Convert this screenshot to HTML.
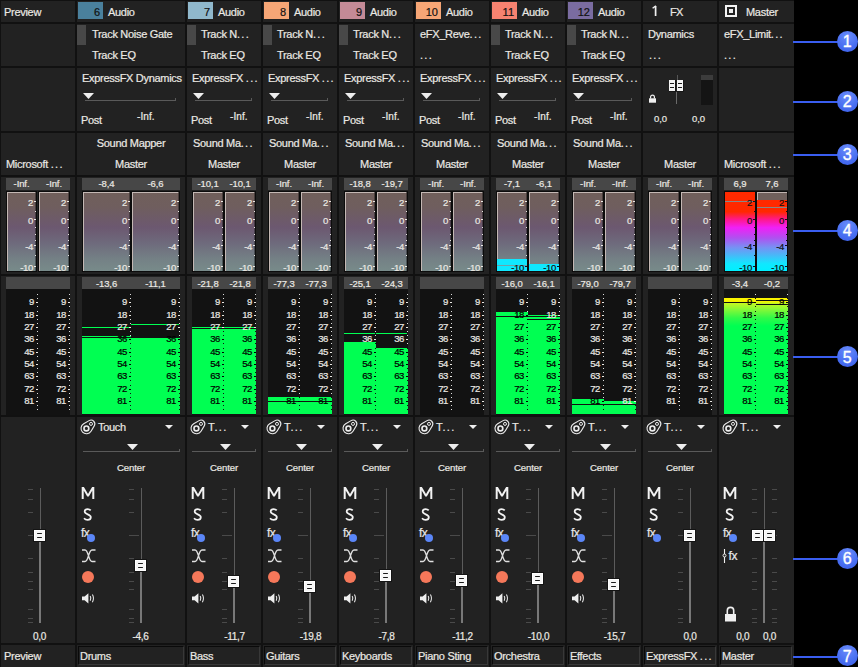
<!DOCTYPE html><html><head><meta charset="utf-8"><style>
html,body{margin:0;padding:0;}
body{width:858px;height:667px;position:relative;overflow:hidden;background:#111;font-family:"Liberation Sans", sans-serif;}
div,span,svg{position:absolute;}
span{white-space:nowrap;-webkit-text-stroke:0.2px currentColor;} b.e{position:static;font-weight:normal;letter-spacing:1.3px;}
</style></head><body>
<div style="left:794px;top:0px;width:64px;height:667px;background:#000;"></div>
<div style="left:1px;top:1px;width:74px;height:21px;background:#222;"></div>
<div style="left:1px;top:24px;width:74px;height:42px;background:#222;"></div>
<div style="left:1px;top:68px;width:74px;height:63px;background:#222;"></div>
<div style="left:1px;top:133px;width:74px;height:42px;background:#222;"></div>
<div style="left:1px;top:177px;width:74px;height:97px;background:#222;"></div>
<div style="left:1px;top:276px;width:74px;height:139px;background:#222;"></div>
<div style="left:1px;top:417px;width:74px;height:226px;background:#222;"></div>
<div style="left:1px;top:645px;width:74px;height:22px;background:#222;"></div>
<div style="left:77px;top:1px;width:108px;height:21px;background:#222;"></div>
<div style="left:77px;top:24px;width:108px;height:42px;background:#222;"></div>
<div style="left:77px;top:68px;width:108px;height:63px;background:#222;"></div>
<div style="left:77px;top:133px;width:108px;height:42px;background:#222;"></div>
<div style="left:77px;top:177px;width:108px;height:97px;background:#222;"></div>
<div style="left:77px;top:276px;width:108px;height:139px;background:#222;"></div>
<div style="left:77px;top:417px;width:108px;height:226px;background:#222;"></div>
<div style="left:77px;top:645px;width:108px;height:22px;background:#222;"></div>
<div style="left:187px;top:1px;width:74px;height:21px;background:#222;"></div>
<div style="left:187px;top:24px;width:74px;height:42px;background:#222;"></div>
<div style="left:187px;top:68px;width:74px;height:63px;background:#222;"></div>
<div style="left:187px;top:133px;width:74px;height:42px;background:#222;"></div>
<div style="left:187px;top:177px;width:74px;height:97px;background:#222;"></div>
<div style="left:187px;top:276px;width:74px;height:139px;background:#222;"></div>
<div style="left:187px;top:417px;width:74px;height:226px;background:#222;"></div>
<div style="left:187px;top:645px;width:74px;height:22px;background:#222;"></div>
<div style="left:263px;top:1px;width:74px;height:21px;background:#222;"></div>
<div style="left:263px;top:24px;width:74px;height:42px;background:#222;"></div>
<div style="left:263px;top:68px;width:74px;height:63px;background:#222;"></div>
<div style="left:263px;top:133px;width:74px;height:42px;background:#222;"></div>
<div style="left:263px;top:177px;width:74px;height:97px;background:#222;"></div>
<div style="left:263px;top:276px;width:74px;height:139px;background:#222;"></div>
<div style="left:263px;top:417px;width:74px;height:226px;background:#222;"></div>
<div style="left:263px;top:645px;width:74px;height:22px;background:#222;"></div>
<div style="left:339px;top:1px;width:74px;height:21px;background:#222;"></div>
<div style="left:339px;top:24px;width:74px;height:42px;background:#222;"></div>
<div style="left:339px;top:68px;width:74px;height:63px;background:#222;"></div>
<div style="left:339px;top:133px;width:74px;height:42px;background:#222;"></div>
<div style="left:339px;top:177px;width:74px;height:97px;background:#222;"></div>
<div style="left:339px;top:276px;width:74px;height:139px;background:#222;"></div>
<div style="left:339px;top:417px;width:74px;height:226px;background:#222;"></div>
<div style="left:339px;top:645px;width:74px;height:22px;background:#222;"></div>
<div style="left:415px;top:1px;width:74px;height:21px;background:#222;"></div>
<div style="left:415px;top:24px;width:74px;height:42px;background:#222;"></div>
<div style="left:415px;top:68px;width:74px;height:63px;background:#222;"></div>
<div style="left:415px;top:133px;width:74px;height:42px;background:#222;"></div>
<div style="left:415px;top:177px;width:74px;height:97px;background:#222;"></div>
<div style="left:415px;top:276px;width:74px;height:139px;background:#222;"></div>
<div style="left:415px;top:417px;width:74px;height:226px;background:#222;"></div>
<div style="left:415px;top:645px;width:74px;height:22px;background:#222;"></div>
<div style="left:491px;top:1px;width:74px;height:21px;background:#222;"></div>
<div style="left:491px;top:24px;width:74px;height:42px;background:#222;"></div>
<div style="left:491px;top:68px;width:74px;height:63px;background:#222;"></div>
<div style="left:491px;top:133px;width:74px;height:42px;background:#222;"></div>
<div style="left:491px;top:177px;width:74px;height:97px;background:#222;"></div>
<div style="left:491px;top:276px;width:74px;height:139px;background:#222;"></div>
<div style="left:491px;top:417px;width:74px;height:226px;background:#222;"></div>
<div style="left:491px;top:645px;width:74px;height:22px;background:#222;"></div>
<div style="left:567px;top:1px;width:74px;height:21px;background:#222;"></div>
<div style="left:567px;top:24px;width:74px;height:42px;background:#222;"></div>
<div style="left:567px;top:68px;width:74px;height:63px;background:#222;"></div>
<div style="left:567px;top:133px;width:74px;height:42px;background:#222;"></div>
<div style="left:567px;top:177px;width:74px;height:97px;background:#222;"></div>
<div style="left:567px;top:276px;width:74px;height:139px;background:#222;"></div>
<div style="left:567px;top:417px;width:74px;height:226px;background:#222;"></div>
<div style="left:567px;top:645px;width:74px;height:22px;background:#222;"></div>
<div style="left:643px;top:1px;width:74px;height:21px;background:#222;"></div>
<div style="left:643px;top:24px;width:74px;height:42px;background:#222;"></div>
<div style="left:643px;top:68px;width:74px;height:63px;background:#222;"></div>
<div style="left:643px;top:133px;width:74px;height:42px;background:#222;"></div>
<div style="left:643px;top:177px;width:74px;height:97px;background:#222;"></div>
<div style="left:643px;top:276px;width:74px;height:139px;background:#222;"></div>
<div style="left:643px;top:417px;width:74px;height:226px;background:#222;"></div>
<div style="left:643px;top:645px;width:74px;height:22px;background:#222;"></div>
<div style="left:719px;top:1px;width:75px;height:21px;background:#222;"></div>
<div style="left:719px;top:24px;width:75px;height:42px;background:#222;"></div>
<div style="left:719px;top:68px;width:75px;height:63px;background:#222;"></div>
<div style="left:719px;top:133px;width:75px;height:42px;background:#222;"></div>
<div style="left:719px;top:177px;width:75px;height:97px;background:#222;"></div>
<div style="left:719px;top:276px;width:75px;height:139px;background:#222;"></div>
<div style="left:719px;top:417px;width:75px;height:226px;background:#222;"></div>
<div style="left:719px;top:645px;width:75px;height:22px;background:#222;"></div>
<span style="left:4px;top:6.69px;font-size:11px;line-height:11px;color:#ebe9e4;letter-spacing:-0.3px;">Preview</span>
<div style="left:78px;top:2px;width:25px;height:17px;background:#4a809c;"></div>
<span style="left:78px;top:6.69px;width:22px;text-align:right;font-size:11px;line-height:11px;color:#111;letter-spacing:0px;">6</span>
<span style="left:108px;top:6.69px;font-size:11px;line-height:11px;color:#ebe9e4;letter-spacing:-0.3px;">Audio</span>
<div style="left:188px;top:2px;width:25px;height:17px;background:#90b8cc;"></div>
<span style="left:188px;top:6.69px;width:22px;text-align:right;font-size:11px;line-height:11px;color:#111;letter-spacing:0px;">7</span>
<span style="left:218px;top:6.69px;font-size:11px;line-height:11px;color:#ebe9e4;letter-spacing:-0.3px;">Audio</span>
<div style="left:264px;top:2px;width:25px;height:17px;background:#f6a676;"></div>
<span style="left:264px;top:6.69px;width:22px;text-align:right;font-size:11px;line-height:11px;color:#111;letter-spacing:0px;">8</span>
<span style="left:294px;top:6.69px;font-size:11px;line-height:11px;color:#ebe9e4;letter-spacing:-0.3px;">Audio</span>
<div style="left:340px;top:2px;width:25px;height:17px;background:#c48a96;"></div>
<span style="left:340px;top:6.69px;width:22px;text-align:right;font-size:11px;line-height:11px;color:#111;letter-spacing:0px;">9</span>
<span style="left:370px;top:6.69px;font-size:11px;line-height:11px;color:#ebe9e4;letter-spacing:-0.3px;">Audio</span>
<div style="left:416px;top:2px;width:25px;height:17px;background:#f6a676;"></div>
<span style="left:416px;top:6.69px;width:22px;text-align:right;font-size:11px;line-height:11px;color:#111;letter-spacing:0px;">10</span>
<span style="left:446px;top:6.69px;font-size:11px;line-height:11px;color:#ebe9e4;letter-spacing:-0.3px;">Audio</span>
<div style="left:492px;top:2px;width:25px;height:17px;background:#f68270;"></div>
<span style="left:492px;top:6.69px;width:22px;text-align:right;font-size:11px;line-height:11px;color:#111;letter-spacing:0px;">11</span>
<span style="left:522px;top:6.69px;font-size:11px;line-height:11px;color:#ebe9e4;letter-spacing:-0.3px;">Audio</span>
<div style="left:568px;top:2px;width:25px;height:17px;background:#7a6ca0;"></div>
<span style="left:568px;top:6.69px;width:22px;text-align:right;font-size:11px;line-height:11px;color:#111;letter-spacing:0px;">12</span>
<span style="left:598px;top:6.69px;font-size:11px;line-height:11px;color:#ebe9e4;letter-spacing:-0.3px;">Audio</span>
<svg style="left:650px;top:4px" width="10" height="14" viewBox="0 0 10 14"><path d="M5.6,2 V12" stroke="#f2f2f2" stroke-width="1.7"/><path d="M5.9,1.9 L2.6,4.3" stroke="#f2f2f2" stroke-width="1.4"/></svg>
<span style="left:670px;top:6.69px;font-size:11px;line-height:11px;color:#ebe9e4;letter-spacing:-0.6px;">FX</span>
<div style="left:725px;top:5px;width:12px;height:12px;background:transparent;border:2px solid #f4f4f4;box-sizing:border-box;"></div>
<div style="left:729px;top:9px;width:4px;height:4px;background:#eeeeee;"></div>
<span style="left:746px;top:6.69px;font-size:11px;line-height:11px;color:#ebe9e4;letter-spacing:-0.3px;">Master</span>
<div style="left:77px;top:25px;width:9px;height:20px;background:#484848;"></div>
<span style="left:92px;top:28.69px;font-size:11px;line-height:11px;color:#ebe9e4;letter-spacing:-0.3px;">Track Noise Gate</span>
<span style="left:92px;top:49.69px;font-size:11px;line-height:11px;color:#ebe9e4;letter-spacing:-0.3px;">Track EQ</span>
<div style="left:187px;top:25px;width:9px;height:20px;background:#484848;"></div>
<span style="left:201px;top:28.69px;font-size:11px;line-height:11px;color:#ebe9e4;letter-spacing:-0.3px;">Track N<b class="e">...</b></span>
<span style="left:201px;top:49.69px;font-size:11px;line-height:11px;color:#ebe9e4;letter-spacing:-0.3px;">Track EQ</span>
<div style="left:263px;top:25px;width:9px;height:20px;background:#484848;"></div>
<span style="left:277px;top:28.69px;font-size:11px;line-height:11px;color:#ebe9e4;letter-spacing:-0.3px;">Track N<b class="e">...</b></span>
<span style="left:277px;top:49.69px;font-size:11px;line-height:11px;color:#ebe9e4;letter-spacing:-0.3px;">Track EQ</span>
<div style="left:339px;top:25px;width:9px;height:20px;background:#484848;"></div>
<span style="left:353px;top:28.69px;font-size:11px;line-height:11px;color:#ebe9e4;letter-spacing:-0.3px;">Track N<b class="e">...</b></span>
<span style="left:353px;top:49.69px;font-size:11px;line-height:11px;color:#ebe9e4;letter-spacing:-0.3px;">Track EQ</span>
<span style="left:420px;top:28.69px;font-size:11px;line-height:11px;color:#ebe9e4;letter-spacing:-0.3px;">eFX_Reve<b class="e">...</b></span>
<span style="left:420px;top:49.69px;font-size:11px;line-height:11px;color:#ebe9e4;letter-spacing:-0.3px;"><b class="e">...</b></span>
<div style="left:491px;top:25px;width:9px;height:20px;background:#484848;"></div>
<span style="left:505px;top:28.69px;font-size:11px;line-height:11px;color:#ebe9e4;letter-spacing:-0.3px;">Track N<b class="e">...</b></span>
<span style="left:505px;top:49.69px;font-size:11px;line-height:11px;color:#ebe9e4;letter-spacing:-0.3px;">Track EQ</span>
<div style="left:567px;top:25px;width:9px;height:20px;background:#484848;"></div>
<span style="left:581px;top:28.69px;font-size:11px;line-height:11px;color:#ebe9e4;letter-spacing:-0.3px;">Track N<b class="e">...</b></span>
<span style="left:581px;top:49.69px;font-size:11px;line-height:11px;color:#ebe9e4;letter-spacing:-0.3px;">Track EQ</span>
<span style="left:648px;top:28.69px;font-size:11px;line-height:11px;color:#ebe9e4;letter-spacing:-0.3px;">Dynamics</span>
<span style="left:649px;top:49.69px;font-size:11px;line-height:11px;color:#ebe9e4;letter-spacing:-0.3px;"><b class="e">...</b></span>
<span style="left:724px;top:28.69px;font-size:11px;line-height:11px;color:#ebe9e4;letter-spacing:-0.3px;">eFX_Limit<b class="e">...</b></span>
<span style="left:724px;top:49.69px;font-size:11px;line-height:11px;color:#ebe9e4;letter-spacing:-0.3px;"><b class="e">...</b></span>
<span style="left:82px;top:72.69px;font-size:11px;line-height:11px;color:#ebe9e4;letter-spacing:-0.3px;">ExpressFX Dynamics</span>
<svg style="left:83px;top:93px" width="11" height="6"><polygon points="0,0 11,0 5.5,6" fill="#eee"/></svg>
<div style="left:85px;top:100px;width:91px;height:1px;background:#5a5a5a;"></div>
<div style="left:175px;top:98px;width:1px;height:2px;background:#5a5a5a;"></div>
<span style="left:81px;top:114.69px;font-size:11px;line-height:11px;color:#ebe9e4;letter-spacing:-0.3px;">Post</span>
<span style="left:137px;top:111.53px;font-size:10px;line-height:10px;color:#ebe9e4;letter-spacing:0.1px;">-Inf.</span>
<span style="left:192px;top:72.69px;font-size:11px;line-height:11px;color:#ebe9e4;letter-spacing:-0.3px;">ExpressFX <b class="e">...</b></span>
<svg style="left:193px;top:93px" width="11" height="6"><polygon points="0,0 11,0 5.5,6" fill="#eee"/></svg>
<div style="left:195px;top:100px;width:57px;height:1px;background:#5a5a5a;"></div>
<div style="left:251px;top:98px;width:1px;height:2px;background:#5a5a5a;"></div>
<span style="left:191px;top:114.69px;font-size:11px;line-height:11px;color:#ebe9e4;letter-spacing:-0.3px;">Post</span>
<span style="left:230px;top:111.53px;font-size:10px;line-height:10px;color:#ebe9e4;letter-spacing:0.1px;">-Inf.</span>
<span style="left:268px;top:72.69px;font-size:11px;line-height:11px;color:#ebe9e4;letter-spacing:-0.3px;">ExpressFX <b class="e">...</b></span>
<svg style="left:269px;top:93px" width="11" height="6"><polygon points="0,0 11,0 5.5,6" fill="#eee"/></svg>
<div style="left:271px;top:100px;width:57px;height:1px;background:#5a5a5a;"></div>
<div style="left:327px;top:98px;width:1px;height:2px;background:#5a5a5a;"></div>
<span style="left:267px;top:114.69px;font-size:11px;line-height:11px;color:#ebe9e4;letter-spacing:-0.3px;">Post</span>
<span style="left:306px;top:111.53px;font-size:10px;line-height:10px;color:#ebe9e4;letter-spacing:0.1px;">-Inf.</span>
<span style="left:344px;top:72.69px;font-size:11px;line-height:11px;color:#ebe9e4;letter-spacing:-0.3px;">ExpressFX <b class="e">...</b></span>
<svg style="left:345px;top:93px" width="11" height="6"><polygon points="0,0 11,0 5.5,6" fill="#eee"/></svg>
<div style="left:347px;top:100px;width:57px;height:1px;background:#5a5a5a;"></div>
<div style="left:403px;top:98px;width:1px;height:2px;background:#5a5a5a;"></div>
<span style="left:343px;top:114.69px;font-size:11px;line-height:11px;color:#ebe9e4;letter-spacing:-0.3px;">Post</span>
<span style="left:382px;top:111.53px;font-size:10px;line-height:10px;color:#ebe9e4;letter-spacing:0.1px;">-Inf.</span>
<span style="left:420px;top:72.69px;font-size:11px;line-height:11px;color:#ebe9e4;letter-spacing:-0.3px;">ExpressFX <b class="e">...</b></span>
<svg style="left:421px;top:93px" width="11" height="6"><polygon points="0,0 11,0 5.5,6" fill="#eee"/></svg>
<div style="left:423px;top:100px;width:57px;height:1px;background:#5a5a5a;"></div>
<div style="left:479px;top:98px;width:1px;height:2px;background:#5a5a5a;"></div>
<span style="left:419px;top:114.69px;font-size:11px;line-height:11px;color:#ebe9e4;letter-spacing:-0.3px;">Post</span>
<span style="left:458px;top:111.53px;font-size:10px;line-height:10px;color:#ebe9e4;letter-spacing:0.1px;">-Inf.</span>
<span style="left:496px;top:72.69px;font-size:11px;line-height:11px;color:#ebe9e4;letter-spacing:-0.3px;">ExpressFX <b class="e">...</b></span>
<svg style="left:497px;top:93px" width="11" height="6"><polygon points="0,0 11,0 5.5,6" fill="#eee"/></svg>
<div style="left:499px;top:100px;width:57px;height:1px;background:#5a5a5a;"></div>
<div style="left:555px;top:98px;width:1px;height:2px;background:#5a5a5a;"></div>
<span style="left:495px;top:114.69px;font-size:11px;line-height:11px;color:#ebe9e4;letter-spacing:-0.3px;">Post</span>
<span style="left:534px;top:111.53px;font-size:10px;line-height:10px;color:#ebe9e4;letter-spacing:0.1px;">-Inf.</span>
<span style="left:572px;top:72.69px;font-size:11px;line-height:11px;color:#ebe9e4;letter-spacing:-0.3px;">ExpressFX <b class="e">...</b></span>
<svg style="left:573px;top:93px" width="11" height="6"><polygon points="0,0 11,0 5.5,6" fill="#eee"/></svg>
<div style="left:575px;top:100px;width:57px;height:1px;background:#5a5a5a;"></div>
<div style="left:631px;top:98px;width:1px;height:2px;background:#5a5a5a;"></div>
<span style="left:571px;top:114.69px;font-size:11px;line-height:11px;color:#ebe9e4;letter-spacing:-0.3px;">Post</span>
<span style="left:610px;top:111.53px;font-size:10px;line-height:10px;color:#ebe9e4;letter-spacing:0.1px;">-Inf.</span>
<div style="left:677px;top:75px;width:1px;height:5px;background:#555;"></div>
<div style="left:676px;top:92px;width:1px;height:12px;background:#6a6a6a;"></div>
<div style="left:668.5px;top:79.5px;width:7px;height:12px;background:#161616;"></div>
<div style="left:669px;top:80px;width:6px;height:11px;background:#f4f4f4;"></div>
<div style="left:670px;top:83px;width:4px;height:1px;background:#1a1a1a;"></div>
<div style="left:670px;top:87px;width:4px;height:1px;background:#1a1a1a;"></div>
<div style="left:676.5px;top:79.5px;width:7px;height:12px;background:#161616;"></div>
<div style="left:677px;top:80px;width:6px;height:11px;background:#f4f4f4;"></div>
<div style="left:678px;top:83px;width:4px;height:1px;background:#1a1a1a;"></div>
<div style="left:678px;top:87px;width:4px;height:1px;background:#1a1a1a;"></div>
<div style="left:701px;top:75px;width:12px;height:30px;background:#141414;"></div>
<div style="left:701px;top:75px;width:12px;height:5px;background:#3c3c3c;"></div>
<svg style="left:649px;top:93.5px" width="7" height="9" viewBox="0 0 7 9"><path d="M1.6,4.5 V3 A1.9,1.9 0 0 1 5.4,3 V4.5" stroke="#f0f0f0" stroke-width="1.2" fill="none"/><rect x="0" y="4.3" width="7" height="4.4" fill="#f0f0f0"/></svg>
<span style="left:654px;top:114.16px;font-size:9.5px;line-height:9.5px;color:#ebe9e4;letter-spacing:-0.1px;">0,0</span>
<span style="left:692px;top:114.16px;font-size:9.5px;line-height:9.5px;color:#ebe9e4;letter-spacing:-0.1px;">0,0</span>
<span style="left:6px;top:158.69px;font-size:11px;line-height:11px;color:#ebe9e4;letter-spacing:-0.3px;">Microsoft <b class="e">...</b></span>
<span style="left:77px;top:137.69px;width:108px;text-align:center;font-size:11px;line-height:11px;color:#ebe9e4;letter-spacing:-0.3px;">Sound Mapper</span>
<span style="left:77px;top:158.69px;width:108px;text-align:center;font-size:11px;line-height:11px;color:#ebe9e4;letter-spacing:-0.3px;">Master</span>
<span style="left:193px;top:137.69px;font-size:11px;line-height:11px;color:#ebe9e4;letter-spacing:-0.3px;">Sound Ma<b class="e">...</b></span>
<span style="left:187px;top:158.69px;width:74px;text-align:center;font-size:11px;line-height:11px;color:#ebe9e4;letter-spacing:-0.3px;">Master</span>
<span style="left:269px;top:137.69px;font-size:11px;line-height:11px;color:#ebe9e4;letter-spacing:-0.3px;">Sound Ma<b class="e">...</b></span>
<span style="left:263px;top:158.69px;width:74px;text-align:center;font-size:11px;line-height:11px;color:#ebe9e4;letter-spacing:-0.3px;">Master</span>
<span style="left:345px;top:137.69px;font-size:11px;line-height:11px;color:#ebe9e4;letter-spacing:-0.3px;">Sound Ma<b class="e">...</b></span>
<span style="left:339px;top:158.69px;width:74px;text-align:center;font-size:11px;line-height:11px;color:#ebe9e4;letter-spacing:-0.3px;">Master</span>
<span style="left:421px;top:137.69px;font-size:11px;line-height:11px;color:#ebe9e4;letter-spacing:-0.3px;">Sound Ma<b class="e">...</b></span>
<span style="left:415px;top:158.69px;width:74px;text-align:center;font-size:11px;line-height:11px;color:#ebe9e4;letter-spacing:-0.3px;">Master</span>
<span style="left:497px;top:137.69px;font-size:11px;line-height:11px;color:#ebe9e4;letter-spacing:-0.3px;">Sound Ma<b class="e">...</b></span>
<span style="left:491px;top:158.69px;width:74px;text-align:center;font-size:11px;line-height:11px;color:#ebe9e4;letter-spacing:-0.3px;">Master</span>
<span style="left:573px;top:137.69px;font-size:11px;line-height:11px;color:#ebe9e4;letter-spacing:-0.3px;">Sound Ma<b class="e">...</b></span>
<span style="left:567px;top:158.69px;width:74px;text-align:center;font-size:11px;line-height:11px;color:#ebe9e4;letter-spacing:-0.3px;">Master</span>
<span style="left:643px;top:158.69px;width:74px;text-align:center;font-size:11px;line-height:11px;color:#ebe9e4;letter-spacing:-0.3px;">Master</span>
<span style="left:724px;top:158.69px;font-size:11px;line-height:11px;color:#ebe9e4;letter-spacing:-0.3px;">Microsoft <b class="e">...</b></span>
<div style="left:6px;top:178px;width:64px;height:12px;background:#474747;"></div>
<span style="left:7px;top:179.16px;width:29px;text-align:center;font-size:9.5px;line-height:9.5px;color:#ebe9e4;letter-spacing:-0.1px;">-Inf.</span>
<div style="left:6px;top:191px;width:31px;height:81px;background:#0c0c0c;"></div>
<div style="left:7px;top:192px;width:29px;height:79px;background:linear-gradient(to bottom,#705f5b 0%,#6f5e5e 18%,#6c5870 44%,#6e6a7c 64%,#748085 84%,#788b8a 100%);border-top:1px solid #c4b8b4;border-left:1px solid #c4b8b4;border-right:1px solid rgba(0,0,0,0.35);box-sizing:border-box;"></div>
<span style="left:7px;top:197.87px;width:26px;text-align:right;font-size:9.6px;line-height:9.6px;color:#ebe9e4;letter-spacing:-0.4px;">2</span>
<div style="left:34px;top:201px;width:2px;height:1px;background:#ebe9e4;"></div>
<span style="left:7px;top:215.87px;width:26px;text-align:right;font-size:9.6px;line-height:9.6px;color:#ebe9e4;letter-spacing:-0.4px;">0</span>
<div style="left:34px;top:219px;width:2px;height:1px;background:#ebe9e4;"></div>
<span style="left:7px;top:241.87px;width:26px;text-align:right;font-size:9.6px;line-height:9.6px;color:#ebe9e4;letter-spacing:-0.4px;">-4</span>
<div style="left:34px;top:245px;width:2px;height:1px;background:#ebe9e4;"></div>
<span style="left:7px;top:262.87px;width:26px;text-align:right;font-size:9.6px;line-height:9.6px;color:#ebe9e4;letter-spacing:-0.4px;">-10</span>
<div style="left:34px;top:266px;width:2px;height:1px;background:#ebe9e4;"></div>
<div style="left:35px;top:211px;width:1px;height:1px;background:#ebe9e4;"></div>
<div style="left:35px;top:227px;width:1px;height:1px;background:#ebe9e4;"></div>
<div style="left:35px;top:234px;width:1px;height:1px;background:#ebe9e4;"></div>
<div style="left:35px;top:240px;width:1px;height:1px;background:#ebe9e4;"></div>
<div style="left:35px;top:255px;width:1px;height:1px;background:#ebe9e4;"></div>
<span style="left:39px;top:179.16px;width:30px;text-align:center;font-size:9.5px;line-height:9.5px;color:#ebe9e4;letter-spacing:-0.1px;">-Inf.</span>
<div style="left:38px;top:191px;width:32px;height:81px;background:#0c0c0c;"></div>
<div style="left:39px;top:192px;width:30px;height:79px;background:linear-gradient(to bottom,#705f5b 0%,#6f5e5e 18%,#6c5870 44%,#6e6a7c 64%,#748085 84%,#788b8a 100%);border-top:1px solid #c4b8b4;border-left:1px solid #c4b8b4;border-right:1px solid rgba(0,0,0,0.35);box-sizing:border-box;"></div>
<span style="left:39px;top:197.87px;width:27px;text-align:right;font-size:9.6px;line-height:9.6px;color:#ebe9e4;letter-spacing:-0.4px;">2</span>
<div style="left:67px;top:201px;width:2px;height:1px;background:#ebe9e4;"></div>
<span style="left:39px;top:215.87px;width:27px;text-align:right;font-size:9.6px;line-height:9.6px;color:#ebe9e4;letter-spacing:-0.4px;">0</span>
<div style="left:67px;top:219px;width:2px;height:1px;background:#ebe9e4;"></div>
<span style="left:39px;top:241.87px;width:27px;text-align:right;font-size:9.6px;line-height:9.6px;color:#ebe9e4;letter-spacing:-0.4px;">-4</span>
<div style="left:67px;top:245px;width:2px;height:1px;background:#ebe9e4;"></div>
<span style="left:39px;top:262.87px;width:27px;text-align:right;font-size:9.6px;line-height:9.6px;color:#ebe9e4;letter-spacing:-0.4px;">-10</span>
<div style="left:67px;top:266px;width:2px;height:1px;background:#ebe9e4;"></div>
<div style="left:68px;top:211px;width:1px;height:1px;background:#ebe9e4;"></div>
<div style="left:68px;top:227px;width:1px;height:1px;background:#ebe9e4;"></div>
<div style="left:68px;top:234px;width:1px;height:1px;background:#ebe9e4;"></div>
<div style="left:68px;top:240px;width:1px;height:1px;background:#ebe9e4;"></div>
<div style="left:68px;top:255px;width:1px;height:1px;background:#ebe9e4;"></div>
<div style="left:82px;top:178px;width:98px;height:12px;background:#474747;"></div>
<span style="left:83px;top:179.16px;width:47px;text-align:center;font-size:9.5px;line-height:9.5px;color:#ebe9e4;letter-spacing:-0.1px;">-8,4</span>
<div style="left:82px;top:191px;width:49px;height:81px;background:#0c0c0c;"></div>
<div style="left:83px;top:192px;width:47px;height:79px;background:linear-gradient(to bottom,#705f5b 0%,#6f5e5e 18%,#6c5870 44%,#6e6a7c 64%,#748085 84%,#788b8a 100%);border-top:1px solid #c4b8b4;border-left:1px solid #c4b8b4;border-right:1px solid rgba(0,0,0,0.35);box-sizing:border-box;"></div>
<span style="left:83px;top:197.87px;width:44px;text-align:right;font-size:9.6px;line-height:9.6px;color:#ebe9e4;letter-spacing:-0.4px;">2</span>
<div style="left:128px;top:201px;width:2px;height:1px;background:#ebe9e4;"></div>
<span style="left:83px;top:215.87px;width:44px;text-align:right;font-size:9.6px;line-height:9.6px;color:#ebe9e4;letter-spacing:-0.4px;">0</span>
<div style="left:128px;top:219px;width:2px;height:1px;background:#ebe9e4;"></div>
<span style="left:83px;top:241.87px;width:44px;text-align:right;font-size:9.6px;line-height:9.6px;color:#ebe9e4;letter-spacing:-0.4px;">-4</span>
<div style="left:128px;top:245px;width:2px;height:1px;background:#ebe9e4;"></div>
<span style="left:83px;top:262.87px;width:44px;text-align:right;font-size:9.6px;line-height:9.6px;color:#ebe9e4;letter-spacing:-0.4px;">-10</span>
<div style="left:128px;top:266px;width:2px;height:1px;background:#ebe9e4;"></div>
<div style="left:129px;top:211px;width:1px;height:1px;background:#ebe9e4;"></div>
<div style="left:129px;top:227px;width:1px;height:1px;background:#ebe9e4;"></div>
<div style="left:129px;top:234px;width:1px;height:1px;background:#ebe9e4;"></div>
<div style="left:129px;top:240px;width:1px;height:1px;background:#ebe9e4;"></div>
<div style="left:129px;top:255px;width:1px;height:1px;background:#ebe9e4;"></div>
<span style="left:132px;top:179.16px;width:47px;text-align:center;font-size:9.5px;line-height:9.5px;color:#ebe9e4;letter-spacing:-0.1px;">-6,6</span>
<div style="left:131px;top:191px;width:49px;height:81px;background:#0c0c0c;"></div>
<div style="left:132px;top:192px;width:47px;height:79px;background:linear-gradient(to bottom,#705f5b 0%,#6f5e5e 18%,#6c5870 44%,#6e6a7c 64%,#748085 84%,#788b8a 100%);border-top:1px solid #c4b8b4;border-left:1px solid #c4b8b4;border-right:1px solid rgba(0,0,0,0.35);box-sizing:border-box;"></div>
<span style="left:132px;top:197.87px;width:44px;text-align:right;font-size:9.6px;line-height:9.6px;color:#ebe9e4;letter-spacing:-0.4px;">2</span>
<div style="left:177px;top:201px;width:2px;height:1px;background:#ebe9e4;"></div>
<span style="left:132px;top:215.87px;width:44px;text-align:right;font-size:9.6px;line-height:9.6px;color:#ebe9e4;letter-spacing:-0.4px;">0</span>
<div style="left:177px;top:219px;width:2px;height:1px;background:#ebe9e4;"></div>
<span style="left:132px;top:241.87px;width:44px;text-align:right;font-size:9.6px;line-height:9.6px;color:#ebe9e4;letter-spacing:-0.4px;">-4</span>
<div style="left:177px;top:245px;width:2px;height:1px;background:#ebe9e4;"></div>
<span style="left:132px;top:262.87px;width:44px;text-align:right;font-size:9.6px;line-height:9.6px;color:#ebe9e4;letter-spacing:-0.4px;">-10</span>
<div style="left:177px;top:266px;width:2px;height:1px;background:#ebe9e4;"></div>
<div style="left:178px;top:211px;width:1px;height:1px;background:#ebe9e4;"></div>
<div style="left:178px;top:227px;width:1px;height:1px;background:#ebe9e4;"></div>
<div style="left:178px;top:234px;width:1px;height:1px;background:#ebe9e4;"></div>
<div style="left:178px;top:240px;width:1px;height:1px;background:#ebe9e4;"></div>
<div style="left:178px;top:255px;width:1px;height:1px;background:#ebe9e4;"></div>
<div style="left:192px;top:178px;width:64px;height:12px;background:#474747;"></div>
<span style="left:193px;top:179.16px;width:30px;text-align:center;font-size:9.5px;line-height:9.5px;color:#ebe9e4;letter-spacing:-0.1px;">-10,1</span>
<div style="left:192px;top:191px;width:32px;height:81px;background:#0c0c0c;"></div>
<div style="left:193px;top:192px;width:30px;height:79px;background:linear-gradient(to bottom,#705f5b 0%,#6f5e5e 18%,#6c5870 44%,#6e6a7c 64%,#748085 84%,#788b8a 100%);border-top:1px solid #c4b8b4;border-left:1px solid #c4b8b4;border-right:1px solid rgba(0,0,0,0.35);box-sizing:border-box;"></div>
<span style="left:193px;top:197.87px;width:27px;text-align:right;font-size:9.6px;line-height:9.6px;color:#ebe9e4;letter-spacing:-0.4px;">2</span>
<div style="left:221px;top:201px;width:2px;height:1px;background:#ebe9e4;"></div>
<span style="left:193px;top:215.87px;width:27px;text-align:right;font-size:9.6px;line-height:9.6px;color:#ebe9e4;letter-spacing:-0.4px;">0</span>
<div style="left:221px;top:219px;width:2px;height:1px;background:#ebe9e4;"></div>
<span style="left:193px;top:241.87px;width:27px;text-align:right;font-size:9.6px;line-height:9.6px;color:#ebe9e4;letter-spacing:-0.4px;">-4</span>
<div style="left:221px;top:245px;width:2px;height:1px;background:#ebe9e4;"></div>
<span style="left:193px;top:262.87px;width:27px;text-align:right;font-size:9.6px;line-height:9.6px;color:#ebe9e4;letter-spacing:-0.4px;">-10</span>
<div style="left:221px;top:266px;width:2px;height:1px;background:#ebe9e4;"></div>
<div style="left:222px;top:211px;width:1px;height:1px;background:#ebe9e4;"></div>
<div style="left:222px;top:227px;width:1px;height:1px;background:#ebe9e4;"></div>
<div style="left:222px;top:234px;width:1px;height:1px;background:#ebe9e4;"></div>
<div style="left:222px;top:240px;width:1px;height:1px;background:#ebe9e4;"></div>
<div style="left:222px;top:255px;width:1px;height:1px;background:#ebe9e4;"></div>
<span style="left:225px;top:179.16px;width:30px;text-align:center;font-size:9.5px;line-height:9.5px;color:#ebe9e4;letter-spacing:-0.1px;">-10,1</span>
<div style="left:224px;top:191px;width:32px;height:81px;background:#0c0c0c;"></div>
<div style="left:225px;top:192px;width:30px;height:79px;background:linear-gradient(to bottom,#705f5b 0%,#6f5e5e 18%,#6c5870 44%,#6e6a7c 64%,#748085 84%,#788b8a 100%);border-top:1px solid #c4b8b4;border-left:1px solid #c4b8b4;border-right:1px solid rgba(0,0,0,0.35);box-sizing:border-box;"></div>
<span style="left:225px;top:197.87px;width:27px;text-align:right;font-size:9.6px;line-height:9.6px;color:#ebe9e4;letter-spacing:-0.4px;">2</span>
<div style="left:253px;top:201px;width:2px;height:1px;background:#ebe9e4;"></div>
<span style="left:225px;top:215.87px;width:27px;text-align:right;font-size:9.6px;line-height:9.6px;color:#ebe9e4;letter-spacing:-0.4px;">0</span>
<div style="left:253px;top:219px;width:2px;height:1px;background:#ebe9e4;"></div>
<span style="left:225px;top:241.87px;width:27px;text-align:right;font-size:9.6px;line-height:9.6px;color:#ebe9e4;letter-spacing:-0.4px;">-4</span>
<div style="left:253px;top:245px;width:2px;height:1px;background:#ebe9e4;"></div>
<span style="left:225px;top:262.87px;width:27px;text-align:right;font-size:9.6px;line-height:9.6px;color:#ebe9e4;letter-spacing:-0.4px;">-10</span>
<div style="left:253px;top:266px;width:2px;height:1px;background:#ebe9e4;"></div>
<div style="left:254px;top:211px;width:1px;height:1px;background:#ebe9e4;"></div>
<div style="left:254px;top:227px;width:1px;height:1px;background:#ebe9e4;"></div>
<div style="left:254px;top:234px;width:1px;height:1px;background:#ebe9e4;"></div>
<div style="left:254px;top:240px;width:1px;height:1px;background:#ebe9e4;"></div>
<div style="left:254px;top:255px;width:1px;height:1px;background:#ebe9e4;"></div>
<div style="left:268px;top:178px;width:64px;height:12px;background:#474747;"></div>
<span style="left:269px;top:179.16px;width:30px;text-align:center;font-size:9.5px;line-height:9.5px;color:#ebe9e4;letter-spacing:-0.1px;">-Inf.</span>
<div style="left:268px;top:191px;width:32px;height:81px;background:#0c0c0c;"></div>
<div style="left:269px;top:192px;width:30px;height:79px;background:linear-gradient(to bottom,#705f5b 0%,#6f5e5e 18%,#6c5870 44%,#6e6a7c 64%,#748085 84%,#788b8a 100%);border-top:1px solid #c4b8b4;border-left:1px solid #c4b8b4;border-right:1px solid rgba(0,0,0,0.35);box-sizing:border-box;"></div>
<span style="left:269px;top:197.87px;width:27px;text-align:right;font-size:9.6px;line-height:9.6px;color:#ebe9e4;letter-spacing:-0.4px;">2</span>
<div style="left:297px;top:201px;width:2px;height:1px;background:#ebe9e4;"></div>
<span style="left:269px;top:215.87px;width:27px;text-align:right;font-size:9.6px;line-height:9.6px;color:#ebe9e4;letter-spacing:-0.4px;">0</span>
<div style="left:297px;top:219px;width:2px;height:1px;background:#ebe9e4;"></div>
<span style="left:269px;top:241.87px;width:27px;text-align:right;font-size:9.6px;line-height:9.6px;color:#ebe9e4;letter-spacing:-0.4px;">-4</span>
<div style="left:297px;top:245px;width:2px;height:1px;background:#ebe9e4;"></div>
<span style="left:269px;top:262.87px;width:27px;text-align:right;font-size:9.6px;line-height:9.6px;color:#ebe9e4;letter-spacing:-0.4px;">-10</span>
<div style="left:297px;top:266px;width:2px;height:1px;background:#ebe9e4;"></div>
<div style="left:298px;top:211px;width:1px;height:1px;background:#ebe9e4;"></div>
<div style="left:298px;top:227px;width:1px;height:1px;background:#ebe9e4;"></div>
<div style="left:298px;top:234px;width:1px;height:1px;background:#ebe9e4;"></div>
<div style="left:298px;top:240px;width:1px;height:1px;background:#ebe9e4;"></div>
<div style="left:298px;top:255px;width:1px;height:1px;background:#ebe9e4;"></div>
<span style="left:301px;top:179.16px;width:30px;text-align:center;font-size:9.5px;line-height:9.5px;color:#ebe9e4;letter-spacing:-0.1px;">-Inf.</span>
<div style="left:300px;top:191px;width:32px;height:81px;background:#0c0c0c;"></div>
<div style="left:301px;top:192px;width:30px;height:79px;background:linear-gradient(to bottom,#705f5b 0%,#6f5e5e 18%,#6c5870 44%,#6e6a7c 64%,#748085 84%,#788b8a 100%);border-top:1px solid #c4b8b4;border-left:1px solid #c4b8b4;border-right:1px solid rgba(0,0,0,0.35);box-sizing:border-box;"></div>
<span style="left:301px;top:197.87px;width:27px;text-align:right;font-size:9.6px;line-height:9.6px;color:#ebe9e4;letter-spacing:-0.4px;">2</span>
<div style="left:329px;top:201px;width:2px;height:1px;background:#ebe9e4;"></div>
<span style="left:301px;top:215.87px;width:27px;text-align:right;font-size:9.6px;line-height:9.6px;color:#ebe9e4;letter-spacing:-0.4px;">0</span>
<div style="left:329px;top:219px;width:2px;height:1px;background:#ebe9e4;"></div>
<span style="left:301px;top:241.87px;width:27px;text-align:right;font-size:9.6px;line-height:9.6px;color:#ebe9e4;letter-spacing:-0.4px;">-4</span>
<div style="left:329px;top:245px;width:2px;height:1px;background:#ebe9e4;"></div>
<span style="left:301px;top:262.87px;width:27px;text-align:right;font-size:9.6px;line-height:9.6px;color:#ebe9e4;letter-spacing:-0.4px;">-10</span>
<div style="left:329px;top:266px;width:2px;height:1px;background:#ebe9e4;"></div>
<div style="left:330px;top:211px;width:1px;height:1px;background:#ebe9e4;"></div>
<div style="left:330px;top:227px;width:1px;height:1px;background:#ebe9e4;"></div>
<div style="left:330px;top:234px;width:1px;height:1px;background:#ebe9e4;"></div>
<div style="left:330px;top:240px;width:1px;height:1px;background:#ebe9e4;"></div>
<div style="left:330px;top:255px;width:1px;height:1px;background:#ebe9e4;"></div>
<div style="left:344px;top:178px;width:64px;height:12px;background:#474747;"></div>
<span style="left:345px;top:179.16px;width:30px;text-align:center;font-size:9.5px;line-height:9.5px;color:#ebe9e4;letter-spacing:-0.1px;">-18,8</span>
<div style="left:344px;top:191px;width:32px;height:81px;background:#0c0c0c;"></div>
<div style="left:345px;top:192px;width:30px;height:79px;background:linear-gradient(to bottom,#705f5b 0%,#6f5e5e 18%,#6c5870 44%,#6e6a7c 64%,#748085 84%,#788b8a 100%);border-top:1px solid #c4b8b4;border-left:1px solid #c4b8b4;border-right:1px solid rgba(0,0,0,0.35);box-sizing:border-box;"></div>
<span style="left:345px;top:197.87px;width:27px;text-align:right;font-size:9.6px;line-height:9.6px;color:#ebe9e4;letter-spacing:-0.4px;">2</span>
<div style="left:373px;top:201px;width:2px;height:1px;background:#ebe9e4;"></div>
<span style="left:345px;top:215.87px;width:27px;text-align:right;font-size:9.6px;line-height:9.6px;color:#ebe9e4;letter-spacing:-0.4px;">0</span>
<div style="left:373px;top:219px;width:2px;height:1px;background:#ebe9e4;"></div>
<span style="left:345px;top:241.87px;width:27px;text-align:right;font-size:9.6px;line-height:9.6px;color:#ebe9e4;letter-spacing:-0.4px;">-4</span>
<div style="left:373px;top:245px;width:2px;height:1px;background:#ebe9e4;"></div>
<span style="left:345px;top:262.87px;width:27px;text-align:right;font-size:9.6px;line-height:9.6px;color:#ebe9e4;letter-spacing:-0.4px;">-10</span>
<div style="left:373px;top:266px;width:2px;height:1px;background:#ebe9e4;"></div>
<div style="left:374px;top:211px;width:1px;height:1px;background:#ebe9e4;"></div>
<div style="left:374px;top:227px;width:1px;height:1px;background:#ebe9e4;"></div>
<div style="left:374px;top:234px;width:1px;height:1px;background:#ebe9e4;"></div>
<div style="left:374px;top:240px;width:1px;height:1px;background:#ebe9e4;"></div>
<div style="left:374px;top:255px;width:1px;height:1px;background:#ebe9e4;"></div>
<span style="left:377px;top:179.16px;width:30px;text-align:center;font-size:9.5px;line-height:9.5px;color:#ebe9e4;letter-spacing:-0.1px;">-19,7</span>
<div style="left:376px;top:191px;width:32px;height:81px;background:#0c0c0c;"></div>
<div style="left:377px;top:192px;width:30px;height:79px;background:linear-gradient(to bottom,#705f5b 0%,#6f5e5e 18%,#6c5870 44%,#6e6a7c 64%,#748085 84%,#788b8a 100%);border-top:1px solid #c4b8b4;border-left:1px solid #c4b8b4;border-right:1px solid rgba(0,0,0,0.35);box-sizing:border-box;"></div>
<span style="left:377px;top:197.87px;width:27px;text-align:right;font-size:9.6px;line-height:9.6px;color:#ebe9e4;letter-spacing:-0.4px;">2</span>
<div style="left:405px;top:201px;width:2px;height:1px;background:#ebe9e4;"></div>
<span style="left:377px;top:215.87px;width:27px;text-align:right;font-size:9.6px;line-height:9.6px;color:#ebe9e4;letter-spacing:-0.4px;">0</span>
<div style="left:405px;top:219px;width:2px;height:1px;background:#ebe9e4;"></div>
<span style="left:377px;top:241.87px;width:27px;text-align:right;font-size:9.6px;line-height:9.6px;color:#ebe9e4;letter-spacing:-0.4px;">-4</span>
<div style="left:405px;top:245px;width:2px;height:1px;background:#ebe9e4;"></div>
<span style="left:377px;top:262.87px;width:27px;text-align:right;font-size:9.6px;line-height:9.6px;color:#ebe9e4;letter-spacing:-0.4px;">-10</span>
<div style="left:405px;top:266px;width:2px;height:1px;background:#ebe9e4;"></div>
<div style="left:406px;top:211px;width:1px;height:1px;background:#ebe9e4;"></div>
<div style="left:406px;top:227px;width:1px;height:1px;background:#ebe9e4;"></div>
<div style="left:406px;top:234px;width:1px;height:1px;background:#ebe9e4;"></div>
<div style="left:406px;top:240px;width:1px;height:1px;background:#ebe9e4;"></div>
<div style="left:406px;top:255px;width:1px;height:1px;background:#ebe9e4;"></div>
<div style="left:420px;top:178px;width:64px;height:12px;background:#474747;"></div>
<span style="left:421px;top:179.16px;width:30px;text-align:center;font-size:9.5px;line-height:9.5px;color:#ebe9e4;letter-spacing:-0.1px;">-Inf.</span>
<div style="left:420px;top:191px;width:32px;height:81px;background:#0c0c0c;"></div>
<div style="left:421px;top:192px;width:30px;height:79px;background:linear-gradient(to bottom,#705f5b 0%,#6f5e5e 18%,#6c5870 44%,#6e6a7c 64%,#748085 84%,#788b8a 100%);border-top:1px solid #c4b8b4;border-left:1px solid #c4b8b4;border-right:1px solid rgba(0,0,0,0.35);box-sizing:border-box;"></div>
<span style="left:421px;top:197.87px;width:27px;text-align:right;font-size:9.6px;line-height:9.6px;color:#ebe9e4;letter-spacing:-0.4px;">2</span>
<div style="left:449px;top:201px;width:2px;height:1px;background:#ebe9e4;"></div>
<span style="left:421px;top:215.87px;width:27px;text-align:right;font-size:9.6px;line-height:9.6px;color:#ebe9e4;letter-spacing:-0.4px;">0</span>
<div style="left:449px;top:219px;width:2px;height:1px;background:#ebe9e4;"></div>
<span style="left:421px;top:241.87px;width:27px;text-align:right;font-size:9.6px;line-height:9.6px;color:#ebe9e4;letter-spacing:-0.4px;">-4</span>
<div style="left:449px;top:245px;width:2px;height:1px;background:#ebe9e4;"></div>
<span style="left:421px;top:262.87px;width:27px;text-align:right;font-size:9.6px;line-height:9.6px;color:#ebe9e4;letter-spacing:-0.4px;">-10</span>
<div style="left:449px;top:266px;width:2px;height:1px;background:#ebe9e4;"></div>
<div style="left:450px;top:211px;width:1px;height:1px;background:#ebe9e4;"></div>
<div style="left:450px;top:227px;width:1px;height:1px;background:#ebe9e4;"></div>
<div style="left:450px;top:234px;width:1px;height:1px;background:#ebe9e4;"></div>
<div style="left:450px;top:240px;width:1px;height:1px;background:#ebe9e4;"></div>
<div style="left:450px;top:255px;width:1px;height:1px;background:#ebe9e4;"></div>
<span style="left:453px;top:179.16px;width:30px;text-align:center;font-size:9.5px;line-height:9.5px;color:#ebe9e4;letter-spacing:-0.1px;">-Inf.</span>
<div style="left:452px;top:191px;width:32px;height:81px;background:#0c0c0c;"></div>
<div style="left:453px;top:192px;width:30px;height:79px;background:linear-gradient(to bottom,#705f5b 0%,#6f5e5e 18%,#6c5870 44%,#6e6a7c 64%,#748085 84%,#788b8a 100%);border-top:1px solid #c4b8b4;border-left:1px solid #c4b8b4;border-right:1px solid rgba(0,0,0,0.35);box-sizing:border-box;"></div>
<span style="left:453px;top:197.87px;width:27px;text-align:right;font-size:9.6px;line-height:9.6px;color:#ebe9e4;letter-spacing:-0.4px;">2</span>
<div style="left:481px;top:201px;width:2px;height:1px;background:#ebe9e4;"></div>
<span style="left:453px;top:215.87px;width:27px;text-align:right;font-size:9.6px;line-height:9.6px;color:#ebe9e4;letter-spacing:-0.4px;">0</span>
<div style="left:481px;top:219px;width:2px;height:1px;background:#ebe9e4;"></div>
<span style="left:453px;top:241.87px;width:27px;text-align:right;font-size:9.6px;line-height:9.6px;color:#ebe9e4;letter-spacing:-0.4px;">-4</span>
<div style="left:481px;top:245px;width:2px;height:1px;background:#ebe9e4;"></div>
<span style="left:453px;top:262.87px;width:27px;text-align:right;font-size:9.6px;line-height:9.6px;color:#ebe9e4;letter-spacing:-0.4px;">-10</span>
<div style="left:481px;top:266px;width:2px;height:1px;background:#ebe9e4;"></div>
<div style="left:482px;top:211px;width:1px;height:1px;background:#ebe9e4;"></div>
<div style="left:482px;top:227px;width:1px;height:1px;background:#ebe9e4;"></div>
<div style="left:482px;top:234px;width:1px;height:1px;background:#ebe9e4;"></div>
<div style="left:482px;top:240px;width:1px;height:1px;background:#ebe9e4;"></div>
<div style="left:482px;top:255px;width:1px;height:1px;background:#ebe9e4;"></div>
<div style="left:496px;top:178px;width:64px;height:12px;background:#474747;"></div>
<span style="left:497px;top:179.16px;width:30px;text-align:center;font-size:9.5px;line-height:9.5px;color:#ebe9e4;letter-spacing:-0.1px;">-7,1</span>
<div style="left:496px;top:191px;width:32px;height:81px;background:#0c0c0c;"></div>
<div style="left:497px;top:192px;width:30px;height:79px;background:linear-gradient(to bottom,#705f5b 0%,#6f5e5e 18%,#6c5870 44%,#6e6a7c 64%,#748085 84%,#788b8a 100%);border-top:1px solid #c4b8b4;border-left:1px solid #c4b8b4;border-right:1px solid rgba(0,0,0,0.35);box-sizing:border-box;"></div>
<div style="left:497px;top:259px;width:30px;height:12px;background:#10e8ff;"></div>
<div style="left:497px;top:265px;width:30px;height:1px;background:#70a0a8;"></div>
<span style="left:497px;top:197.87px;width:27px;text-align:right;font-size:9.6px;line-height:9.6px;color:#ebe9e4;letter-spacing:-0.4px;">2</span>
<div style="left:525px;top:201px;width:2px;height:1px;background:#ebe9e4;"></div>
<span style="left:497px;top:215.87px;width:27px;text-align:right;font-size:9.6px;line-height:9.6px;color:#ebe9e4;letter-spacing:-0.4px;">0</span>
<div style="left:525px;top:219px;width:2px;height:1px;background:#ebe9e4;"></div>
<span style="left:497px;top:241.87px;width:27px;text-align:right;font-size:9.6px;line-height:9.6px;color:#ebe9e4;letter-spacing:-0.4px;">-4</span>
<div style="left:525px;top:245px;width:2px;height:1px;background:#ebe9e4;"></div>
<span style="left:497px;top:262.87px;width:27px;text-align:right;font-size:9.6px;line-height:9.6px;color:#111;letter-spacing:-0.4px;">-10</span>
<div style="left:525px;top:266px;width:2px;height:1px;background:#111;"></div>
<div style="left:526px;top:211px;width:1px;height:1px;background:#ebe9e4;"></div>
<div style="left:526px;top:227px;width:1px;height:1px;background:#ebe9e4;"></div>
<div style="left:526px;top:234px;width:1px;height:1px;background:#ebe9e4;"></div>
<div style="left:526px;top:240px;width:1px;height:1px;background:#ebe9e4;"></div>
<div style="left:526px;top:255px;width:1px;height:1px;background:#ebe9e4;"></div>
<span style="left:529px;top:179.16px;width:30px;text-align:center;font-size:9.5px;line-height:9.5px;color:#ebe9e4;letter-spacing:-0.1px;">-6,1</span>
<div style="left:528px;top:191px;width:32px;height:81px;background:#0c0c0c;"></div>
<div style="left:529px;top:192px;width:30px;height:79px;background:linear-gradient(to bottom,#705f5b 0%,#6f5e5e 18%,#6c5870 44%,#6e6a7c 64%,#748085 84%,#788b8a 100%);border-top:1px solid #c4b8b4;border-left:1px solid #c4b8b4;border-right:1px solid rgba(0,0,0,0.35);box-sizing:border-box;"></div>
<div style="left:529px;top:264px;width:30px;height:7px;background:#10e8ff;"></div>
<span style="left:529px;top:197.87px;width:27px;text-align:right;font-size:9.6px;line-height:9.6px;color:#ebe9e4;letter-spacing:-0.4px;">2</span>
<div style="left:557px;top:201px;width:2px;height:1px;background:#ebe9e4;"></div>
<span style="left:529px;top:215.87px;width:27px;text-align:right;font-size:9.6px;line-height:9.6px;color:#ebe9e4;letter-spacing:-0.4px;">0</span>
<div style="left:557px;top:219px;width:2px;height:1px;background:#ebe9e4;"></div>
<span style="left:529px;top:241.87px;width:27px;text-align:right;font-size:9.6px;line-height:9.6px;color:#ebe9e4;letter-spacing:-0.4px;">-4</span>
<div style="left:557px;top:245px;width:2px;height:1px;background:#ebe9e4;"></div>
<span style="left:529px;top:262.87px;width:27px;text-align:right;font-size:9.6px;line-height:9.6px;color:#111;letter-spacing:-0.4px;">-10</span>
<div style="left:557px;top:266px;width:2px;height:1px;background:#111;"></div>
<div style="left:558px;top:211px;width:1px;height:1px;background:#ebe9e4;"></div>
<div style="left:558px;top:227px;width:1px;height:1px;background:#ebe9e4;"></div>
<div style="left:558px;top:234px;width:1px;height:1px;background:#ebe9e4;"></div>
<div style="left:558px;top:240px;width:1px;height:1px;background:#ebe9e4;"></div>
<div style="left:558px;top:255px;width:1px;height:1px;background:#ebe9e4;"></div>
<div style="left:572px;top:178px;width:64px;height:12px;background:#474747;"></div>
<span style="left:573px;top:179.16px;width:30px;text-align:center;font-size:9.5px;line-height:9.5px;color:#ebe9e4;letter-spacing:-0.1px;">-Inf.</span>
<div style="left:572px;top:191px;width:32px;height:81px;background:#0c0c0c;"></div>
<div style="left:573px;top:192px;width:30px;height:79px;background:linear-gradient(to bottom,#705f5b 0%,#6f5e5e 18%,#6c5870 44%,#6e6a7c 64%,#748085 84%,#788b8a 100%);border-top:1px solid #c4b8b4;border-left:1px solid #c4b8b4;border-right:1px solid rgba(0,0,0,0.35);box-sizing:border-box;"></div>
<span style="left:573px;top:197.87px;width:27px;text-align:right;font-size:9.6px;line-height:9.6px;color:#ebe9e4;letter-spacing:-0.4px;">2</span>
<div style="left:601px;top:201px;width:2px;height:1px;background:#ebe9e4;"></div>
<span style="left:573px;top:215.87px;width:27px;text-align:right;font-size:9.6px;line-height:9.6px;color:#ebe9e4;letter-spacing:-0.4px;">0</span>
<div style="left:601px;top:219px;width:2px;height:1px;background:#ebe9e4;"></div>
<span style="left:573px;top:241.87px;width:27px;text-align:right;font-size:9.6px;line-height:9.6px;color:#ebe9e4;letter-spacing:-0.4px;">-4</span>
<div style="left:601px;top:245px;width:2px;height:1px;background:#ebe9e4;"></div>
<span style="left:573px;top:262.87px;width:27px;text-align:right;font-size:9.6px;line-height:9.6px;color:#ebe9e4;letter-spacing:-0.4px;">-10</span>
<div style="left:601px;top:266px;width:2px;height:1px;background:#ebe9e4;"></div>
<div style="left:602px;top:211px;width:1px;height:1px;background:#ebe9e4;"></div>
<div style="left:602px;top:227px;width:1px;height:1px;background:#ebe9e4;"></div>
<div style="left:602px;top:234px;width:1px;height:1px;background:#ebe9e4;"></div>
<div style="left:602px;top:240px;width:1px;height:1px;background:#ebe9e4;"></div>
<div style="left:602px;top:255px;width:1px;height:1px;background:#ebe9e4;"></div>
<span style="left:605px;top:179.16px;width:30px;text-align:center;font-size:9.5px;line-height:9.5px;color:#ebe9e4;letter-spacing:-0.1px;">-Inf.</span>
<div style="left:604px;top:191px;width:32px;height:81px;background:#0c0c0c;"></div>
<div style="left:605px;top:192px;width:30px;height:79px;background:linear-gradient(to bottom,#705f5b 0%,#6f5e5e 18%,#6c5870 44%,#6e6a7c 64%,#748085 84%,#788b8a 100%);border-top:1px solid #c4b8b4;border-left:1px solid #c4b8b4;border-right:1px solid rgba(0,0,0,0.35);box-sizing:border-box;"></div>
<span style="left:605px;top:197.87px;width:27px;text-align:right;font-size:9.6px;line-height:9.6px;color:#ebe9e4;letter-spacing:-0.4px;">2</span>
<div style="left:633px;top:201px;width:2px;height:1px;background:#ebe9e4;"></div>
<span style="left:605px;top:215.87px;width:27px;text-align:right;font-size:9.6px;line-height:9.6px;color:#ebe9e4;letter-spacing:-0.4px;">0</span>
<div style="left:633px;top:219px;width:2px;height:1px;background:#ebe9e4;"></div>
<span style="left:605px;top:241.87px;width:27px;text-align:right;font-size:9.6px;line-height:9.6px;color:#ebe9e4;letter-spacing:-0.4px;">-4</span>
<div style="left:633px;top:245px;width:2px;height:1px;background:#ebe9e4;"></div>
<span style="left:605px;top:262.87px;width:27px;text-align:right;font-size:9.6px;line-height:9.6px;color:#ebe9e4;letter-spacing:-0.4px;">-10</span>
<div style="left:633px;top:266px;width:2px;height:1px;background:#ebe9e4;"></div>
<div style="left:634px;top:211px;width:1px;height:1px;background:#ebe9e4;"></div>
<div style="left:634px;top:227px;width:1px;height:1px;background:#ebe9e4;"></div>
<div style="left:634px;top:234px;width:1px;height:1px;background:#ebe9e4;"></div>
<div style="left:634px;top:240px;width:1px;height:1px;background:#ebe9e4;"></div>
<div style="left:634px;top:255px;width:1px;height:1px;background:#ebe9e4;"></div>
<div style="left:648px;top:178px;width:64px;height:12px;background:#474747;"></div>
<span style="left:649px;top:179.16px;width:30px;text-align:center;font-size:9.5px;line-height:9.5px;color:#ebe9e4;letter-spacing:-0.1px;">-Inf.</span>
<div style="left:648px;top:191px;width:32px;height:81px;background:#0c0c0c;"></div>
<div style="left:649px;top:192px;width:30px;height:79px;background:linear-gradient(to bottom,#705f5b 0%,#6f5e5e 18%,#6c5870 44%,#6e6a7c 64%,#748085 84%,#788b8a 100%);border-top:1px solid #c4b8b4;border-left:1px solid #c4b8b4;border-right:1px solid rgba(0,0,0,0.35);box-sizing:border-box;"></div>
<span style="left:649px;top:197.87px;width:27px;text-align:right;font-size:9.6px;line-height:9.6px;color:#ebe9e4;letter-spacing:-0.4px;">2</span>
<div style="left:677px;top:201px;width:2px;height:1px;background:#ebe9e4;"></div>
<span style="left:649px;top:215.87px;width:27px;text-align:right;font-size:9.6px;line-height:9.6px;color:#ebe9e4;letter-spacing:-0.4px;">0</span>
<div style="left:677px;top:219px;width:2px;height:1px;background:#ebe9e4;"></div>
<span style="left:649px;top:241.87px;width:27px;text-align:right;font-size:9.6px;line-height:9.6px;color:#ebe9e4;letter-spacing:-0.4px;">-4</span>
<div style="left:677px;top:245px;width:2px;height:1px;background:#ebe9e4;"></div>
<span style="left:649px;top:262.87px;width:27px;text-align:right;font-size:9.6px;line-height:9.6px;color:#ebe9e4;letter-spacing:-0.4px;">-10</span>
<div style="left:677px;top:266px;width:2px;height:1px;background:#ebe9e4;"></div>
<div style="left:678px;top:211px;width:1px;height:1px;background:#ebe9e4;"></div>
<div style="left:678px;top:227px;width:1px;height:1px;background:#ebe9e4;"></div>
<div style="left:678px;top:234px;width:1px;height:1px;background:#ebe9e4;"></div>
<div style="left:678px;top:240px;width:1px;height:1px;background:#ebe9e4;"></div>
<div style="left:678px;top:255px;width:1px;height:1px;background:#ebe9e4;"></div>
<span style="left:681px;top:179.16px;width:30px;text-align:center;font-size:9.5px;line-height:9.5px;color:#ebe9e4;letter-spacing:-0.1px;">-Inf.</span>
<div style="left:680px;top:191px;width:32px;height:81px;background:#0c0c0c;"></div>
<div style="left:681px;top:192px;width:30px;height:79px;background:linear-gradient(to bottom,#705f5b 0%,#6f5e5e 18%,#6c5870 44%,#6e6a7c 64%,#748085 84%,#788b8a 100%);border-top:1px solid #c4b8b4;border-left:1px solid #c4b8b4;border-right:1px solid rgba(0,0,0,0.35);box-sizing:border-box;"></div>
<span style="left:681px;top:197.87px;width:27px;text-align:right;font-size:9.6px;line-height:9.6px;color:#ebe9e4;letter-spacing:-0.4px;">2</span>
<div style="left:709px;top:201px;width:2px;height:1px;background:#ebe9e4;"></div>
<span style="left:681px;top:215.87px;width:27px;text-align:right;font-size:9.6px;line-height:9.6px;color:#ebe9e4;letter-spacing:-0.4px;">0</span>
<div style="left:709px;top:219px;width:2px;height:1px;background:#ebe9e4;"></div>
<span style="left:681px;top:241.87px;width:27px;text-align:right;font-size:9.6px;line-height:9.6px;color:#ebe9e4;letter-spacing:-0.4px;">-4</span>
<div style="left:709px;top:245px;width:2px;height:1px;background:#ebe9e4;"></div>
<span style="left:681px;top:262.87px;width:27px;text-align:right;font-size:9.6px;line-height:9.6px;color:#ebe9e4;letter-spacing:-0.4px;">-10</span>
<div style="left:709px;top:266px;width:2px;height:1px;background:#ebe9e4;"></div>
<div style="left:710px;top:211px;width:1px;height:1px;background:#ebe9e4;"></div>
<div style="left:710px;top:227px;width:1px;height:1px;background:#ebe9e4;"></div>
<div style="left:710px;top:234px;width:1px;height:1px;background:#ebe9e4;"></div>
<div style="left:710px;top:240px;width:1px;height:1px;background:#ebe9e4;"></div>
<div style="left:710px;top:255px;width:1px;height:1px;background:#ebe9e4;"></div>
<div style="left:724px;top:178px;width:64px;height:12px;background:#474747;"></div>
<span style="left:725px;top:179.16px;width:30px;text-align:center;font-size:9.5px;line-height:9.5px;color:#ebe9e4;letter-spacing:-0.1px;">6,9</span>
<div style="left:724px;top:191px;width:32px;height:81px;background:#0c0c0c;"></div>
<div style="left:725px;top:192px;width:30px;height:79px;background:linear-gradient(to bottom,#ff2a00 0%,#ff2800 25%,#ff1890 35%,#f020f6 45%,#b050f0 58%,#7890f4 70%,#48b8f8 80%,#10e8ff 91%,#00f0ff 100%);"></div>
<div style="left:725px;top:201px;width:30px;height:1px;background:#888;"></div>
<span style="left:725px;top:197.87px;width:27px;text-align:right;font-size:9.6px;line-height:9.6px;color:#111;letter-spacing:-0.4px;">2</span>
<div style="left:753px;top:201px;width:2px;height:1px;background:#111;"></div>
<span style="left:725px;top:215.87px;width:27px;text-align:right;font-size:9.6px;line-height:9.6px;color:#111;letter-spacing:-0.4px;">0</span>
<div style="left:753px;top:219px;width:2px;height:1px;background:#111;"></div>
<span style="left:725px;top:241.87px;width:27px;text-align:right;font-size:9.6px;line-height:9.6px;color:#111;letter-spacing:-0.4px;">-4</span>
<div style="left:753px;top:245px;width:2px;height:1px;background:#111;"></div>
<span style="left:725px;top:262.87px;width:27px;text-align:right;font-size:9.6px;line-height:9.6px;color:#111;letter-spacing:-0.4px;">-10</span>
<div style="left:753px;top:266px;width:2px;height:1px;background:#111;"></div>
<div style="left:754px;top:211px;width:1px;height:1px;background:#111;"></div>
<div style="left:754px;top:227px;width:1px;height:1px;background:#111;"></div>
<div style="left:754px;top:234px;width:1px;height:1px;background:#111;"></div>
<div style="left:754px;top:240px;width:1px;height:1px;background:#111;"></div>
<div style="left:754px;top:255px;width:1px;height:1px;background:#111;"></div>
<span style="left:757px;top:179.16px;width:30px;text-align:center;font-size:9.5px;line-height:9.5px;color:#ebe9e4;letter-spacing:-0.1px;">7,6</span>
<div style="left:756px;top:191px;width:32px;height:81px;background:#0c0c0c;"></div>
<div style="left:757px;top:192px;width:30px;height:79px;background:linear-gradient(to bottom,#ff2a00 0%,#ff2800 25%,#ff1890 35%,#f020f6 45%,#b050f0 58%,#7890f4 70%,#48b8f8 80%,#10e8ff 91%,#00f0ff 100%);"></div>
<div style="left:757px;top:192px;width:30px;height:8px;background:#6f605c;border-top:1px solid #c0b4b0;border-left:1px solid #c0b4b0;box-sizing:border-box;"></div>
<div style="left:757px;top:207px;width:30px;height:1px;background:#888;"></div>
<span style="left:757px;top:197.87px;width:27px;text-align:right;font-size:9.6px;line-height:9.6px;color:#111;letter-spacing:-0.4px;">2</span>
<div style="left:785px;top:201px;width:2px;height:1px;background:#111;"></div>
<span style="left:757px;top:215.87px;width:27px;text-align:right;font-size:9.6px;line-height:9.6px;color:#111;letter-spacing:-0.4px;">0</span>
<div style="left:785px;top:219px;width:2px;height:1px;background:#111;"></div>
<span style="left:757px;top:241.87px;width:27px;text-align:right;font-size:9.6px;line-height:9.6px;color:#111;letter-spacing:-0.4px;">-4</span>
<div style="left:785px;top:245px;width:2px;height:1px;background:#111;"></div>
<span style="left:757px;top:262.87px;width:27px;text-align:right;font-size:9.6px;line-height:9.6px;color:#111;letter-spacing:-0.4px;">-10</span>
<div style="left:785px;top:266px;width:2px;height:1px;background:#111;"></div>
<div style="left:786px;top:211px;width:1px;height:1px;background:#111;"></div>
<div style="left:786px;top:227px;width:1px;height:1px;background:#111;"></div>
<div style="left:786px;top:234px;width:1px;height:1px;background:#111;"></div>
<div style="left:786px;top:240px;width:1px;height:1px;background:#111;"></div>
<div style="left:786px;top:255px;width:1px;height:1px;background:#111;"></div>
<div style="left:6px;top:277px;width:64px;height:12px;background:#474747;"></div>
<div style="left:6px;top:289px;width:64px;height:126px;background:#121212;"></div>
<span style="left:6px;top:279.16px;width:32px;text-align:center;font-size:9.5px;line-height:9.5px;color:#ebe9e4;letter-spacing:-0.1px;"></span>
<span style="left:6px;top:296.87px;width:28px;text-align:right;font-size:9.6px;line-height:9.6px;color:#ebe9e4;letter-spacing:-0.4px;">9</span>
<div style="left:36px;top:302px;width:2px;height:1px;background:#ebe9e4;"></div>
<span style="left:6px;top:309.87px;width:28px;text-align:right;font-size:9.6px;line-height:9.6px;color:#ebe9e4;letter-spacing:-0.4px;">18</span>
<div style="left:36px;top:315px;width:2px;height:1px;background:#ebe9e4;"></div>
<span style="left:6px;top:321.87px;width:28px;text-align:right;font-size:9.6px;line-height:9.6px;color:#ebe9e4;letter-spacing:-0.4px;">27</span>
<div style="left:36px;top:327px;width:2px;height:1px;background:#ebe9e4;"></div>
<span style="left:6px;top:333.87px;width:28px;text-align:right;font-size:9.6px;line-height:9.6px;color:#ebe9e4;letter-spacing:-0.4px;">36</span>
<div style="left:36px;top:339px;width:2px;height:1px;background:#ebe9e4;"></div>
<span style="left:6px;top:346.87px;width:28px;text-align:right;font-size:9.6px;line-height:9.6px;color:#ebe9e4;letter-spacing:-0.4px;">45</span>
<div style="left:36px;top:352px;width:2px;height:1px;background:#ebe9e4;"></div>
<span style="left:6px;top:358.87px;width:28px;text-align:right;font-size:9.6px;line-height:9.6px;color:#ebe9e4;letter-spacing:-0.4px;">54</span>
<div style="left:36px;top:364px;width:2px;height:1px;background:#ebe9e4;"></div>
<span style="left:6px;top:370.87px;width:28px;text-align:right;font-size:9.6px;line-height:9.6px;color:#ebe9e4;letter-spacing:-0.4px;">63</span>
<div style="left:36px;top:376px;width:2px;height:1px;background:#ebe9e4;"></div>
<span style="left:6px;top:383.87px;width:28px;text-align:right;font-size:9.6px;line-height:9.6px;color:#ebe9e4;letter-spacing:-0.4px;">72</span>
<div style="left:36px;top:389px;width:2px;height:1px;background:#ebe9e4;"></div>
<span style="left:6px;top:395.87px;width:28px;text-align:right;font-size:9.6px;line-height:9.6px;color:#ebe9e4;letter-spacing:-0.4px;">81</span>
<div style="left:36px;top:401px;width:2px;height:1px;background:#ebe9e4;"></div>
<div style="left:37px;top:294px;width:1px;height:1px;background:#ddd;"></div>
<div style="left:37px;top:298px;width:1px;height:1px;background:#ddd;"></div>
<div style="left:37px;top:306px;width:1px;height:1px;background:#ddd;"></div>
<div style="left:37px;top:311px;width:1px;height:1px;background:#ddd;"></div>
<div style="left:37px;top:319px;width:1px;height:1px;background:#ddd;"></div>
<div style="left:37px;top:323px;width:1px;height:1px;background:#ddd;"></div>
<div style="left:37px;top:331px;width:1px;height:1px;background:#ddd;"></div>
<div style="left:37px;top:335px;width:1px;height:1px;background:#ddd;"></div>
<div style="left:37px;top:343px;width:1px;height:1px;background:#ddd;"></div>
<div style="left:37px;top:348px;width:1px;height:1px;background:#ddd;"></div>
<div style="left:37px;top:356px;width:1px;height:1px;background:#ddd;"></div>
<div style="left:37px;top:360px;width:1px;height:1px;background:#ddd;"></div>
<div style="left:37px;top:368px;width:1px;height:1px;background:#ddd;"></div>
<div style="left:37px;top:372px;width:1px;height:1px;background:#ddd;"></div>
<div style="left:37px;top:380px;width:1px;height:1px;background:#ddd;"></div>
<div style="left:37px;top:385px;width:1px;height:1px;background:#ddd;"></div>
<div style="left:37px;top:393px;width:1px;height:1px;background:#ddd;"></div>
<div style="left:37px;top:397px;width:1px;height:1px;background:#ddd;"></div>
<div style="left:37px;top:405px;width:1px;height:1px;background:#ddd;"></div>
<div style="left:37px;top:409px;width:1px;height:1px;background:#ddd;"></div>
<span style="left:38px;top:279.16px;width:32px;text-align:center;font-size:9.5px;line-height:9.5px;color:#ebe9e4;letter-spacing:-0.1px;"></span>
<span style="left:38px;top:296.87px;width:28px;text-align:right;font-size:9.6px;line-height:9.6px;color:#ebe9e4;letter-spacing:-0.4px;">9</span>
<div style="left:68px;top:302px;width:2px;height:1px;background:#ebe9e4;"></div>
<span style="left:38px;top:309.87px;width:28px;text-align:right;font-size:9.6px;line-height:9.6px;color:#ebe9e4;letter-spacing:-0.4px;">18</span>
<div style="left:68px;top:315px;width:2px;height:1px;background:#ebe9e4;"></div>
<span style="left:38px;top:321.87px;width:28px;text-align:right;font-size:9.6px;line-height:9.6px;color:#ebe9e4;letter-spacing:-0.4px;">27</span>
<div style="left:68px;top:327px;width:2px;height:1px;background:#ebe9e4;"></div>
<span style="left:38px;top:333.87px;width:28px;text-align:right;font-size:9.6px;line-height:9.6px;color:#ebe9e4;letter-spacing:-0.4px;">36</span>
<div style="left:68px;top:339px;width:2px;height:1px;background:#ebe9e4;"></div>
<span style="left:38px;top:346.87px;width:28px;text-align:right;font-size:9.6px;line-height:9.6px;color:#ebe9e4;letter-spacing:-0.4px;">45</span>
<div style="left:68px;top:352px;width:2px;height:1px;background:#ebe9e4;"></div>
<span style="left:38px;top:358.87px;width:28px;text-align:right;font-size:9.6px;line-height:9.6px;color:#ebe9e4;letter-spacing:-0.4px;">54</span>
<div style="left:68px;top:364px;width:2px;height:1px;background:#ebe9e4;"></div>
<span style="left:38px;top:370.87px;width:28px;text-align:right;font-size:9.6px;line-height:9.6px;color:#ebe9e4;letter-spacing:-0.4px;">63</span>
<div style="left:68px;top:376px;width:2px;height:1px;background:#ebe9e4;"></div>
<span style="left:38px;top:383.87px;width:28px;text-align:right;font-size:9.6px;line-height:9.6px;color:#ebe9e4;letter-spacing:-0.4px;">72</span>
<div style="left:68px;top:389px;width:2px;height:1px;background:#ebe9e4;"></div>
<span style="left:38px;top:395.87px;width:28px;text-align:right;font-size:9.6px;line-height:9.6px;color:#ebe9e4;letter-spacing:-0.4px;">81</span>
<div style="left:68px;top:401px;width:2px;height:1px;background:#ebe9e4;"></div>
<div style="left:69px;top:294px;width:1px;height:1px;background:#ddd;"></div>
<div style="left:69px;top:298px;width:1px;height:1px;background:#ddd;"></div>
<div style="left:69px;top:306px;width:1px;height:1px;background:#ddd;"></div>
<div style="left:69px;top:311px;width:1px;height:1px;background:#ddd;"></div>
<div style="left:69px;top:319px;width:1px;height:1px;background:#ddd;"></div>
<div style="left:69px;top:323px;width:1px;height:1px;background:#ddd;"></div>
<div style="left:69px;top:331px;width:1px;height:1px;background:#ddd;"></div>
<div style="left:69px;top:335px;width:1px;height:1px;background:#ddd;"></div>
<div style="left:69px;top:343px;width:1px;height:1px;background:#ddd;"></div>
<div style="left:69px;top:348px;width:1px;height:1px;background:#ddd;"></div>
<div style="left:69px;top:356px;width:1px;height:1px;background:#ddd;"></div>
<div style="left:69px;top:360px;width:1px;height:1px;background:#ddd;"></div>
<div style="left:69px;top:368px;width:1px;height:1px;background:#ddd;"></div>
<div style="left:69px;top:372px;width:1px;height:1px;background:#ddd;"></div>
<div style="left:69px;top:380px;width:1px;height:1px;background:#ddd;"></div>
<div style="left:69px;top:385px;width:1px;height:1px;background:#ddd;"></div>
<div style="left:69px;top:393px;width:1px;height:1px;background:#ddd;"></div>
<div style="left:69px;top:397px;width:1px;height:1px;background:#ddd;"></div>
<div style="left:69px;top:405px;width:1px;height:1px;background:#ddd;"></div>
<div style="left:69px;top:409px;width:1px;height:1px;background:#ddd;"></div>
<div style="left:82px;top:277px;width:98px;height:12px;background:#474747;"></div>
<div style="left:82px;top:289px;width:98px;height:126px;background:#121212;"></div>
<span style="left:82px;top:279.16px;width:49px;text-align:center;font-size:9.5px;line-height:9.5px;color:#ebe9e4;letter-spacing:-0.1px;">-13,6</span>
<div style="left:82px;top:336px;width:49px;height:78px;background:#00ff52;"></div>
<div style="left:82px;top:337px;width:49px;height:1px;background:#111;"></div>
<div style="left:82px;top:327px;width:48px;height:1px;background:#00ff52;"></div>
<span style="left:82px;top:296.87px;width:45px;text-align:right;font-size:9.6px;line-height:9.6px;color:#ebe9e4;letter-spacing:-0.4px;">9</span>
<div style="left:129px;top:302px;width:2px;height:1px;background:#ebe9e4;"></div>
<span style="left:82px;top:309.87px;width:45px;text-align:right;font-size:9.6px;line-height:9.6px;color:#ebe9e4;letter-spacing:-0.4px;">18</span>
<div style="left:129px;top:315px;width:2px;height:1px;background:#ebe9e4;"></div>
<span style="left:82px;top:321.87px;width:45px;text-align:right;font-size:9.6px;line-height:9.6px;color:#ebe9e4;letter-spacing:-0.4px;">27</span>
<div style="left:129px;top:327px;width:2px;height:1px;background:#ebe9e4;"></div>
<span style="left:82px;top:333.87px;width:45px;text-align:right;font-size:9.6px;line-height:9.6px;color:#000;letter-spacing:-0.4px;">36</span>
<div style="left:129px;top:339px;width:2px;height:1px;background:#000;"></div>
<span style="left:82px;top:346.87px;width:45px;text-align:right;font-size:9.6px;line-height:9.6px;color:#000;letter-spacing:-0.4px;">45</span>
<div style="left:129px;top:352px;width:2px;height:1px;background:#000;"></div>
<span style="left:82px;top:358.87px;width:45px;text-align:right;font-size:9.6px;line-height:9.6px;color:#000;letter-spacing:-0.4px;">54</span>
<div style="left:129px;top:364px;width:2px;height:1px;background:#000;"></div>
<span style="left:82px;top:370.87px;width:45px;text-align:right;font-size:9.6px;line-height:9.6px;color:#000;letter-spacing:-0.4px;">63</span>
<div style="left:129px;top:376px;width:2px;height:1px;background:#000;"></div>
<span style="left:82px;top:383.87px;width:45px;text-align:right;font-size:9.6px;line-height:9.6px;color:#000;letter-spacing:-0.4px;">72</span>
<div style="left:129px;top:389px;width:2px;height:1px;background:#000;"></div>
<span style="left:82px;top:395.87px;width:45px;text-align:right;font-size:9.6px;line-height:9.6px;color:#000;letter-spacing:-0.4px;">81</span>
<div style="left:129px;top:401px;width:2px;height:1px;background:#000;"></div>
<div style="left:130px;top:294px;width:1px;height:1px;background:#ddd;"></div>
<div style="left:130px;top:298px;width:1px;height:1px;background:#ddd;"></div>
<div style="left:130px;top:306px;width:1px;height:1px;background:#ddd;"></div>
<div style="left:130px;top:311px;width:1px;height:1px;background:#ddd;"></div>
<div style="left:130px;top:319px;width:1px;height:1px;background:#ddd;"></div>
<div style="left:130px;top:323px;width:1px;height:1px;background:#ddd;"></div>
<div style="left:130px;top:331px;width:1px;height:1px;background:#ddd;"></div>
<div style="left:130px;top:335px;width:1px;height:1px;background:#ddd;"></div>
<div style="left:130px;top:343px;width:1px;height:1px;background:#111;"></div>
<div style="left:130px;top:348px;width:1px;height:1px;background:#111;"></div>
<div style="left:130px;top:356px;width:1px;height:1px;background:#111;"></div>
<div style="left:130px;top:360px;width:1px;height:1px;background:#111;"></div>
<div style="left:130px;top:368px;width:1px;height:1px;background:#111;"></div>
<div style="left:130px;top:372px;width:1px;height:1px;background:#111;"></div>
<div style="left:130px;top:380px;width:1px;height:1px;background:#111;"></div>
<div style="left:130px;top:385px;width:1px;height:1px;background:#111;"></div>
<div style="left:130px;top:393px;width:1px;height:1px;background:#111;"></div>
<div style="left:130px;top:397px;width:1px;height:1px;background:#111;"></div>
<div style="left:130px;top:405px;width:1px;height:1px;background:#111;"></div>
<div style="left:130px;top:409px;width:1px;height:1px;background:#111;"></div>
<span style="left:131px;top:279.16px;width:49px;text-align:center;font-size:9.5px;line-height:9.5px;color:#ebe9e4;letter-spacing:-0.1px;">-11,1</span>
<div style="left:131px;top:338px;width:49px;height:76px;background:#00ff52;"></div>
<div style="left:131px;top:324px;width:48px;height:1px;background:#00ff52;"></div>
<span style="left:131px;top:296.87px;width:45px;text-align:right;font-size:9.6px;line-height:9.6px;color:#ebe9e4;letter-spacing:-0.4px;">9</span>
<div style="left:178px;top:302px;width:2px;height:1px;background:#ebe9e4;"></div>
<span style="left:131px;top:309.87px;width:45px;text-align:right;font-size:9.6px;line-height:9.6px;color:#ebe9e4;letter-spacing:-0.4px;">18</span>
<div style="left:178px;top:315px;width:2px;height:1px;background:#ebe9e4;"></div>
<span style="left:131px;top:321.87px;width:45px;text-align:right;font-size:9.6px;line-height:9.6px;color:#ebe9e4;letter-spacing:-0.4px;">27</span>
<div style="left:178px;top:327px;width:2px;height:1px;background:#ebe9e4;"></div>
<span style="left:131px;top:333.87px;width:45px;text-align:right;font-size:9.6px;line-height:9.6px;color:#000;letter-spacing:-0.4px;">36</span>
<div style="left:178px;top:339px;width:2px;height:1px;background:#000;"></div>
<span style="left:131px;top:346.87px;width:45px;text-align:right;font-size:9.6px;line-height:9.6px;color:#000;letter-spacing:-0.4px;">45</span>
<div style="left:178px;top:352px;width:2px;height:1px;background:#000;"></div>
<span style="left:131px;top:358.87px;width:45px;text-align:right;font-size:9.6px;line-height:9.6px;color:#000;letter-spacing:-0.4px;">54</span>
<div style="left:178px;top:364px;width:2px;height:1px;background:#000;"></div>
<span style="left:131px;top:370.87px;width:45px;text-align:right;font-size:9.6px;line-height:9.6px;color:#000;letter-spacing:-0.4px;">63</span>
<div style="left:178px;top:376px;width:2px;height:1px;background:#000;"></div>
<span style="left:131px;top:383.87px;width:45px;text-align:right;font-size:9.6px;line-height:9.6px;color:#000;letter-spacing:-0.4px;">72</span>
<div style="left:178px;top:389px;width:2px;height:1px;background:#000;"></div>
<span style="left:131px;top:395.87px;width:45px;text-align:right;font-size:9.6px;line-height:9.6px;color:#000;letter-spacing:-0.4px;">81</span>
<div style="left:178px;top:401px;width:2px;height:1px;background:#000;"></div>
<div style="left:179px;top:294px;width:1px;height:1px;background:#ddd;"></div>
<div style="left:179px;top:298px;width:1px;height:1px;background:#ddd;"></div>
<div style="left:179px;top:306px;width:1px;height:1px;background:#ddd;"></div>
<div style="left:179px;top:311px;width:1px;height:1px;background:#ddd;"></div>
<div style="left:179px;top:319px;width:1px;height:1px;background:#ddd;"></div>
<div style="left:179px;top:323px;width:1px;height:1px;background:#ddd;"></div>
<div style="left:179px;top:331px;width:1px;height:1px;background:#ddd;"></div>
<div style="left:179px;top:335px;width:1px;height:1px;background:#ddd;"></div>
<div style="left:179px;top:343px;width:1px;height:1px;background:#111;"></div>
<div style="left:179px;top:348px;width:1px;height:1px;background:#111;"></div>
<div style="left:179px;top:356px;width:1px;height:1px;background:#111;"></div>
<div style="left:179px;top:360px;width:1px;height:1px;background:#111;"></div>
<div style="left:179px;top:368px;width:1px;height:1px;background:#111;"></div>
<div style="left:179px;top:372px;width:1px;height:1px;background:#111;"></div>
<div style="left:179px;top:380px;width:1px;height:1px;background:#111;"></div>
<div style="left:179px;top:385px;width:1px;height:1px;background:#111;"></div>
<div style="left:179px;top:393px;width:1px;height:1px;background:#111;"></div>
<div style="left:179px;top:397px;width:1px;height:1px;background:#111;"></div>
<div style="left:179px;top:405px;width:1px;height:1px;background:#111;"></div>
<div style="left:179px;top:409px;width:1px;height:1px;background:#111;"></div>
<div style="left:192px;top:277px;width:64px;height:12px;background:#474747;"></div>
<div style="left:192px;top:289px;width:64px;height:126px;background:#121212;"></div>
<span style="left:192px;top:279.16px;width:32px;text-align:center;font-size:9.5px;line-height:9.5px;color:#ebe9e4;letter-spacing:-0.1px;">-21,8</span>
<div style="left:192px;top:327px;width:32px;height:87px;background:#00ff52;"></div>
<div style="left:192px;top:328px;width:32px;height:1px;background:#111;"></div>
<span style="left:192px;top:296.87px;width:28px;text-align:right;font-size:9.6px;line-height:9.6px;color:#ebe9e4;letter-spacing:-0.4px;">9</span>
<div style="left:222px;top:302px;width:2px;height:1px;background:#ebe9e4;"></div>
<span style="left:192px;top:309.87px;width:28px;text-align:right;font-size:9.6px;line-height:9.6px;color:#ebe9e4;letter-spacing:-0.4px;">18</span>
<div style="left:222px;top:315px;width:2px;height:1px;background:#ebe9e4;"></div>
<span style="left:192px;top:321.87px;width:28px;text-align:right;font-size:9.6px;line-height:9.6px;color:#ebe9e4;letter-spacing:-0.4px;">27</span>
<div style="left:222px;top:327px;width:2px;height:1px;background:#ebe9e4;"></div>
<span style="left:192px;top:333.87px;width:28px;text-align:right;font-size:9.6px;line-height:9.6px;color:#000;letter-spacing:-0.4px;">36</span>
<div style="left:222px;top:339px;width:2px;height:1px;background:#000;"></div>
<span style="left:192px;top:346.87px;width:28px;text-align:right;font-size:9.6px;line-height:9.6px;color:#000;letter-spacing:-0.4px;">45</span>
<div style="left:222px;top:352px;width:2px;height:1px;background:#000;"></div>
<span style="left:192px;top:358.87px;width:28px;text-align:right;font-size:9.6px;line-height:9.6px;color:#000;letter-spacing:-0.4px;">54</span>
<div style="left:222px;top:364px;width:2px;height:1px;background:#000;"></div>
<span style="left:192px;top:370.87px;width:28px;text-align:right;font-size:9.6px;line-height:9.6px;color:#000;letter-spacing:-0.4px;">63</span>
<div style="left:222px;top:376px;width:2px;height:1px;background:#000;"></div>
<span style="left:192px;top:383.87px;width:28px;text-align:right;font-size:9.6px;line-height:9.6px;color:#000;letter-spacing:-0.4px;">72</span>
<div style="left:222px;top:389px;width:2px;height:1px;background:#000;"></div>
<span style="left:192px;top:395.87px;width:28px;text-align:right;font-size:9.6px;line-height:9.6px;color:#000;letter-spacing:-0.4px;">81</span>
<div style="left:222px;top:401px;width:2px;height:1px;background:#000;"></div>
<div style="left:223px;top:294px;width:1px;height:1px;background:#ddd;"></div>
<div style="left:223px;top:298px;width:1px;height:1px;background:#ddd;"></div>
<div style="left:223px;top:306px;width:1px;height:1px;background:#ddd;"></div>
<div style="left:223px;top:311px;width:1px;height:1px;background:#ddd;"></div>
<div style="left:223px;top:319px;width:1px;height:1px;background:#ddd;"></div>
<div style="left:223px;top:323px;width:1px;height:1px;background:#ddd;"></div>
<div style="left:223px;top:331px;width:1px;height:1px;background:#111;"></div>
<div style="left:223px;top:335px;width:1px;height:1px;background:#111;"></div>
<div style="left:223px;top:343px;width:1px;height:1px;background:#111;"></div>
<div style="left:223px;top:348px;width:1px;height:1px;background:#111;"></div>
<div style="left:223px;top:356px;width:1px;height:1px;background:#111;"></div>
<div style="left:223px;top:360px;width:1px;height:1px;background:#111;"></div>
<div style="left:223px;top:368px;width:1px;height:1px;background:#111;"></div>
<div style="left:223px;top:372px;width:1px;height:1px;background:#111;"></div>
<div style="left:223px;top:380px;width:1px;height:1px;background:#111;"></div>
<div style="left:223px;top:385px;width:1px;height:1px;background:#111;"></div>
<div style="left:223px;top:393px;width:1px;height:1px;background:#111;"></div>
<div style="left:223px;top:397px;width:1px;height:1px;background:#111;"></div>
<div style="left:223px;top:405px;width:1px;height:1px;background:#111;"></div>
<div style="left:223px;top:409px;width:1px;height:1px;background:#111;"></div>
<span style="left:224px;top:279.16px;width:32px;text-align:center;font-size:9.5px;line-height:9.5px;color:#ebe9e4;letter-spacing:-0.1px;">-21,8</span>
<div style="left:224px;top:327px;width:32px;height:87px;background:#00ff52;"></div>
<div style="left:224px;top:328px;width:32px;height:1px;background:#111;"></div>
<span style="left:224px;top:296.87px;width:28px;text-align:right;font-size:9.6px;line-height:9.6px;color:#ebe9e4;letter-spacing:-0.4px;">9</span>
<div style="left:254px;top:302px;width:2px;height:1px;background:#ebe9e4;"></div>
<span style="left:224px;top:309.87px;width:28px;text-align:right;font-size:9.6px;line-height:9.6px;color:#ebe9e4;letter-spacing:-0.4px;">18</span>
<div style="left:254px;top:315px;width:2px;height:1px;background:#ebe9e4;"></div>
<span style="left:224px;top:321.87px;width:28px;text-align:right;font-size:9.6px;line-height:9.6px;color:#ebe9e4;letter-spacing:-0.4px;">27</span>
<div style="left:254px;top:327px;width:2px;height:1px;background:#ebe9e4;"></div>
<span style="left:224px;top:333.87px;width:28px;text-align:right;font-size:9.6px;line-height:9.6px;color:#000;letter-spacing:-0.4px;">36</span>
<div style="left:254px;top:339px;width:2px;height:1px;background:#000;"></div>
<span style="left:224px;top:346.87px;width:28px;text-align:right;font-size:9.6px;line-height:9.6px;color:#000;letter-spacing:-0.4px;">45</span>
<div style="left:254px;top:352px;width:2px;height:1px;background:#000;"></div>
<span style="left:224px;top:358.87px;width:28px;text-align:right;font-size:9.6px;line-height:9.6px;color:#000;letter-spacing:-0.4px;">54</span>
<div style="left:254px;top:364px;width:2px;height:1px;background:#000;"></div>
<span style="left:224px;top:370.87px;width:28px;text-align:right;font-size:9.6px;line-height:9.6px;color:#000;letter-spacing:-0.4px;">63</span>
<div style="left:254px;top:376px;width:2px;height:1px;background:#000;"></div>
<span style="left:224px;top:383.87px;width:28px;text-align:right;font-size:9.6px;line-height:9.6px;color:#000;letter-spacing:-0.4px;">72</span>
<div style="left:254px;top:389px;width:2px;height:1px;background:#000;"></div>
<span style="left:224px;top:395.87px;width:28px;text-align:right;font-size:9.6px;line-height:9.6px;color:#000;letter-spacing:-0.4px;">81</span>
<div style="left:254px;top:401px;width:2px;height:1px;background:#000;"></div>
<div style="left:255px;top:294px;width:1px;height:1px;background:#ddd;"></div>
<div style="left:255px;top:298px;width:1px;height:1px;background:#ddd;"></div>
<div style="left:255px;top:306px;width:1px;height:1px;background:#ddd;"></div>
<div style="left:255px;top:311px;width:1px;height:1px;background:#ddd;"></div>
<div style="left:255px;top:319px;width:1px;height:1px;background:#ddd;"></div>
<div style="left:255px;top:323px;width:1px;height:1px;background:#ddd;"></div>
<div style="left:255px;top:331px;width:1px;height:1px;background:#111;"></div>
<div style="left:255px;top:335px;width:1px;height:1px;background:#111;"></div>
<div style="left:255px;top:343px;width:1px;height:1px;background:#111;"></div>
<div style="left:255px;top:348px;width:1px;height:1px;background:#111;"></div>
<div style="left:255px;top:356px;width:1px;height:1px;background:#111;"></div>
<div style="left:255px;top:360px;width:1px;height:1px;background:#111;"></div>
<div style="left:255px;top:368px;width:1px;height:1px;background:#111;"></div>
<div style="left:255px;top:372px;width:1px;height:1px;background:#111;"></div>
<div style="left:255px;top:380px;width:1px;height:1px;background:#111;"></div>
<div style="left:255px;top:385px;width:1px;height:1px;background:#111;"></div>
<div style="left:255px;top:393px;width:1px;height:1px;background:#111;"></div>
<div style="left:255px;top:397px;width:1px;height:1px;background:#111;"></div>
<div style="left:255px;top:405px;width:1px;height:1px;background:#111;"></div>
<div style="left:255px;top:409px;width:1px;height:1px;background:#111;"></div>
<div style="left:268px;top:277px;width:64px;height:12px;background:#474747;"></div>
<div style="left:268px;top:289px;width:64px;height:126px;background:#121212;"></div>
<span style="left:268px;top:279.16px;width:32px;text-align:center;font-size:9.5px;line-height:9.5px;color:#ebe9e4;letter-spacing:-0.1px;">-77,3</span>
<div style="left:268px;top:397px;width:32px;height:17px;background:#00ff52;"></div>
<div style="left:268px;top:401px;width:32px;height:1px;background:#111;"></div>
<span style="left:268px;top:296.87px;width:28px;text-align:right;font-size:9.6px;line-height:9.6px;color:#ebe9e4;letter-spacing:-0.4px;">9</span>
<div style="left:298px;top:302px;width:2px;height:1px;background:#ebe9e4;"></div>
<span style="left:268px;top:309.87px;width:28px;text-align:right;font-size:9.6px;line-height:9.6px;color:#ebe9e4;letter-spacing:-0.4px;">18</span>
<div style="left:298px;top:315px;width:2px;height:1px;background:#ebe9e4;"></div>
<span style="left:268px;top:321.87px;width:28px;text-align:right;font-size:9.6px;line-height:9.6px;color:#ebe9e4;letter-spacing:-0.4px;">27</span>
<div style="left:298px;top:327px;width:2px;height:1px;background:#ebe9e4;"></div>
<span style="left:268px;top:333.87px;width:28px;text-align:right;font-size:9.6px;line-height:9.6px;color:#ebe9e4;letter-spacing:-0.4px;">36</span>
<div style="left:298px;top:339px;width:2px;height:1px;background:#ebe9e4;"></div>
<span style="left:268px;top:346.87px;width:28px;text-align:right;font-size:9.6px;line-height:9.6px;color:#ebe9e4;letter-spacing:-0.4px;">45</span>
<div style="left:298px;top:352px;width:2px;height:1px;background:#ebe9e4;"></div>
<span style="left:268px;top:358.87px;width:28px;text-align:right;font-size:9.6px;line-height:9.6px;color:#ebe9e4;letter-spacing:-0.4px;">54</span>
<div style="left:298px;top:364px;width:2px;height:1px;background:#ebe9e4;"></div>
<span style="left:268px;top:370.87px;width:28px;text-align:right;font-size:9.6px;line-height:9.6px;color:#ebe9e4;letter-spacing:-0.4px;">63</span>
<div style="left:298px;top:376px;width:2px;height:1px;background:#ebe9e4;"></div>
<span style="left:268px;top:383.87px;width:28px;text-align:right;font-size:9.6px;line-height:9.6px;color:#ebe9e4;letter-spacing:-0.4px;">72</span>
<div style="left:298px;top:389px;width:2px;height:1px;background:#ebe9e4;"></div>
<span style="left:268px;top:395.87px;width:28px;text-align:right;font-size:9.6px;line-height:9.6px;color:#000;letter-spacing:-0.4px;">81</span>
<div style="left:298px;top:401px;width:2px;height:1px;background:#000;"></div>
<div style="left:299px;top:294px;width:1px;height:1px;background:#ddd;"></div>
<div style="left:299px;top:298px;width:1px;height:1px;background:#ddd;"></div>
<div style="left:299px;top:306px;width:1px;height:1px;background:#ddd;"></div>
<div style="left:299px;top:311px;width:1px;height:1px;background:#ddd;"></div>
<div style="left:299px;top:319px;width:1px;height:1px;background:#ddd;"></div>
<div style="left:299px;top:323px;width:1px;height:1px;background:#ddd;"></div>
<div style="left:299px;top:331px;width:1px;height:1px;background:#ddd;"></div>
<div style="left:299px;top:335px;width:1px;height:1px;background:#ddd;"></div>
<div style="left:299px;top:343px;width:1px;height:1px;background:#ddd;"></div>
<div style="left:299px;top:348px;width:1px;height:1px;background:#ddd;"></div>
<div style="left:299px;top:356px;width:1px;height:1px;background:#ddd;"></div>
<div style="left:299px;top:360px;width:1px;height:1px;background:#ddd;"></div>
<div style="left:299px;top:368px;width:1px;height:1px;background:#ddd;"></div>
<div style="left:299px;top:372px;width:1px;height:1px;background:#ddd;"></div>
<div style="left:299px;top:380px;width:1px;height:1px;background:#ddd;"></div>
<div style="left:299px;top:385px;width:1px;height:1px;background:#ddd;"></div>
<div style="left:299px;top:393px;width:1px;height:1px;background:#ddd;"></div>
<div style="left:299px;top:397px;width:1px;height:1px;background:#111;"></div>
<div style="left:299px;top:405px;width:1px;height:1px;background:#111;"></div>
<div style="left:299px;top:409px;width:1px;height:1px;background:#111;"></div>
<span style="left:300px;top:279.16px;width:32px;text-align:center;font-size:9.5px;line-height:9.5px;color:#ebe9e4;letter-spacing:-0.1px;">-77,3</span>
<div style="left:300px;top:397px;width:32px;height:17px;background:#00ff52;"></div>
<div style="left:300px;top:401px;width:32px;height:1px;background:#111;"></div>
<span style="left:300px;top:296.87px;width:28px;text-align:right;font-size:9.6px;line-height:9.6px;color:#ebe9e4;letter-spacing:-0.4px;">9</span>
<div style="left:330px;top:302px;width:2px;height:1px;background:#ebe9e4;"></div>
<span style="left:300px;top:309.87px;width:28px;text-align:right;font-size:9.6px;line-height:9.6px;color:#ebe9e4;letter-spacing:-0.4px;">18</span>
<div style="left:330px;top:315px;width:2px;height:1px;background:#ebe9e4;"></div>
<span style="left:300px;top:321.87px;width:28px;text-align:right;font-size:9.6px;line-height:9.6px;color:#ebe9e4;letter-spacing:-0.4px;">27</span>
<div style="left:330px;top:327px;width:2px;height:1px;background:#ebe9e4;"></div>
<span style="left:300px;top:333.87px;width:28px;text-align:right;font-size:9.6px;line-height:9.6px;color:#ebe9e4;letter-spacing:-0.4px;">36</span>
<div style="left:330px;top:339px;width:2px;height:1px;background:#ebe9e4;"></div>
<span style="left:300px;top:346.87px;width:28px;text-align:right;font-size:9.6px;line-height:9.6px;color:#ebe9e4;letter-spacing:-0.4px;">45</span>
<div style="left:330px;top:352px;width:2px;height:1px;background:#ebe9e4;"></div>
<span style="left:300px;top:358.87px;width:28px;text-align:right;font-size:9.6px;line-height:9.6px;color:#ebe9e4;letter-spacing:-0.4px;">54</span>
<div style="left:330px;top:364px;width:2px;height:1px;background:#ebe9e4;"></div>
<span style="left:300px;top:370.87px;width:28px;text-align:right;font-size:9.6px;line-height:9.6px;color:#ebe9e4;letter-spacing:-0.4px;">63</span>
<div style="left:330px;top:376px;width:2px;height:1px;background:#ebe9e4;"></div>
<span style="left:300px;top:383.87px;width:28px;text-align:right;font-size:9.6px;line-height:9.6px;color:#ebe9e4;letter-spacing:-0.4px;">72</span>
<div style="left:330px;top:389px;width:2px;height:1px;background:#ebe9e4;"></div>
<span style="left:300px;top:395.87px;width:28px;text-align:right;font-size:9.6px;line-height:9.6px;color:#000;letter-spacing:-0.4px;">81</span>
<div style="left:330px;top:401px;width:2px;height:1px;background:#000;"></div>
<div style="left:331px;top:294px;width:1px;height:1px;background:#ddd;"></div>
<div style="left:331px;top:298px;width:1px;height:1px;background:#ddd;"></div>
<div style="left:331px;top:306px;width:1px;height:1px;background:#ddd;"></div>
<div style="left:331px;top:311px;width:1px;height:1px;background:#ddd;"></div>
<div style="left:331px;top:319px;width:1px;height:1px;background:#ddd;"></div>
<div style="left:331px;top:323px;width:1px;height:1px;background:#ddd;"></div>
<div style="left:331px;top:331px;width:1px;height:1px;background:#ddd;"></div>
<div style="left:331px;top:335px;width:1px;height:1px;background:#ddd;"></div>
<div style="left:331px;top:343px;width:1px;height:1px;background:#ddd;"></div>
<div style="left:331px;top:348px;width:1px;height:1px;background:#ddd;"></div>
<div style="left:331px;top:356px;width:1px;height:1px;background:#ddd;"></div>
<div style="left:331px;top:360px;width:1px;height:1px;background:#ddd;"></div>
<div style="left:331px;top:368px;width:1px;height:1px;background:#ddd;"></div>
<div style="left:331px;top:372px;width:1px;height:1px;background:#ddd;"></div>
<div style="left:331px;top:380px;width:1px;height:1px;background:#ddd;"></div>
<div style="left:331px;top:385px;width:1px;height:1px;background:#ddd;"></div>
<div style="left:331px;top:393px;width:1px;height:1px;background:#ddd;"></div>
<div style="left:331px;top:397px;width:1px;height:1px;background:#111;"></div>
<div style="left:331px;top:405px;width:1px;height:1px;background:#111;"></div>
<div style="left:331px;top:409px;width:1px;height:1px;background:#111;"></div>
<div style="left:344px;top:277px;width:64px;height:12px;background:#474747;"></div>
<div style="left:344px;top:289px;width:64px;height:126px;background:#121212;"></div>
<span style="left:344px;top:279.16px;width:32px;text-align:center;font-size:9.5px;line-height:9.5px;color:#ebe9e4;letter-spacing:-0.1px;">-25,1</span>
<div style="left:344px;top:342px;width:32px;height:72px;background:#00ff52;"></div>
<div style="left:344px;top:333px;width:31px;height:1px;background:#00ff52;"></div>
<span style="left:344px;top:296.87px;width:28px;text-align:right;font-size:9.6px;line-height:9.6px;color:#ebe9e4;letter-spacing:-0.4px;">9</span>
<div style="left:374px;top:302px;width:2px;height:1px;background:#ebe9e4;"></div>
<span style="left:344px;top:309.87px;width:28px;text-align:right;font-size:9.6px;line-height:9.6px;color:#ebe9e4;letter-spacing:-0.4px;">18</span>
<div style="left:374px;top:315px;width:2px;height:1px;background:#ebe9e4;"></div>
<span style="left:344px;top:321.87px;width:28px;text-align:right;font-size:9.6px;line-height:9.6px;color:#ebe9e4;letter-spacing:-0.4px;">27</span>
<div style="left:374px;top:327px;width:2px;height:1px;background:#ebe9e4;"></div>
<span style="left:344px;top:333.87px;width:28px;text-align:right;font-size:9.6px;line-height:9.6px;color:#ebe9e4;letter-spacing:-0.4px;">36</span>
<div style="left:374px;top:339px;width:2px;height:1px;background:#ebe9e4;"></div>
<span style="left:344px;top:346.87px;width:28px;text-align:right;font-size:9.6px;line-height:9.6px;color:#000;letter-spacing:-0.4px;">45</span>
<div style="left:374px;top:352px;width:2px;height:1px;background:#000;"></div>
<span style="left:344px;top:358.87px;width:28px;text-align:right;font-size:9.6px;line-height:9.6px;color:#000;letter-spacing:-0.4px;">54</span>
<div style="left:374px;top:364px;width:2px;height:1px;background:#000;"></div>
<span style="left:344px;top:370.87px;width:28px;text-align:right;font-size:9.6px;line-height:9.6px;color:#000;letter-spacing:-0.4px;">63</span>
<div style="left:374px;top:376px;width:2px;height:1px;background:#000;"></div>
<span style="left:344px;top:383.87px;width:28px;text-align:right;font-size:9.6px;line-height:9.6px;color:#000;letter-spacing:-0.4px;">72</span>
<div style="left:374px;top:389px;width:2px;height:1px;background:#000;"></div>
<span style="left:344px;top:395.87px;width:28px;text-align:right;font-size:9.6px;line-height:9.6px;color:#000;letter-spacing:-0.4px;">81</span>
<div style="left:374px;top:401px;width:2px;height:1px;background:#000;"></div>
<div style="left:375px;top:294px;width:1px;height:1px;background:#ddd;"></div>
<div style="left:375px;top:298px;width:1px;height:1px;background:#ddd;"></div>
<div style="left:375px;top:306px;width:1px;height:1px;background:#ddd;"></div>
<div style="left:375px;top:311px;width:1px;height:1px;background:#ddd;"></div>
<div style="left:375px;top:319px;width:1px;height:1px;background:#ddd;"></div>
<div style="left:375px;top:323px;width:1px;height:1px;background:#ddd;"></div>
<div style="left:375px;top:331px;width:1px;height:1px;background:#ddd;"></div>
<div style="left:375px;top:335px;width:1px;height:1px;background:#ddd;"></div>
<div style="left:375px;top:343px;width:1px;height:1px;background:#111;"></div>
<div style="left:375px;top:348px;width:1px;height:1px;background:#111;"></div>
<div style="left:375px;top:356px;width:1px;height:1px;background:#111;"></div>
<div style="left:375px;top:360px;width:1px;height:1px;background:#111;"></div>
<div style="left:375px;top:368px;width:1px;height:1px;background:#111;"></div>
<div style="left:375px;top:372px;width:1px;height:1px;background:#111;"></div>
<div style="left:375px;top:380px;width:1px;height:1px;background:#111;"></div>
<div style="left:375px;top:385px;width:1px;height:1px;background:#111;"></div>
<div style="left:375px;top:393px;width:1px;height:1px;background:#111;"></div>
<div style="left:375px;top:397px;width:1px;height:1px;background:#111;"></div>
<div style="left:375px;top:405px;width:1px;height:1px;background:#111;"></div>
<div style="left:375px;top:409px;width:1px;height:1px;background:#111;"></div>
<span style="left:376px;top:279.16px;width:32px;text-align:center;font-size:9.5px;line-height:9.5px;color:#ebe9e4;letter-spacing:-0.1px;">-24,3</span>
<div style="left:376px;top:348px;width:32px;height:66px;background:#00ff52;"></div>
<div style="left:376px;top:333px;width:31px;height:1px;background:#00ff52;"></div>
<span style="left:376px;top:296.87px;width:28px;text-align:right;font-size:9.6px;line-height:9.6px;color:#ebe9e4;letter-spacing:-0.4px;">9</span>
<div style="left:406px;top:302px;width:2px;height:1px;background:#ebe9e4;"></div>
<span style="left:376px;top:309.87px;width:28px;text-align:right;font-size:9.6px;line-height:9.6px;color:#ebe9e4;letter-spacing:-0.4px;">18</span>
<div style="left:406px;top:315px;width:2px;height:1px;background:#ebe9e4;"></div>
<span style="left:376px;top:321.87px;width:28px;text-align:right;font-size:9.6px;line-height:9.6px;color:#ebe9e4;letter-spacing:-0.4px;">27</span>
<div style="left:406px;top:327px;width:2px;height:1px;background:#ebe9e4;"></div>
<span style="left:376px;top:333.87px;width:28px;text-align:right;font-size:9.6px;line-height:9.6px;color:#ebe9e4;letter-spacing:-0.4px;">36</span>
<div style="left:406px;top:339px;width:2px;height:1px;background:#ebe9e4;"></div>
<span style="left:376px;top:346.87px;width:28px;text-align:right;font-size:9.6px;line-height:9.6px;color:#000;letter-spacing:-0.4px;">45</span>
<div style="left:406px;top:352px;width:2px;height:1px;background:#000;"></div>
<span style="left:376px;top:358.87px;width:28px;text-align:right;font-size:9.6px;line-height:9.6px;color:#000;letter-spacing:-0.4px;">54</span>
<div style="left:406px;top:364px;width:2px;height:1px;background:#000;"></div>
<span style="left:376px;top:370.87px;width:28px;text-align:right;font-size:9.6px;line-height:9.6px;color:#000;letter-spacing:-0.4px;">63</span>
<div style="left:406px;top:376px;width:2px;height:1px;background:#000;"></div>
<span style="left:376px;top:383.87px;width:28px;text-align:right;font-size:9.6px;line-height:9.6px;color:#000;letter-spacing:-0.4px;">72</span>
<div style="left:406px;top:389px;width:2px;height:1px;background:#000;"></div>
<span style="left:376px;top:395.87px;width:28px;text-align:right;font-size:9.6px;line-height:9.6px;color:#000;letter-spacing:-0.4px;">81</span>
<div style="left:406px;top:401px;width:2px;height:1px;background:#000;"></div>
<div style="left:407px;top:294px;width:1px;height:1px;background:#ddd;"></div>
<div style="left:407px;top:298px;width:1px;height:1px;background:#ddd;"></div>
<div style="left:407px;top:306px;width:1px;height:1px;background:#ddd;"></div>
<div style="left:407px;top:311px;width:1px;height:1px;background:#ddd;"></div>
<div style="left:407px;top:319px;width:1px;height:1px;background:#ddd;"></div>
<div style="left:407px;top:323px;width:1px;height:1px;background:#ddd;"></div>
<div style="left:407px;top:331px;width:1px;height:1px;background:#ddd;"></div>
<div style="left:407px;top:335px;width:1px;height:1px;background:#ddd;"></div>
<div style="left:407px;top:343px;width:1px;height:1px;background:#ddd;"></div>
<div style="left:407px;top:348px;width:1px;height:1px;background:#111;"></div>
<div style="left:407px;top:356px;width:1px;height:1px;background:#111;"></div>
<div style="left:407px;top:360px;width:1px;height:1px;background:#111;"></div>
<div style="left:407px;top:368px;width:1px;height:1px;background:#111;"></div>
<div style="left:407px;top:372px;width:1px;height:1px;background:#111;"></div>
<div style="left:407px;top:380px;width:1px;height:1px;background:#111;"></div>
<div style="left:407px;top:385px;width:1px;height:1px;background:#111;"></div>
<div style="left:407px;top:393px;width:1px;height:1px;background:#111;"></div>
<div style="left:407px;top:397px;width:1px;height:1px;background:#111;"></div>
<div style="left:407px;top:405px;width:1px;height:1px;background:#111;"></div>
<div style="left:407px;top:409px;width:1px;height:1px;background:#111;"></div>
<div style="left:420px;top:277px;width:64px;height:12px;background:#474747;"></div>
<div style="left:420px;top:289px;width:64px;height:126px;background:#121212;"></div>
<span style="left:420px;top:279.16px;width:32px;text-align:center;font-size:9.5px;line-height:9.5px;color:#ebe9e4;letter-spacing:-0.1px;"></span>
<span style="left:420px;top:296.87px;width:28px;text-align:right;font-size:9.6px;line-height:9.6px;color:#ebe9e4;letter-spacing:-0.4px;">9</span>
<div style="left:450px;top:302px;width:2px;height:1px;background:#ebe9e4;"></div>
<span style="left:420px;top:309.87px;width:28px;text-align:right;font-size:9.6px;line-height:9.6px;color:#ebe9e4;letter-spacing:-0.4px;">18</span>
<div style="left:450px;top:315px;width:2px;height:1px;background:#ebe9e4;"></div>
<span style="left:420px;top:321.87px;width:28px;text-align:right;font-size:9.6px;line-height:9.6px;color:#ebe9e4;letter-spacing:-0.4px;">27</span>
<div style="left:450px;top:327px;width:2px;height:1px;background:#ebe9e4;"></div>
<span style="left:420px;top:333.87px;width:28px;text-align:right;font-size:9.6px;line-height:9.6px;color:#ebe9e4;letter-spacing:-0.4px;">36</span>
<div style="left:450px;top:339px;width:2px;height:1px;background:#ebe9e4;"></div>
<span style="left:420px;top:346.87px;width:28px;text-align:right;font-size:9.6px;line-height:9.6px;color:#ebe9e4;letter-spacing:-0.4px;">45</span>
<div style="left:450px;top:352px;width:2px;height:1px;background:#ebe9e4;"></div>
<span style="left:420px;top:358.87px;width:28px;text-align:right;font-size:9.6px;line-height:9.6px;color:#ebe9e4;letter-spacing:-0.4px;">54</span>
<div style="left:450px;top:364px;width:2px;height:1px;background:#ebe9e4;"></div>
<span style="left:420px;top:370.87px;width:28px;text-align:right;font-size:9.6px;line-height:9.6px;color:#ebe9e4;letter-spacing:-0.4px;">63</span>
<div style="left:450px;top:376px;width:2px;height:1px;background:#ebe9e4;"></div>
<span style="left:420px;top:383.87px;width:28px;text-align:right;font-size:9.6px;line-height:9.6px;color:#ebe9e4;letter-spacing:-0.4px;">72</span>
<div style="left:450px;top:389px;width:2px;height:1px;background:#ebe9e4;"></div>
<span style="left:420px;top:395.87px;width:28px;text-align:right;font-size:9.6px;line-height:9.6px;color:#ebe9e4;letter-spacing:-0.4px;">81</span>
<div style="left:450px;top:401px;width:2px;height:1px;background:#ebe9e4;"></div>
<div style="left:451px;top:294px;width:1px;height:1px;background:#ddd;"></div>
<div style="left:451px;top:298px;width:1px;height:1px;background:#ddd;"></div>
<div style="left:451px;top:306px;width:1px;height:1px;background:#ddd;"></div>
<div style="left:451px;top:311px;width:1px;height:1px;background:#ddd;"></div>
<div style="left:451px;top:319px;width:1px;height:1px;background:#ddd;"></div>
<div style="left:451px;top:323px;width:1px;height:1px;background:#ddd;"></div>
<div style="left:451px;top:331px;width:1px;height:1px;background:#ddd;"></div>
<div style="left:451px;top:335px;width:1px;height:1px;background:#ddd;"></div>
<div style="left:451px;top:343px;width:1px;height:1px;background:#ddd;"></div>
<div style="left:451px;top:348px;width:1px;height:1px;background:#ddd;"></div>
<div style="left:451px;top:356px;width:1px;height:1px;background:#ddd;"></div>
<div style="left:451px;top:360px;width:1px;height:1px;background:#ddd;"></div>
<div style="left:451px;top:368px;width:1px;height:1px;background:#ddd;"></div>
<div style="left:451px;top:372px;width:1px;height:1px;background:#ddd;"></div>
<div style="left:451px;top:380px;width:1px;height:1px;background:#ddd;"></div>
<div style="left:451px;top:385px;width:1px;height:1px;background:#ddd;"></div>
<div style="left:451px;top:393px;width:1px;height:1px;background:#ddd;"></div>
<div style="left:451px;top:397px;width:1px;height:1px;background:#ddd;"></div>
<div style="left:451px;top:405px;width:1px;height:1px;background:#ddd;"></div>
<div style="left:451px;top:409px;width:1px;height:1px;background:#ddd;"></div>
<span style="left:452px;top:279.16px;width:32px;text-align:center;font-size:9.5px;line-height:9.5px;color:#ebe9e4;letter-spacing:-0.1px;"></span>
<span style="left:452px;top:296.87px;width:28px;text-align:right;font-size:9.6px;line-height:9.6px;color:#ebe9e4;letter-spacing:-0.4px;">9</span>
<div style="left:482px;top:302px;width:2px;height:1px;background:#ebe9e4;"></div>
<span style="left:452px;top:309.87px;width:28px;text-align:right;font-size:9.6px;line-height:9.6px;color:#ebe9e4;letter-spacing:-0.4px;">18</span>
<div style="left:482px;top:315px;width:2px;height:1px;background:#ebe9e4;"></div>
<span style="left:452px;top:321.87px;width:28px;text-align:right;font-size:9.6px;line-height:9.6px;color:#ebe9e4;letter-spacing:-0.4px;">27</span>
<div style="left:482px;top:327px;width:2px;height:1px;background:#ebe9e4;"></div>
<span style="left:452px;top:333.87px;width:28px;text-align:right;font-size:9.6px;line-height:9.6px;color:#ebe9e4;letter-spacing:-0.4px;">36</span>
<div style="left:482px;top:339px;width:2px;height:1px;background:#ebe9e4;"></div>
<span style="left:452px;top:346.87px;width:28px;text-align:right;font-size:9.6px;line-height:9.6px;color:#ebe9e4;letter-spacing:-0.4px;">45</span>
<div style="left:482px;top:352px;width:2px;height:1px;background:#ebe9e4;"></div>
<span style="left:452px;top:358.87px;width:28px;text-align:right;font-size:9.6px;line-height:9.6px;color:#ebe9e4;letter-spacing:-0.4px;">54</span>
<div style="left:482px;top:364px;width:2px;height:1px;background:#ebe9e4;"></div>
<span style="left:452px;top:370.87px;width:28px;text-align:right;font-size:9.6px;line-height:9.6px;color:#ebe9e4;letter-spacing:-0.4px;">63</span>
<div style="left:482px;top:376px;width:2px;height:1px;background:#ebe9e4;"></div>
<span style="left:452px;top:383.87px;width:28px;text-align:right;font-size:9.6px;line-height:9.6px;color:#ebe9e4;letter-spacing:-0.4px;">72</span>
<div style="left:482px;top:389px;width:2px;height:1px;background:#ebe9e4;"></div>
<span style="left:452px;top:395.87px;width:28px;text-align:right;font-size:9.6px;line-height:9.6px;color:#ebe9e4;letter-spacing:-0.4px;">81</span>
<div style="left:482px;top:401px;width:2px;height:1px;background:#ebe9e4;"></div>
<div style="left:483px;top:294px;width:1px;height:1px;background:#ddd;"></div>
<div style="left:483px;top:298px;width:1px;height:1px;background:#ddd;"></div>
<div style="left:483px;top:306px;width:1px;height:1px;background:#ddd;"></div>
<div style="left:483px;top:311px;width:1px;height:1px;background:#ddd;"></div>
<div style="left:483px;top:319px;width:1px;height:1px;background:#ddd;"></div>
<div style="left:483px;top:323px;width:1px;height:1px;background:#ddd;"></div>
<div style="left:483px;top:331px;width:1px;height:1px;background:#ddd;"></div>
<div style="left:483px;top:335px;width:1px;height:1px;background:#ddd;"></div>
<div style="left:483px;top:343px;width:1px;height:1px;background:#ddd;"></div>
<div style="left:483px;top:348px;width:1px;height:1px;background:#ddd;"></div>
<div style="left:483px;top:356px;width:1px;height:1px;background:#ddd;"></div>
<div style="left:483px;top:360px;width:1px;height:1px;background:#ddd;"></div>
<div style="left:483px;top:368px;width:1px;height:1px;background:#ddd;"></div>
<div style="left:483px;top:372px;width:1px;height:1px;background:#ddd;"></div>
<div style="left:483px;top:380px;width:1px;height:1px;background:#ddd;"></div>
<div style="left:483px;top:385px;width:1px;height:1px;background:#ddd;"></div>
<div style="left:483px;top:393px;width:1px;height:1px;background:#ddd;"></div>
<div style="left:483px;top:397px;width:1px;height:1px;background:#ddd;"></div>
<div style="left:483px;top:405px;width:1px;height:1px;background:#ddd;"></div>
<div style="left:483px;top:409px;width:1px;height:1px;background:#ddd;"></div>
<div style="left:496px;top:277px;width:64px;height:12px;background:#474747;"></div>
<div style="left:496px;top:289px;width:64px;height:126px;background:#121212;"></div>
<span style="left:496px;top:279.16px;width:32px;text-align:center;font-size:9.5px;line-height:9.5px;color:#ebe9e4;letter-spacing:-0.1px;">-16,0</span>
<div style="left:496px;top:312px;width:32px;height:102px;background:#00ff52;"></div>
<div style="left:496px;top:316px;width:32px;height:1px;background:#111;"></div>
<span style="left:496px;top:296.87px;width:28px;text-align:right;font-size:9.6px;line-height:9.6px;color:#ebe9e4;letter-spacing:-0.4px;">9</span>
<div style="left:526px;top:302px;width:2px;height:1px;background:#ebe9e4;"></div>
<span style="left:496px;top:309.87px;width:28px;text-align:right;font-size:9.6px;line-height:9.6px;color:#000;letter-spacing:-0.4px;">18</span>
<div style="left:526px;top:315px;width:2px;height:1px;background:#000;"></div>
<span style="left:496px;top:321.87px;width:28px;text-align:right;font-size:9.6px;line-height:9.6px;color:#000;letter-spacing:-0.4px;">27</span>
<div style="left:526px;top:327px;width:2px;height:1px;background:#000;"></div>
<span style="left:496px;top:333.87px;width:28px;text-align:right;font-size:9.6px;line-height:9.6px;color:#000;letter-spacing:-0.4px;">36</span>
<div style="left:526px;top:339px;width:2px;height:1px;background:#000;"></div>
<span style="left:496px;top:346.87px;width:28px;text-align:right;font-size:9.6px;line-height:9.6px;color:#000;letter-spacing:-0.4px;">45</span>
<div style="left:526px;top:352px;width:2px;height:1px;background:#000;"></div>
<span style="left:496px;top:358.87px;width:28px;text-align:right;font-size:9.6px;line-height:9.6px;color:#000;letter-spacing:-0.4px;">54</span>
<div style="left:526px;top:364px;width:2px;height:1px;background:#000;"></div>
<span style="left:496px;top:370.87px;width:28px;text-align:right;font-size:9.6px;line-height:9.6px;color:#000;letter-spacing:-0.4px;">63</span>
<div style="left:526px;top:376px;width:2px;height:1px;background:#000;"></div>
<span style="left:496px;top:383.87px;width:28px;text-align:right;font-size:9.6px;line-height:9.6px;color:#000;letter-spacing:-0.4px;">72</span>
<div style="left:526px;top:389px;width:2px;height:1px;background:#000;"></div>
<span style="left:496px;top:395.87px;width:28px;text-align:right;font-size:9.6px;line-height:9.6px;color:#000;letter-spacing:-0.4px;">81</span>
<div style="left:526px;top:401px;width:2px;height:1px;background:#000;"></div>
<div style="left:527px;top:294px;width:1px;height:1px;background:#ddd;"></div>
<div style="left:527px;top:298px;width:1px;height:1px;background:#ddd;"></div>
<div style="left:527px;top:306px;width:1px;height:1px;background:#ddd;"></div>
<div style="left:527px;top:311px;width:1px;height:1px;background:#ddd;"></div>
<div style="left:527px;top:319px;width:1px;height:1px;background:#111;"></div>
<div style="left:527px;top:323px;width:1px;height:1px;background:#111;"></div>
<div style="left:527px;top:331px;width:1px;height:1px;background:#111;"></div>
<div style="left:527px;top:335px;width:1px;height:1px;background:#111;"></div>
<div style="left:527px;top:343px;width:1px;height:1px;background:#111;"></div>
<div style="left:527px;top:348px;width:1px;height:1px;background:#111;"></div>
<div style="left:527px;top:356px;width:1px;height:1px;background:#111;"></div>
<div style="left:527px;top:360px;width:1px;height:1px;background:#111;"></div>
<div style="left:527px;top:368px;width:1px;height:1px;background:#111;"></div>
<div style="left:527px;top:372px;width:1px;height:1px;background:#111;"></div>
<div style="left:527px;top:380px;width:1px;height:1px;background:#111;"></div>
<div style="left:527px;top:385px;width:1px;height:1px;background:#111;"></div>
<div style="left:527px;top:393px;width:1px;height:1px;background:#111;"></div>
<div style="left:527px;top:397px;width:1px;height:1px;background:#111;"></div>
<div style="left:527px;top:405px;width:1px;height:1px;background:#111;"></div>
<div style="left:527px;top:409px;width:1px;height:1px;background:#111;"></div>
<span style="left:528px;top:279.16px;width:32px;text-align:center;font-size:9.5px;line-height:9.5px;color:#ebe9e4;letter-spacing:-0.1px;">-16,1</span>
<div style="left:528px;top:317px;width:32px;height:97px;background:#00ff52;"></div>
<div style="left:528px;top:315px;width:31px;height:1px;background:#00ff52;"></div>
<div style="left:528px;top:319px;width:32px;height:1px;background:#111;"></div>
<span style="left:528px;top:296.87px;width:28px;text-align:right;font-size:9.6px;line-height:9.6px;color:#ebe9e4;letter-spacing:-0.4px;">9</span>
<div style="left:558px;top:302px;width:2px;height:1px;background:#ebe9e4;"></div>
<span style="left:528px;top:309.87px;width:28px;text-align:right;font-size:9.6px;line-height:9.6px;color:#ebe9e4;letter-spacing:-0.4px;">18</span>
<div style="left:558px;top:315px;width:2px;height:1px;background:#ebe9e4;"></div>
<span style="left:528px;top:321.87px;width:28px;text-align:right;font-size:9.6px;line-height:9.6px;color:#000;letter-spacing:-0.4px;">27</span>
<div style="left:558px;top:327px;width:2px;height:1px;background:#000;"></div>
<span style="left:528px;top:333.87px;width:28px;text-align:right;font-size:9.6px;line-height:9.6px;color:#000;letter-spacing:-0.4px;">36</span>
<div style="left:558px;top:339px;width:2px;height:1px;background:#000;"></div>
<span style="left:528px;top:346.87px;width:28px;text-align:right;font-size:9.6px;line-height:9.6px;color:#000;letter-spacing:-0.4px;">45</span>
<div style="left:558px;top:352px;width:2px;height:1px;background:#000;"></div>
<span style="left:528px;top:358.87px;width:28px;text-align:right;font-size:9.6px;line-height:9.6px;color:#000;letter-spacing:-0.4px;">54</span>
<div style="left:558px;top:364px;width:2px;height:1px;background:#000;"></div>
<span style="left:528px;top:370.87px;width:28px;text-align:right;font-size:9.6px;line-height:9.6px;color:#000;letter-spacing:-0.4px;">63</span>
<div style="left:558px;top:376px;width:2px;height:1px;background:#000;"></div>
<span style="left:528px;top:383.87px;width:28px;text-align:right;font-size:9.6px;line-height:9.6px;color:#000;letter-spacing:-0.4px;">72</span>
<div style="left:558px;top:389px;width:2px;height:1px;background:#000;"></div>
<span style="left:528px;top:395.87px;width:28px;text-align:right;font-size:9.6px;line-height:9.6px;color:#000;letter-spacing:-0.4px;">81</span>
<div style="left:558px;top:401px;width:2px;height:1px;background:#000;"></div>
<div style="left:559px;top:294px;width:1px;height:1px;background:#ddd;"></div>
<div style="left:559px;top:298px;width:1px;height:1px;background:#ddd;"></div>
<div style="left:559px;top:306px;width:1px;height:1px;background:#ddd;"></div>
<div style="left:559px;top:311px;width:1px;height:1px;background:#ddd;"></div>
<div style="left:559px;top:319px;width:1px;height:1px;background:#111;"></div>
<div style="left:559px;top:323px;width:1px;height:1px;background:#111;"></div>
<div style="left:559px;top:331px;width:1px;height:1px;background:#111;"></div>
<div style="left:559px;top:335px;width:1px;height:1px;background:#111;"></div>
<div style="left:559px;top:343px;width:1px;height:1px;background:#111;"></div>
<div style="left:559px;top:348px;width:1px;height:1px;background:#111;"></div>
<div style="left:559px;top:356px;width:1px;height:1px;background:#111;"></div>
<div style="left:559px;top:360px;width:1px;height:1px;background:#111;"></div>
<div style="left:559px;top:368px;width:1px;height:1px;background:#111;"></div>
<div style="left:559px;top:372px;width:1px;height:1px;background:#111;"></div>
<div style="left:559px;top:380px;width:1px;height:1px;background:#111;"></div>
<div style="left:559px;top:385px;width:1px;height:1px;background:#111;"></div>
<div style="left:559px;top:393px;width:1px;height:1px;background:#111;"></div>
<div style="left:559px;top:397px;width:1px;height:1px;background:#111;"></div>
<div style="left:559px;top:405px;width:1px;height:1px;background:#111;"></div>
<div style="left:559px;top:409px;width:1px;height:1px;background:#111;"></div>
<div style="left:572px;top:277px;width:64px;height:12px;background:#474747;"></div>
<div style="left:572px;top:289px;width:64px;height:126px;background:#121212;"></div>
<span style="left:572px;top:279.16px;width:32px;text-align:center;font-size:9.5px;line-height:9.5px;color:#ebe9e4;letter-spacing:-0.1px;">-79,0</span>
<div style="left:572px;top:399px;width:32px;height:15px;background:#00ff52;"></div>
<div style="left:572px;top:404px;width:32px;height:1px;background:#111;"></div>
<span style="left:572px;top:296.87px;width:28px;text-align:right;font-size:9.6px;line-height:9.6px;color:#ebe9e4;letter-spacing:-0.4px;">9</span>
<div style="left:602px;top:302px;width:2px;height:1px;background:#ebe9e4;"></div>
<span style="left:572px;top:309.87px;width:28px;text-align:right;font-size:9.6px;line-height:9.6px;color:#ebe9e4;letter-spacing:-0.4px;">18</span>
<div style="left:602px;top:315px;width:2px;height:1px;background:#ebe9e4;"></div>
<span style="left:572px;top:321.87px;width:28px;text-align:right;font-size:9.6px;line-height:9.6px;color:#ebe9e4;letter-spacing:-0.4px;">27</span>
<div style="left:602px;top:327px;width:2px;height:1px;background:#ebe9e4;"></div>
<span style="left:572px;top:333.87px;width:28px;text-align:right;font-size:9.6px;line-height:9.6px;color:#ebe9e4;letter-spacing:-0.4px;">36</span>
<div style="left:602px;top:339px;width:2px;height:1px;background:#ebe9e4;"></div>
<span style="left:572px;top:346.87px;width:28px;text-align:right;font-size:9.6px;line-height:9.6px;color:#ebe9e4;letter-spacing:-0.4px;">45</span>
<div style="left:602px;top:352px;width:2px;height:1px;background:#ebe9e4;"></div>
<span style="left:572px;top:358.87px;width:28px;text-align:right;font-size:9.6px;line-height:9.6px;color:#ebe9e4;letter-spacing:-0.4px;">54</span>
<div style="left:602px;top:364px;width:2px;height:1px;background:#ebe9e4;"></div>
<span style="left:572px;top:370.87px;width:28px;text-align:right;font-size:9.6px;line-height:9.6px;color:#ebe9e4;letter-spacing:-0.4px;">63</span>
<div style="left:602px;top:376px;width:2px;height:1px;background:#ebe9e4;"></div>
<span style="left:572px;top:383.87px;width:28px;text-align:right;font-size:9.6px;line-height:9.6px;color:#ebe9e4;letter-spacing:-0.4px;">72</span>
<div style="left:602px;top:389px;width:2px;height:1px;background:#ebe9e4;"></div>
<span style="left:572px;top:395.87px;width:28px;text-align:right;font-size:9.6px;line-height:9.6px;color:#000;letter-spacing:-0.4px;">81</span>
<div style="left:602px;top:401px;width:2px;height:1px;background:#000;"></div>
<div style="left:603px;top:294px;width:1px;height:1px;background:#ddd;"></div>
<div style="left:603px;top:298px;width:1px;height:1px;background:#ddd;"></div>
<div style="left:603px;top:306px;width:1px;height:1px;background:#ddd;"></div>
<div style="left:603px;top:311px;width:1px;height:1px;background:#ddd;"></div>
<div style="left:603px;top:319px;width:1px;height:1px;background:#ddd;"></div>
<div style="left:603px;top:323px;width:1px;height:1px;background:#ddd;"></div>
<div style="left:603px;top:331px;width:1px;height:1px;background:#ddd;"></div>
<div style="left:603px;top:335px;width:1px;height:1px;background:#ddd;"></div>
<div style="left:603px;top:343px;width:1px;height:1px;background:#ddd;"></div>
<div style="left:603px;top:348px;width:1px;height:1px;background:#ddd;"></div>
<div style="left:603px;top:356px;width:1px;height:1px;background:#ddd;"></div>
<div style="left:603px;top:360px;width:1px;height:1px;background:#ddd;"></div>
<div style="left:603px;top:368px;width:1px;height:1px;background:#ddd;"></div>
<div style="left:603px;top:372px;width:1px;height:1px;background:#ddd;"></div>
<div style="left:603px;top:380px;width:1px;height:1px;background:#ddd;"></div>
<div style="left:603px;top:385px;width:1px;height:1px;background:#ddd;"></div>
<div style="left:603px;top:393px;width:1px;height:1px;background:#ddd;"></div>
<div style="left:603px;top:397px;width:1px;height:1px;background:#ddd;"></div>
<div style="left:603px;top:405px;width:1px;height:1px;background:#111;"></div>
<div style="left:603px;top:409px;width:1px;height:1px;background:#111;"></div>
<span style="left:604px;top:279.16px;width:32px;text-align:center;font-size:9.5px;line-height:9.5px;color:#ebe9e4;letter-spacing:-0.1px;">-79,7</span>
<div style="left:604px;top:401px;width:32px;height:13px;background:#00ff52;"></div>
<div style="left:604px;top:404px;width:32px;height:1px;background:#111;"></div>
<span style="left:604px;top:296.87px;width:28px;text-align:right;font-size:9.6px;line-height:9.6px;color:#ebe9e4;letter-spacing:-0.4px;">9</span>
<div style="left:634px;top:302px;width:2px;height:1px;background:#ebe9e4;"></div>
<span style="left:604px;top:309.87px;width:28px;text-align:right;font-size:9.6px;line-height:9.6px;color:#ebe9e4;letter-spacing:-0.4px;">18</span>
<div style="left:634px;top:315px;width:2px;height:1px;background:#ebe9e4;"></div>
<span style="left:604px;top:321.87px;width:28px;text-align:right;font-size:9.6px;line-height:9.6px;color:#ebe9e4;letter-spacing:-0.4px;">27</span>
<div style="left:634px;top:327px;width:2px;height:1px;background:#ebe9e4;"></div>
<span style="left:604px;top:333.87px;width:28px;text-align:right;font-size:9.6px;line-height:9.6px;color:#ebe9e4;letter-spacing:-0.4px;">36</span>
<div style="left:634px;top:339px;width:2px;height:1px;background:#ebe9e4;"></div>
<span style="left:604px;top:346.87px;width:28px;text-align:right;font-size:9.6px;line-height:9.6px;color:#ebe9e4;letter-spacing:-0.4px;">45</span>
<div style="left:634px;top:352px;width:2px;height:1px;background:#ebe9e4;"></div>
<span style="left:604px;top:358.87px;width:28px;text-align:right;font-size:9.6px;line-height:9.6px;color:#ebe9e4;letter-spacing:-0.4px;">54</span>
<div style="left:634px;top:364px;width:2px;height:1px;background:#ebe9e4;"></div>
<span style="left:604px;top:370.87px;width:28px;text-align:right;font-size:9.6px;line-height:9.6px;color:#ebe9e4;letter-spacing:-0.4px;">63</span>
<div style="left:634px;top:376px;width:2px;height:1px;background:#ebe9e4;"></div>
<span style="left:604px;top:383.87px;width:28px;text-align:right;font-size:9.6px;line-height:9.6px;color:#ebe9e4;letter-spacing:-0.4px;">72</span>
<div style="left:634px;top:389px;width:2px;height:1px;background:#ebe9e4;"></div>
<span style="left:604px;top:395.87px;width:28px;text-align:right;font-size:9.6px;line-height:9.6px;color:#ebe9e4;letter-spacing:-0.4px;">81</span>
<div style="left:634px;top:401px;width:2px;height:1px;background:#ebe9e4;"></div>
<div style="left:635px;top:294px;width:1px;height:1px;background:#ddd;"></div>
<div style="left:635px;top:298px;width:1px;height:1px;background:#ddd;"></div>
<div style="left:635px;top:306px;width:1px;height:1px;background:#ddd;"></div>
<div style="left:635px;top:311px;width:1px;height:1px;background:#ddd;"></div>
<div style="left:635px;top:319px;width:1px;height:1px;background:#ddd;"></div>
<div style="left:635px;top:323px;width:1px;height:1px;background:#ddd;"></div>
<div style="left:635px;top:331px;width:1px;height:1px;background:#ddd;"></div>
<div style="left:635px;top:335px;width:1px;height:1px;background:#ddd;"></div>
<div style="left:635px;top:343px;width:1px;height:1px;background:#ddd;"></div>
<div style="left:635px;top:348px;width:1px;height:1px;background:#ddd;"></div>
<div style="left:635px;top:356px;width:1px;height:1px;background:#ddd;"></div>
<div style="left:635px;top:360px;width:1px;height:1px;background:#ddd;"></div>
<div style="left:635px;top:368px;width:1px;height:1px;background:#ddd;"></div>
<div style="left:635px;top:372px;width:1px;height:1px;background:#ddd;"></div>
<div style="left:635px;top:380px;width:1px;height:1px;background:#ddd;"></div>
<div style="left:635px;top:385px;width:1px;height:1px;background:#ddd;"></div>
<div style="left:635px;top:393px;width:1px;height:1px;background:#ddd;"></div>
<div style="left:635px;top:397px;width:1px;height:1px;background:#ddd;"></div>
<div style="left:635px;top:405px;width:1px;height:1px;background:#111;"></div>
<div style="left:635px;top:409px;width:1px;height:1px;background:#111;"></div>
<div style="left:648px;top:277px;width:64px;height:12px;background:#474747;"></div>
<div style="left:648px;top:289px;width:64px;height:126px;background:#121212;"></div>
<span style="left:648px;top:279.16px;width:32px;text-align:center;font-size:9.5px;line-height:9.5px;color:#ebe9e4;letter-spacing:-0.1px;"></span>
<span style="left:648px;top:296.87px;width:28px;text-align:right;font-size:9.6px;line-height:9.6px;color:#ebe9e4;letter-spacing:-0.4px;">9</span>
<div style="left:678px;top:302px;width:2px;height:1px;background:#ebe9e4;"></div>
<span style="left:648px;top:309.87px;width:28px;text-align:right;font-size:9.6px;line-height:9.6px;color:#ebe9e4;letter-spacing:-0.4px;">18</span>
<div style="left:678px;top:315px;width:2px;height:1px;background:#ebe9e4;"></div>
<span style="left:648px;top:321.87px;width:28px;text-align:right;font-size:9.6px;line-height:9.6px;color:#ebe9e4;letter-spacing:-0.4px;">27</span>
<div style="left:678px;top:327px;width:2px;height:1px;background:#ebe9e4;"></div>
<span style="left:648px;top:333.87px;width:28px;text-align:right;font-size:9.6px;line-height:9.6px;color:#ebe9e4;letter-spacing:-0.4px;">36</span>
<div style="left:678px;top:339px;width:2px;height:1px;background:#ebe9e4;"></div>
<span style="left:648px;top:346.87px;width:28px;text-align:right;font-size:9.6px;line-height:9.6px;color:#ebe9e4;letter-spacing:-0.4px;">45</span>
<div style="left:678px;top:352px;width:2px;height:1px;background:#ebe9e4;"></div>
<span style="left:648px;top:358.87px;width:28px;text-align:right;font-size:9.6px;line-height:9.6px;color:#ebe9e4;letter-spacing:-0.4px;">54</span>
<div style="left:678px;top:364px;width:2px;height:1px;background:#ebe9e4;"></div>
<span style="left:648px;top:370.87px;width:28px;text-align:right;font-size:9.6px;line-height:9.6px;color:#ebe9e4;letter-spacing:-0.4px;">63</span>
<div style="left:678px;top:376px;width:2px;height:1px;background:#ebe9e4;"></div>
<span style="left:648px;top:383.87px;width:28px;text-align:right;font-size:9.6px;line-height:9.6px;color:#ebe9e4;letter-spacing:-0.4px;">72</span>
<div style="left:678px;top:389px;width:2px;height:1px;background:#ebe9e4;"></div>
<span style="left:648px;top:395.87px;width:28px;text-align:right;font-size:9.6px;line-height:9.6px;color:#ebe9e4;letter-spacing:-0.4px;">81</span>
<div style="left:678px;top:401px;width:2px;height:1px;background:#ebe9e4;"></div>
<div style="left:679px;top:294px;width:1px;height:1px;background:#ddd;"></div>
<div style="left:679px;top:298px;width:1px;height:1px;background:#ddd;"></div>
<div style="left:679px;top:306px;width:1px;height:1px;background:#ddd;"></div>
<div style="left:679px;top:311px;width:1px;height:1px;background:#ddd;"></div>
<div style="left:679px;top:319px;width:1px;height:1px;background:#ddd;"></div>
<div style="left:679px;top:323px;width:1px;height:1px;background:#ddd;"></div>
<div style="left:679px;top:331px;width:1px;height:1px;background:#ddd;"></div>
<div style="left:679px;top:335px;width:1px;height:1px;background:#ddd;"></div>
<div style="left:679px;top:343px;width:1px;height:1px;background:#ddd;"></div>
<div style="left:679px;top:348px;width:1px;height:1px;background:#ddd;"></div>
<div style="left:679px;top:356px;width:1px;height:1px;background:#ddd;"></div>
<div style="left:679px;top:360px;width:1px;height:1px;background:#ddd;"></div>
<div style="left:679px;top:368px;width:1px;height:1px;background:#ddd;"></div>
<div style="left:679px;top:372px;width:1px;height:1px;background:#ddd;"></div>
<div style="left:679px;top:380px;width:1px;height:1px;background:#ddd;"></div>
<div style="left:679px;top:385px;width:1px;height:1px;background:#ddd;"></div>
<div style="left:679px;top:393px;width:1px;height:1px;background:#ddd;"></div>
<div style="left:679px;top:397px;width:1px;height:1px;background:#ddd;"></div>
<div style="left:679px;top:405px;width:1px;height:1px;background:#ddd;"></div>
<div style="left:679px;top:409px;width:1px;height:1px;background:#ddd;"></div>
<span style="left:680px;top:279.16px;width:32px;text-align:center;font-size:9.5px;line-height:9.5px;color:#ebe9e4;letter-spacing:-0.1px;"></span>
<span style="left:680px;top:296.87px;width:28px;text-align:right;font-size:9.6px;line-height:9.6px;color:#ebe9e4;letter-spacing:-0.4px;">9</span>
<div style="left:710px;top:302px;width:2px;height:1px;background:#ebe9e4;"></div>
<span style="left:680px;top:309.87px;width:28px;text-align:right;font-size:9.6px;line-height:9.6px;color:#ebe9e4;letter-spacing:-0.4px;">18</span>
<div style="left:710px;top:315px;width:2px;height:1px;background:#ebe9e4;"></div>
<span style="left:680px;top:321.87px;width:28px;text-align:right;font-size:9.6px;line-height:9.6px;color:#ebe9e4;letter-spacing:-0.4px;">27</span>
<div style="left:710px;top:327px;width:2px;height:1px;background:#ebe9e4;"></div>
<span style="left:680px;top:333.87px;width:28px;text-align:right;font-size:9.6px;line-height:9.6px;color:#ebe9e4;letter-spacing:-0.4px;">36</span>
<div style="left:710px;top:339px;width:2px;height:1px;background:#ebe9e4;"></div>
<span style="left:680px;top:346.87px;width:28px;text-align:right;font-size:9.6px;line-height:9.6px;color:#ebe9e4;letter-spacing:-0.4px;">45</span>
<div style="left:710px;top:352px;width:2px;height:1px;background:#ebe9e4;"></div>
<span style="left:680px;top:358.87px;width:28px;text-align:right;font-size:9.6px;line-height:9.6px;color:#ebe9e4;letter-spacing:-0.4px;">54</span>
<div style="left:710px;top:364px;width:2px;height:1px;background:#ebe9e4;"></div>
<span style="left:680px;top:370.87px;width:28px;text-align:right;font-size:9.6px;line-height:9.6px;color:#ebe9e4;letter-spacing:-0.4px;">63</span>
<div style="left:710px;top:376px;width:2px;height:1px;background:#ebe9e4;"></div>
<span style="left:680px;top:383.87px;width:28px;text-align:right;font-size:9.6px;line-height:9.6px;color:#ebe9e4;letter-spacing:-0.4px;">72</span>
<div style="left:710px;top:389px;width:2px;height:1px;background:#ebe9e4;"></div>
<span style="left:680px;top:395.87px;width:28px;text-align:right;font-size:9.6px;line-height:9.6px;color:#ebe9e4;letter-spacing:-0.4px;">81</span>
<div style="left:710px;top:401px;width:2px;height:1px;background:#ebe9e4;"></div>
<div style="left:711px;top:294px;width:1px;height:1px;background:#ddd;"></div>
<div style="left:711px;top:298px;width:1px;height:1px;background:#ddd;"></div>
<div style="left:711px;top:306px;width:1px;height:1px;background:#ddd;"></div>
<div style="left:711px;top:311px;width:1px;height:1px;background:#ddd;"></div>
<div style="left:711px;top:319px;width:1px;height:1px;background:#ddd;"></div>
<div style="left:711px;top:323px;width:1px;height:1px;background:#ddd;"></div>
<div style="left:711px;top:331px;width:1px;height:1px;background:#ddd;"></div>
<div style="left:711px;top:335px;width:1px;height:1px;background:#ddd;"></div>
<div style="left:711px;top:343px;width:1px;height:1px;background:#ddd;"></div>
<div style="left:711px;top:348px;width:1px;height:1px;background:#ddd;"></div>
<div style="left:711px;top:356px;width:1px;height:1px;background:#ddd;"></div>
<div style="left:711px;top:360px;width:1px;height:1px;background:#ddd;"></div>
<div style="left:711px;top:368px;width:1px;height:1px;background:#ddd;"></div>
<div style="left:711px;top:372px;width:1px;height:1px;background:#ddd;"></div>
<div style="left:711px;top:380px;width:1px;height:1px;background:#ddd;"></div>
<div style="left:711px;top:385px;width:1px;height:1px;background:#ddd;"></div>
<div style="left:711px;top:393px;width:1px;height:1px;background:#ddd;"></div>
<div style="left:711px;top:397px;width:1px;height:1px;background:#ddd;"></div>
<div style="left:711px;top:405px;width:1px;height:1px;background:#ddd;"></div>
<div style="left:711px;top:409px;width:1px;height:1px;background:#ddd;"></div>
<div style="left:724px;top:277px;width:64px;height:12px;background:#474747;"></div>
<div style="left:724px;top:289px;width:64px;height:126px;background:#121212;"></div>
<span style="left:724px;top:279.16px;width:32px;text-align:center;font-size:9.5px;line-height:9.5px;color:#ebe9e4;letter-spacing:-0.1px;">-3,4</span>
<div style="left:724px;top:298px;width:32px;height:116px;background:linear-gradient(to bottom,#fcf400 0px,#f4f400 4px,#c8f820 5px,#80f838 12px,#30fa48 20px,#00ff52 28px,#00ff52 100%);"></div>
<div style="left:724px;top:302px;width:32px;height:1px;background:#111;"></div>
<span style="left:724px;top:296.87px;width:28px;text-align:right;font-size:9.6px;line-height:9.6px;color:#000;letter-spacing:-0.4px;">9</span>
<div style="left:754px;top:302px;width:2px;height:1px;background:#000;"></div>
<span style="left:724px;top:309.87px;width:28px;text-align:right;font-size:9.6px;line-height:9.6px;color:#000;letter-spacing:-0.4px;">18</span>
<div style="left:754px;top:315px;width:2px;height:1px;background:#000;"></div>
<span style="left:724px;top:321.87px;width:28px;text-align:right;font-size:9.6px;line-height:9.6px;color:#000;letter-spacing:-0.4px;">27</span>
<div style="left:754px;top:327px;width:2px;height:1px;background:#000;"></div>
<span style="left:724px;top:333.87px;width:28px;text-align:right;font-size:9.6px;line-height:9.6px;color:#000;letter-spacing:-0.4px;">36</span>
<div style="left:754px;top:339px;width:2px;height:1px;background:#000;"></div>
<span style="left:724px;top:346.87px;width:28px;text-align:right;font-size:9.6px;line-height:9.6px;color:#000;letter-spacing:-0.4px;">45</span>
<div style="left:754px;top:352px;width:2px;height:1px;background:#000;"></div>
<span style="left:724px;top:358.87px;width:28px;text-align:right;font-size:9.6px;line-height:9.6px;color:#000;letter-spacing:-0.4px;">54</span>
<div style="left:754px;top:364px;width:2px;height:1px;background:#000;"></div>
<span style="left:724px;top:370.87px;width:28px;text-align:right;font-size:9.6px;line-height:9.6px;color:#000;letter-spacing:-0.4px;">63</span>
<div style="left:754px;top:376px;width:2px;height:1px;background:#000;"></div>
<span style="left:724px;top:383.87px;width:28px;text-align:right;font-size:9.6px;line-height:9.6px;color:#000;letter-spacing:-0.4px;">72</span>
<div style="left:754px;top:389px;width:2px;height:1px;background:#000;"></div>
<span style="left:724px;top:395.87px;width:28px;text-align:right;font-size:9.6px;line-height:9.6px;color:#000;letter-spacing:-0.4px;">81</span>
<div style="left:754px;top:401px;width:2px;height:1px;background:#000;"></div>
<div style="left:755px;top:294px;width:1px;height:1px;background:#ddd;"></div>
<div style="left:755px;top:298px;width:1px;height:1px;background:#111;"></div>
<div style="left:755px;top:306px;width:1px;height:1px;background:#111;"></div>
<div style="left:755px;top:311px;width:1px;height:1px;background:#111;"></div>
<div style="left:755px;top:319px;width:1px;height:1px;background:#111;"></div>
<div style="left:755px;top:323px;width:1px;height:1px;background:#111;"></div>
<div style="left:755px;top:331px;width:1px;height:1px;background:#111;"></div>
<div style="left:755px;top:335px;width:1px;height:1px;background:#111;"></div>
<div style="left:755px;top:343px;width:1px;height:1px;background:#111;"></div>
<div style="left:755px;top:348px;width:1px;height:1px;background:#111;"></div>
<div style="left:755px;top:356px;width:1px;height:1px;background:#111;"></div>
<div style="left:755px;top:360px;width:1px;height:1px;background:#111;"></div>
<div style="left:755px;top:368px;width:1px;height:1px;background:#111;"></div>
<div style="left:755px;top:372px;width:1px;height:1px;background:#111;"></div>
<div style="left:755px;top:380px;width:1px;height:1px;background:#111;"></div>
<div style="left:755px;top:385px;width:1px;height:1px;background:#111;"></div>
<div style="left:755px;top:393px;width:1px;height:1px;background:#111;"></div>
<div style="left:755px;top:397px;width:1px;height:1px;background:#111;"></div>
<div style="left:755px;top:405px;width:1px;height:1px;background:#111;"></div>
<div style="left:755px;top:409px;width:1px;height:1px;background:#111;"></div>
<span style="left:756px;top:279.16px;width:32px;text-align:center;font-size:9.5px;line-height:9.5px;color:#ebe9e4;letter-spacing:-0.1px;">-0,2</span>
<div style="left:756px;top:298px;width:32px;height:116px;background:linear-gradient(to bottom,#fcf400 0px,#f4f400 4px,#c8f820 5px,#80f838 12px,#30fa48 20px,#00ff52 28px,#00ff52 100%);"></div>
<div style="left:756px;top:300px;width:32px;height:1px;background:#111;"></div>
<div style="left:756px;top:304px;width:32px;height:1px;background:#111;"></div>
<span style="left:756px;top:296.87px;width:28px;text-align:right;font-size:9.6px;line-height:9.6px;color:#000;letter-spacing:-0.4px;">9</span>
<div style="left:786px;top:302px;width:2px;height:1px;background:#000;"></div>
<span style="left:756px;top:309.87px;width:28px;text-align:right;font-size:9.6px;line-height:9.6px;color:#000;letter-spacing:-0.4px;">18</span>
<div style="left:786px;top:315px;width:2px;height:1px;background:#000;"></div>
<span style="left:756px;top:321.87px;width:28px;text-align:right;font-size:9.6px;line-height:9.6px;color:#000;letter-spacing:-0.4px;">27</span>
<div style="left:786px;top:327px;width:2px;height:1px;background:#000;"></div>
<span style="left:756px;top:333.87px;width:28px;text-align:right;font-size:9.6px;line-height:9.6px;color:#000;letter-spacing:-0.4px;">36</span>
<div style="left:786px;top:339px;width:2px;height:1px;background:#000;"></div>
<span style="left:756px;top:346.87px;width:28px;text-align:right;font-size:9.6px;line-height:9.6px;color:#000;letter-spacing:-0.4px;">45</span>
<div style="left:786px;top:352px;width:2px;height:1px;background:#000;"></div>
<span style="left:756px;top:358.87px;width:28px;text-align:right;font-size:9.6px;line-height:9.6px;color:#000;letter-spacing:-0.4px;">54</span>
<div style="left:786px;top:364px;width:2px;height:1px;background:#000;"></div>
<span style="left:756px;top:370.87px;width:28px;text-align:right;font-size:9.6px;line-height:9.6px;color:#000;letter-spacing:-0.4px;">63</span>
<div style="left:786px;top:376px;width:2px;height:1px;background:#000;"></div>
<span style="left:756px;top:383.87px;width:28px;text-align:right;font-size:9.6px;line-height:9.6px;color:#000;letter-spacing:-0.4px;">72</span>
<div style="left:786px;top:389px;width:2px;height:1px;background:#000;"></div>
<span style="left:756px;top:395.87px;width:28px;text-align:right;font-size:9.6px;line-height:9.6px;color:#000;letter-spacing:-0.4px;">81</span>
<div style="left:786px;top:401px;width:2px;height:1px;background:#000;"></div>
<div style="left:787px;top:294px;width:1px;height:1px;background:#ddd;"></div>
<div style="left:787px;top:298px;width:1px;height:1px;background:#111;"></div>
<div style="left:787px;top:306px;width:1px;height:1px;background:#111;"></div>
<div style="left:787px;top:311px;width:1px;height:1px;background:#111;"></div>
<div style="left:787px;top:319px;width:1px;height:1px;background:#111;"></div>
<div style="left:787px;top:323px;width:1px;height:1px;background:#111;"></div>
<div style="left:787px;top:331px;width:1px;height:1px;background:#111;"></div>
<div style="left:787px;top:335px;width:1px;height:1px;background:#111;"></div>
<div style="left:787px;top:343px;width:1px;height:1px;background:#111;"></div>
<div style="left:787px;top:348px;width:1px;height:1px;background:#111;"></div>
<div style="left:787px;top:356px;width:1px;height:1px;background:#111;"></div>
<div style="left:787px;top:360px;width:1px;height:1px;background:#111;"></div>
<div style="left:787px;top:368px;width:1px;height:1px;background:#111;"></div>
<div style="left:787px;top:372px;width:1px;height:1px;background:#111;"></div>
<div style="left:787px;top:380px;width:1px;height:1px;background:#111;"></div>
<div style="left:787px;top:385px;width:1px;height:1px;background:#111;"></div>
<div style="left:787px;top:393px;width:1px;height:1px;background:#111;"></div>
<div style="left:787px;top:397px;width:1px;height:1px;background:#111;"></div>
<div style="left:787px;top:405px;width:1px;height:1px;background:#111;"></div>
<div style="left:787px;top:409px;width:1px;height:1px;background:#111;"></div>
<div style="left:40px;top:488px;width:1px;height:42px;background:#5c5c5c;"></div>
<div style="left:39px;top:541px;width:2px;height:82px;background:#787878;"></div>
<div style="left:28px;top:489px;width:5px;height:1px;background:#4a4a4a;"></div>
<div style="left:28px;top:499px;width:5px;height:1px;background:#4a4a4a;"></div>
<div style="left:28px;top:512px;width:5px;height:1px;background:#4a4a4a;"></div>
<div style="left:28px;top:535px;width:10px;height:1px;background:#4a4a4a;"></div>
<div style="left:28px;top:558px;width:5px;height:1px;background:#4a4a4a;"></div>
<div style="left:28px;top:572px;width:5px;height:1px;background:#4a4a4a;"></div>
<div style="left:28px;top:581px;width:5px;height:1px;background:#4a4a4a;"></div>
<div style="left:28px;top:589px;width:5px;height:1px;background:#4a4a4a;"></div>
<div style="left:28px;top:609px;width:5px;height:1px;background:#4a4a4a;"></div>
<div style="left:28px;top:618px;width:5px;height:1px;background:#4a4a4a;"></div>
<div style="left:28px;top:622px;width:5px;height:1px;background:#4a4a4a;"></div>
<div style="left:33px;top:529px;width:13px;height:13px;background:#141414;"></div>
<div style="left:34px;top:530px;width:11px;height:11px;background:#f6f6f6;border:1px solid #ffffff;box-sizing:border-box;"></div>
<div style="left:37px;top:533px;width:5px;height:1px;background:#1a1a1a;border-radius:1px;"></div>
<div style="left:37px;top:537px;width:5px;height:1px;background:#1a1a1a;border-radius:1px;"></div>
<span style="left:19.5px;top:631.53px;width:40px;text-align:center;font-size:10px;line-height:10px;color:#ebe9e4;letter-spacing:-0.3px;">0,0</span>
<svg style="left:78px;top:416px" width="20" height="20" viewBox="0 0 20 20"><path d="M13.02,15.20 L16.25,9.87 A3.8,3.8 0 0 0 11.10,4.61 L5.70,7.72 A5.4,5.4 0 1 0 13.02,15.20 Z" fill="none" stroke="#ececec" stroke-width="1.1"/><circle cx="8.4" cy="12.4" r="2.4" fill="none" stroke="#ececec" stroke-width="1.7"/><circle cx="13" cy="7.9" r="1.5" fill="none" stroke="#ececec" stroke-width="1"/></svg>
<span style="left:98px;top:421.69px;font-size:11px;line-height:11px;color:#ebe9e4;letter-spacing:-0.3px;">Touch</span>
<svg style="left:165px;top:425px" width="8" height="4"><polygon points="0,0 8,0 4.0,4" fill="#eee"/></svg>
<svg style="left:127px;top:444px" width="11" height="6"><polygon points="0,0 11,0 5.5,6" fill="#eee"/></svg>
<div style="left:83px;top:451px;width:97px;height:1px;background:#5a5a5a;"></div>
<div style="left:179px;top:449px;width:1px;height:2px;background:#5a5a5a;"></div>
<span style="left:77px;top:463.17px;width:108px;text-align:center;font-size:9.6px;line-height:9.6px;color:#ebe9e4;letter-spacing:-0.15px;">Center</span>
<svg style="left:81px;top:486px" width="14" height="14" viewBox="0 0 14 14"><path d="M0.7,13 L0.7,1 L2.9,1 L7,7.9 L11.1,1 L13.3,1 L13.3,13 L11.3,13 L11.3,4.4 L7.8,10.4 L6.2,10.4 L2.7,4.4 L2.7,13 Z" fill="#f2f2f2"/></svg>
<svg style="left:83.3px;top:507.6px" width="9.3" height="13" viewBox="0 0 10 14"><path d="M8.3,2.6 C7.4,1.6 6.3,1.1 5,1.1 C3,1.1 1.8,2.2 1.8,3.8 C1.8,7.3 8.4,6.3 8.4,9.9 C8.4,11.7 7,12.8 4.9,12.8 C3.4,12.8 2,12.2 1.1,11.1" fill="none" stroke="#f2f2f2" stroke-width="1.9"/></svg>
<span style="left:81px;top:527.14px;font-size:12px;line-height:12px;color:#e8e8e8;letter-spacing:-0.6px;">fx</span>
<div style="left:87px;top:534px;width:8.2px;height:8.2px;border-radius:50%;background:#5b86f7;"></div>
<svg style="left:80.5px;top:549.2px" width="16" height="14" viewBox="0 0 16 14"><path d="M1,1 H4 C7.5,1 7.5,12.5 11,12.5 H14.5 M1,12.5 H4 C7.5,12.5 7.5,1 11,1 H14.5" fill="none" stroke="#e0e0e0" stroke-width="1.3"/></svg>
<div style="left:82px;top:571px;width:12.2px;height:12.2px;border-radius:50%;background:#f5785a;"></div>
<svg style="left:82px;top:592.5px" width="14" height="11" viewBox="0 0 14 11"><path d="M0,3.6 H2.6 L6.4,0.3 V10.4 L2.6,7.2 H0 Z" fill="#eeeeee"/><path d="M8.2,3 Q9.6,5.35 8.2,7.7 M10.4,1.5 Q12.6,5.35 10.4,9.2" fill="none" stroke="#e6e6e6" stroke-width="1.1"/></svg>
<div style="left:141px;top:488px;width:1px;height:72px;background:#5c5c5c;"></div>
<div style="left:140px;top:571px;width:2px;height:52px;background:#787878;"></div>
<div style="left:129px;top:489px;width:5px;height:1px;background:#4a4a4a;"></div>
<div style="left:129px;top:499px;width:5px;height:1px;background:#4a4a4a;"></div>
<div style="left:129px;top:512px;width:5px;height:1px;background:#4a4a4a;"></div>
<div style="left:129px;top:535px;width:10px;height:1px;background:#4a4a4a;"></div>
<div style="left:129px;top:558px;width:5px;height:1px;background:#4a4a4a;"></div>
<div style="left:129px;top:572px;width:5px;height:1px;background:#4a4a4a;"></div>
<div style="left:129px;top:581px;width:5px;height:1px;background:#4a4a4a;"></div>
<div style="left:129px;top:589px;width:5px;height:1px;background:#4a4a4a;"></div>
<div style="left:129px;top:609px;width:5px;height:1px;background:#4a4a4a;"></div>
<div style="left:129px;top:618px;width:5px;height:1px;background:#4a4a4a;"></div>
<div style="left:129px;top:622px;width:5px;height:1px;background:#4a4a4a;"></div>
<div style="left:134px;top:559px;width:13px;height:13px;background:#141414;"></div>
<div style="left:135px;top:560px;width:11px;height:11px;background:#f6f6f6;border:1px solid #ffffff;box-sizing:border-box;"></div>
<div style="left:138px;top:563px;width:5px;height:1px;background:#1a1a1a;border-radius:1px;"></div>
<div style="left:138px;top:567px;width:5px;height:1px;background:#1a1a1a;border-radius:1px;"></div>
<span style="left:110.5px;top:631.53px;width:60px;text-align:center;font-size:10px;line-height:10px;color:#ebe9e4;letter-spacing:-0.3px;">-4,6</span>
<svg style="left:188px;top:416px" width="20" height="20" viewBox="0 0 20 20"><path d="M13.02,15.20 L16.25,9.87 A3.8,3.8 0 0 0 11.10,4.61 L5.70,7.72 A5.4,5.4 0 1 0 13.02,15.20 Z" fill="none" stroke="#ececec" stroke-width="1.1"/><circle cx="8.4" cy="12.4" r="2.4" fill="none" stroke="#ececec" stroke-width="1.7"/><circle cx="13" cy="7.9" r="1.5" fill="none" stroke="#ececec" stroke-width="1"/></svg>
<span style="left:208px;top:421.69px;font-size:11px;line-height:11px;color:#ebe9e4;letter-spacing:-0.3px;">T<b class="e">...</b></span>
<svg style="left:241px;top:425px" width="8" height="4"><polygon points="0,0 8,0 4.0,4" fill="#eee"/></svg>
<svg style="left:220px;top:444px" width="11" height="6"><polygon points="0,0 11,0 5.5,6" fill="#eee"/></svg>
<div style="left:192px;top:451px;width:64px;height:1px;background:#5a5a5a;"></div>
<div style="left:255px;top:449px;width:1px;height:2px;background:#5a5a5a;"></div>
<span style="left:187px;top:463.17px;width:74px;text-align:center;font-size:9.6px;line-height:9.6px;color:#ebe9e4;letter-spacing:-0.15px;">Center</span>
<svg style="left:191px;top:486px" width="14" height="14" viewBox="0 0 14 14"><path d="M0.7,13 L0.7,1 L2.9,1 L7,7.9 L11.1,1 L13.3,1 L13.3,13 L11.3,13 L11.3,4.4 L7.8,10.4 L6.2,10.4 L2.7,4.4 L2.7,13 Z" fill="#f2f2f2"/></svg>
<svg style="left:193.3px;top:507.6px" width="9.3" height="13" viewBox="0 0 10 14"><path d="M8.3,2.6 C7.4,1.6 6.3,1.1 5,1.1 C3,1.1 1.8,2.2 1.8,3.8 C1.8,7.3 8.4,6.3 8.4,9.9 C8.4,11.7 7,12.8 4.9,12.8 C3.4,12.8 2,12.2 1.1,11.1" fill="none" stroke="#f2f2f2" stroke-width="1.9"/></svg>
<span style="left:191px;top:527.14px;font-size:12px;line-height:12px;color:#e8e8e8;letter-spacing:-0.6px;">fx</span>
<div style="left:197px;top:534px;width:8.2px;height:8.2px;border-radius:50%;background:#5b86f7;"></div>
<svg style="left:190.5px;top:549.2px" width="16" height="14" viewBox="0 0 16 14"><path d="M1,1 H4 C7.5,1 7.5,12.5 11,12.5 H14.5 M1,12.5 H4 C7.5,12.5 7.5,1 11,1 H14.5" fill="none" stroke="#e0e0e0" stroke-width="1.3"/></svg>
<div style="left:192px;top:571px;width:12.2px;height:12.2px;border-radius:50%;background:#f5785a;"></div>
<svg style="left:192px;top:592.5px" width="14" height="11" viewBox="0 0 14 11"><path d="M0,3.6 H2.6 L6.4,0.3 V10.4 L2.6,7.2 H0 Z" fill="#eeeeee"/><path d="M8.2,3 Q9.6,5.35 8.2,7.7 M10.4,1.5 Q12.6,5.35 10.4,9.2" fill="none" stroke="#e6e6e6" stroke-width="1.1"/></svg>
<div style="left:234px;top:488px;width:1px;height:88px;background:#5c5c5c;"></div>
<div style="left:233px;top:587px;width:2px;height:36px;background:#787878;"></div>
<div style="left:222px;top:489px;width:5px;height:1px;background:#4a4a4a;"></div>
<div style="left:222px;top:499px;width:5px;height:1px;background:#4a4a4a;"></div>
<div style="left:222px;top:512px;width:5px;height:1px;background:#4a4a4a;"></div>
<div style="left:222px;top:535px;width:10px;height:1px;background:#4a4a4a;"></div>
<div style="left:222px;top:558px;width:5px;height:1px;background:#4a4a4a;"></div>
<div style="left:222px;top:572px;width:5px;height:1px;background:#4a4a4a;"></div>
<div style="left:222px;top:581px;width:5px;height:1px;background:#4a4a4a;"></div>
<div style="left:222px;top:589px;width:5px;height:1px;background:#4a4a4a;"></div>
<div style="left:222px;top:609px;width:5px;height:1px;background:#4a4a4a;"></div>
<div style="left:222px;top:618px;width:5px;height:1px;background:#4a4a4a;"></div>
<div style="left:222px;top:622px;width:5px;height:1px;background:#4a4a4a;"></div>
<div style="left:227px;top:575px;width:13px;height:13px;background:#141414;"></div>
<div style="left:228px;top:576px;width:11px;height:11px;background:#f6f6f6;border:1px solid #ffffff;box-sizing:border-box;"></div>
<div style="left:231px;top:579px;width:5px;height:1px;background:#1a1a1a;border-radius:1px;"></div>
<div style="left:231px;top:583px;width:5px;height:1px;background:#1a1a1a;border-radius:1px;"></div>
<span style="left:209.5px;top:631.53px;width:50px;text-align:center;font-size:10px;line-height:10px;color:#ebe9e4;letter-spacing:-0.3px;">-11,7</span>
<svg style="left:264px;top:416px" width="20" height="20" viewBox="0 0 20 20"><path d="M13.02,15.20 L16.25,9.87 A3.8,3.8 0 0 0 11.10,4.61 L5.70,7.72 A5.4,5.4 0 1 0 13.02,15.20 Z" fill="none" stroke="#ececec" stroke-width="1.1"/><circle cx="8.4" cy="12.4" r="2.4" fill="none" stroke="#ececec" stroke-width="1.7"/><circle cx="13" cy="7.9" r="1.5" fill="none" stroke="#ececec" stroke-width="1"/></svg>
<span style="left:284px;top:421.69px;font-size:11px;line-height:11px;color:#ebe9e4;letter-spacing:-0.3px;">T<b class="e">...</b></span>
<svg style="left:317px;top:425px" width="8" height="4"><polygon points="0,0 8,0 4.0,4" fill="#eee"/></svg>
<svg style="left:296px;top:444px" width="11" height="6"><polygon points="0,0 11,0 5.5,6" fill="#eee"/></svg>
<div style="left:268px;top:451px;width:64px;height:1px;background:#5a5a5a;"></div>
<div style="left:331px;top:449px;width:1px;height:2px;background:#5a5a5a;"></div>
<span style="left:263px;top:463.17px;width:74px;text-align:center;font-size:9.6px;line-height:9.6px;color:#ebe9e4;letter-spacing:-0.15px;">Center</span>
<svg style="left:267px;top:486px" width="14" height="14" viewBox="0 0 14 14"><path d="M0.7,13 L0.7,1 L2.9,1 L7,7.9 L11.1,1 L13.3,1 L13.3,13 L11.3,13 L11.3,4.4 L7.8,10.4 L6.2,10.4 L2.7,4.4 L2.7,13 Z" fill="#f2f2f2"/></svg>
<svg style="left:269.3px;top:507.6px" width="9.3" height="13" viewBox="0 0 10 14"><path d="M8.3,2.6 C7.4,1.6 6.3,1.1 5,1.1 C3,1.1 1.8,2.2 1.8,3.8 C1.8,7.3 8.4,6.3 8.4,9.9 C8.4,11.7 7,12.8 4.9,12.8 C3.4,12.8 2,12.2 1.1,11.1" fill="none" stroke="#f2f2f2" stroke-width="1.9"/></svg>
<span style="left:267px;top:527.14px;font-size:12px;line-height:12px;color:#e8e8e8;letter-spacing:-0.6px;">fx</span>
<div style="left:273px;top:534px;width:8.2px;height:8.2px;border-radius:50%;background:#5b86f7;"></div>
<svg style="left:266.5px;top:549.2px" width="16" height="14" viewBox="0 0 16 14"><path d="M1,1 H4 C7.5,1 7.5,12.5 11,12.5 H14.5 M1,12.5 H4 C7.5,12.5 7.5,1 11,1 H14.5" fill="none" stroke="#e0e0e0" stroke-width="1.3"/></svg>
<div style="left:268px;top:571px;width:12.2px;height:12.2px;border-radius:50%;background:#f5785a;"></div>
<svg style="left:268px;top:592.5px" width="14" height="11" viewBox="0 0 14 11"><path d="M0,3.6 H2.6 L6.4,0.3 V10.4 L2.6,7.2 H0 Z" fill="#eeeeee"/><path d="M8.2,3 Q9.6,5.35 8.2,7.7 M10.4,1.5 Q12.6,5.35 10.4,9.2" fill="none" stroke="#e6e6e6" stroke-width="1.1"/></svg>
<div style="left:310px;top:488px;width:1px;height:93px;background:#5c5c5c;"></div>
<div style="left:309px;top:592px;width:2px;height:31px;background:#787878;"></div>
<div style="left:298px;top:489px;width:5px;height:1px;background:#4a4a4a;"></div>
<div style="left:298px;top:499px;width:5px;height:1px;background:#4a4a4a;"></div>
<div style="left:298px;top:512px;width:5px;height:1px;background:#4a4a4a;"></div>
<div style="left:298px;top:535px;width:10px;height:1px;background:#4a4a4a;"></div>
<div style="left:298px;top:558px;width:5px;height:1px;background:#4a4a4a;"></div>
<div style="left:298px;top:572px;width:5px;height:1px;background:#4a4a4a;"></div>
<div style="left:298px;top:581px;width:5px;height:1px;background:#4a4a4a;"></div>
<div style="left:298px;top:589px;width:5px;height:1px;background:#4a4a4a;"></div>
<div style="left:298px;top:609px;width:5px;height:1px;background:#4a4a4a;"></div>
<div style="left:298px;top:618px;width:5px;height:1px;background:#4a4a4a;"></div>
<div style="left:298px;top:622px;width:5px;height:1px;background:#4a4a4a;"></div>
<div style="left:303px;top:580px;width:13px;height:13px;background:#141414;"></div>
<div style="left:304px;top:581px;width:11px;height:11px;background:#f6f6f6;border:1px solid #ffffff;box-sizing:border-box;"></div>
<div style="left:307px;top:584px;width:5px;height:1px;background:#1a1a1a;border-radius:1px;"></div>
<div style="left:307px;top:588px;width:5px;height:1px;background:#1a1a1a;border-radius:1px;"></div>
<span style="left:285.5px;top:631.53px;width:50px;text-align:center;font-size:10px;line-height:10px;color:#ebe9e4;letter-spacing:-0.3px;">-19,8</span>
<svg style="left:340px;top:416px" width="20" height="20" viewBox="0 0 20 20"><path d="M13.02,15.20 L16.25,9.87 A3.8,3.8 0 0 0 11.10,4.61 L5.70,7.72 A5.4,5.4 0 1 0 13.02,15.20 Z" fill="none" stroke="#ececec" stroke-width="1.1"/><circle cx="8.4" cy="12.4" r="2.4" fill="none" stroke="#ececec" stroke-width="1.7"/><circle cx="13" cy="7.9" r="1.5" fill="none" stroke="#ececec" stroke-width="1"/></svg>
<span style="left:360px;top:421.69px;font-size:11px;line-height:11px;color:#ebe9e4;letter-spacing:-0.3px;">T<b class="e">...</b></span>
<svg style="left:393px;top:425px" width="8" height="4"><polygon points="0,0 8,0 4.0,4" fill="#eee"/></svg>
<svg style="left:372px;top:444px" width="11" height="6"><polygon points="0,0 11,0 5.5,6" fill="#eee"/></svg>
<div style="left:344px;top:451px;width:64px;height:1px;background:#5a5a5a;"></div>
<div style="left:407px;top:449px;width:1px;height:2px;background:#5a5a5a;"></div>
<span style="left:339px;top:463.17px;width:74px;text-align:center;font-size:9.6px;line-height:9.6px;color:#ebe9e4;letter-spacing:-0.15px;">Center</span>
<svg style="left:343px;top:486px" width="14" height="14" viewBox="0 0 14 14"><path d="M0.7,13 L0.7,1 L2.9,1 L7,7.9 L11.1,1 L13.3,1 L13.3,13 L11.3,13 L11.3,4.4 L7.8,10.4 L6.2,10.4 L2.7,4.4 L2.7,13 Z" fill="#f2f2f2"/></svg>
<svg style="left:345.3px;top:507.6px" width="9.3" height="13" viewBox="0 0 10 14"><path d="M8.3,2.6 C7.4,1.6 6.3,1.1 5,1.1 C3,1.1 1.8,2.2 1.8,3.8 C1.8,7.3 8.4,6.3 8.4,9.9 C8.4,11.7 7,12.8 4.9,12.8 C3.4,12.8 2,12.2 1.1,11.1" fill="none" stroke="#f2f2f2" stroke-width="1.9"/></svg>
<span style="left:343px;top:527.14px;font-size:12px;line-height:12px;color:#e8e8e8;letter-spacing:-0.6px;">fx</span>
<div style="left:349px;top:534px;width:8.2px;height:8.2px;border-radius:50%;background:#5b86f7;"></div>
<svg style="left:342.5px;top:549.2px" width="16" height="14" viewBox="0 0 16 14"><path d="M1,1 H4 C7.5,1 7.5,12.5 11,12.5 H14.5 M1,12.5 H4 C7.5,12.5 7.5,1 11,1 H14.5" fill="none" stroke="#e0e0e0" stroke-width="1.3"/></svg>
<div style="left:344px;top:571px;width:12.2px;height:12.2px;border-radius:50%;background:#f5785a;"></div>
<svg style="left:344px;top:592.5px" width="14" height="11" viewBox="0 0 14 11"><path d="M0,3.6 H2.6 L6.4,0.3 V10.4 L2.6,7.2 H0 Z" fill="#eeeeee"/><path d="M8.2,3 Q9.6,5.35 8.2,7.7 M10.4,1.5 Q12.6,5.35 10.4,9.2" fill="none" stroke="#e6e6e6" stroke-width="1.1"/></svg>
<div style="left:386px;top:488px;width:1px;height:82px;background:#5c5c5c;"></div>
<div style="left:385px;top:581px;width:2px;height:42px;background:#787878;"></div>
<div style="left:374px;top:489px;width:5px;height:1px;background:#4a4a4a;"></div>
<div style="left:374px;top:499px;width:5px;height:1px;background:#4a4a4a;"></div>
<div style="left:374px;top:512px;width:5px;height:1px;background:#4a4a4a;"></div>
<div style="left:374px;top:535px;width:10px;height:1px;background:#4a4a4a;"></div>
<div style="left:374px;top:558px;width:5px;height:1px;background:#4a4a4a;"></div>
<div style="left:374px;top:572px;width:5px;height:1px;background:#4a4a4a;"></div>
<div style="left:374px;top:581px;width:5px;height:1px;background:#4a4a4a;"></div>
<div style="left:374px;top:589px;width:5px;height:1px;background:#4a4a4a;"></div>
<div style="left:374px;top:609px;width:5px;height:1px;background:#4a4a4a;"></div>
<div style="left:374px;top:618px;width:5px;height:1px;background:#4a4a4a;"></div>
<div style="left:374px;top:622px;width:5px;height:1px;background:#4a4a4a;"></div>
<div style="left:379px;top:569px;width:13px;height:13px;background:#141414;"></div>
<div style="left:380px;top:570px;width:11px;height:11px;background:#f6f6f6;border:1px solid #ffffff;box-sizing:border-box;"></div>
<div style="left:383px;top:573px;width:5px;height:1px;background:#1a1a1a;border-radius:1px;"></div>
<div style="left:383px;top:577px;width:5px;height:1px;background:#1a1a1a;border-radius:1px;"></div>
<span style="left:361.5px;top:631.53px;width:50px;text-align:center;font-size:10px;line-height:10px;color:#ebe9e4;letter-spacing:-0.3px;">-7,8</span>
<svg style="left:416px;top:416px" width="20" height="20" viewBox="0 0 20 20"><path d="M13.02,15.20 L16.25,9.87 A3.8,3.8 0 0 0 11.10,4.61 L5.70,7.72 A5.4,5.4 0 1 0 13.02,15.20 Z" fill="none" stroke="#ececec" stroke-width="1.1"/><circle cx="8.4" cy="12.4" r="2.4" fill="none" stroke="#ececec" stroke-width="1.7"/><circle cx="13" cy="7.9" r="1.5" fill="none" stroke="#ececec" stroke-width="1"/></svg>
<span style="left:436px;top:421.69px;font-size:11px;line-height:11px;color:#ebe9e4;letter-spacing:-0.3px;">T<b class="e">...</b></span>
<svg style="left:469px;top:425px" width="8" height="4"><polygon points="0,0 8,0 4.0,4" fill="#eee"/></svg>
<svg style="left:448px;top:444px" width="11" height="6"><polygon points="0,0 11,0 5.5,6" fill="#eee"/></svg>
<div style="left:420px;top:451px;width:64px;height:1px;background:#5a5a5a;"></div>
<div style="left:483px;top:449px;width:1px;height:2px;background:#5a5a5a;"></div>
<span style="left:415px;top:463.17px;width:74px;text-align:center;font-size:9.6px;line-height:9.6px;color:#ebe9e4;letter-spacing:-0.15px;">Center</span>
<svg style="left:419px;top:486px" width="14" height="14" viewBox="0 0 14 14"><path d="M0.7,13 L0.7,1 L2.9,1 L7,7.9 L11.1,1 L13.3,1 L13.3,13 L11.3,13 L11.3,4.4 L7.8,10.4 L6.2,10.4 L2.7,4.4 L2.7,13 Z" fill="#f2f2f2"/></svg>
<svg style="left:421.3px;top:507.6px" width="9.3" height="13" viewBox="0 0 10 14"><path d="M8.3,2.6 C7.4,1.6 6.3,1.1 5,1.1 C3,1.1 1.8,2.2 1.8,3.8 C1.8,7.3 8.4,6.3 8.4,9.9 C8.4,11.7 7,12.8 4.9,12.8 C3.4,12.8 2,12.2 1.1,11.1" fill="none" stroke="#f2f2f2" stroke-width="1.9"/></svg>
<span style="left:419px;top:527.14px;font-size:12px;line-height:12px;color:#e8e8e8;letter-spacing:-0.6px;">fx</span>
<div style="left:425px;top:534px;width:8.2px;height:8.2px;border-radius:50%;background:#5b86f7;"></div>
<svg style="left:418.5px;top:549.2px" width="16" height="14" viewBox="0 0 16 14"><path d="M1,1 H4 C7.5,1 7.5,12.5 11,12.5 H14.5 M1,12.5 H4 C7.5,12.5 7.5,1 11,1 H14.5" fill="none" stroke="#e0e0e0" stroke-width="1.3"/></svg>
<div style="left:420px;top:571px;width:12.2px;height:12.2px;border-radius:50%;background:#f5785a;"></div>
<svg style="left:420px;top:592.5px" width="14" height="11" viewBox="0 0 14 11"><path d="M0,3.6 H2.6 L6.4,0.3 V10.4 L2.6,7.2 H0 Z" fill="#eeeeee"/><path d="M8.2,3 Q9.6,5.35 8.2,7.7 M10.4,1.5 Q12.6,5.35 10.4,9.2" fill="none" stroke="#e6e6e6" stroke-width="1.1"/></svg>
<div style="left:462px;top:488px;width:1px;height:87px;background:#5c5c5c;"></div>
<div style="left:461px;top:586px;width:2px;height:37px;background:#787878;"></div>
<div style="left:450px;top:489px;width:5px;height:1px;background:#4a4a4a;"></div>
<div style="left:450px;top:499px;width:5px;height:1px;background:#4a4a4a;"></div>
<div style="left:450px;top:512px;width:5px;height:1px;background:#4a4a4a;"></div>
<div style="left:450px;top:535px;width:10px;height:1px;background:#4a4a4a;"></div>
<div style="left:450px;top:558px;width:5px;height:1px;background:#4a4a4a;"></div>
<div style="left:450px;top:572px;width:5px;height:1px;background:#4a4a4a;"></div>
<div style="left:450px;top:581px;width:5px;height:1px;background:#4a4a4a;"></div>
<div style="left:450px;top:589px;width:5px;height:1px;background:#4a4a4a;"></div>
<div style="left:450px;top:609px;width:5px;height:1px;background:#4a4a4a;"></div>
<div style="left:450px;top:618px;width:5px;height:1px;background:#4a4a4a;"></div>
<div style="left:450px;top:622px;width:5px;height:1px;background:#4a4a4a;"></div>
<div style="left:455px;top:574px;width:13px;height:13px;background:#141414;"></div>
<div style="left:456px;top:575px;width:11px;height:11px;background:#f6f6f6;border:1px solid #ffffff;box-sizing:border-box;"></div>
<div style="left:459px;top:578px;width:5px;height:1px;background:#1a1a1a;border-radius:1px;"></div>
<div style="left:459px;top:582px;width:5px;height:1px;background:#1a1a1a;border-radius:1px;"></div>
<span style="left:437.5px;top:631.53px;width:50px;text-align:center;font-size:10px;line-height:10px;color:#ebe9e4;letter-spacing:-0.3px;">-11,2</span>
<svg style="left:492px;top:416px" width="20" height="20" viewBox="0 0 20 20"><path d="M13.02,15.20 L16.25,9.87 A3.8,3.8 0 0 0 11.10,4.61 L5.70,7.72 A5.4,5.4 0 1 0 13.02,15.20 Z" fill="none" stroke="#ececec" stroke-width="1.1"/><circle cx="8.4" cy="12.4" r="2.4" fill="none" stroke="#ececec" stroke-width="1.7"/><circle cx="13" cy="7.9" r="1.5" fill="none" stroke="#ececec" stroke-width="1"/></svg>
<span style="left:512px;top:421.69px;font-size:11px;line-height:11px;color:#ebe9e4;letter-spacing:-0.3px;">T<b class="e">...</b></span>
<svg style="left:545px;top:425px" width="8" height="4"><polygon points="0,0 8,0 4.0,4" fill="#eee"/></svg>
<svg style="left:524px;top:444px" width="11" height="6"><polygon points="0,0 11,0 5.5,6" fill="#eee"/></svg>
<div style="left:496px;top:451px;width:64px;height:1px;background:#5a5a5a;"></div>
<div style="left:559px;top:449px;width:1px;height:2px;background:#5a5a5a;"></div>
<span style="left:491px;top:463.17px;width:74px;text-align:center;font-size:9.6px;line-height:9.6px;color:#ebe9e4;letter-spacing:-0.15px;">Center</span>
<svg style="left:495px;top:486px" width="14" height="14" viewBox="0 0 14 14"><path d="M0.7,13 L0.7,1 L2.9,1 L7,7.9 L11.1,1 L13.3,1 L13.3,13 L11.3,13 L11.3,4.4 L7.8,10.4 L6.2,10.4 L2.7,4.4 L2.7,13 Z" fill="#f2f2f2"/></svg>
<svg style="left:497.3px;top:507.6px" width="9.3" height="13" viewBox="0 0 10 14"><path d="M8.3,2.6 C7.4,1.6 6.3,1.1 5,1.1 C3,1.1 1.8,2.2 1.8,3.8 C1.8,7.3 8.4,6.3 8.4,9.9 C8.4,11.7 7,12.8 4.9,12.8 C3.4,12.8 2,12.2 1.1,11.1" fill="none" stroke="#f2f2f2" stroke-width="1.9"/></svg>
<span style="left:495px;top:527.14px;font-size:12px;line-height:12px;color:#e8e8e8;letter-spacing:-0.6px;">fx</span>
<div style="left:501px;top:534px;width:8.2px;height:8.2px;border-radius:50%;background:#5b86f7;"></div>
<svg style="left:494.5px;top:549.2px" width="16" height="14" viewBox="0 0 16 14"><path d="M1,1 H4 C7.5,1 7.5,12.5 11,12.5 H14.5 M1,12.5 H4 C7.5,12.5 7.5,1 11,1 H14.5" fill="none" stroke="#e0e0e0" stroke-width="1.3"/></svg>
<div style="left:496px;top:571px;width:12.2px;height:12.2px;border-radius:50%;background:#f5785a;"></div>
<svg style="left:496px;top:592.5px" width="14" height="11" viewBox="0 0 14 11"><path d="M0,3.6 H2.6 L6.4,0.3 V10.4 L2.6,7.2 H0 Z" fill="#eeeeee"/><path d="M8.2,3 Q9.6,5.35 8.2,7.7 M10.4,1.5 Q12.6,5.35 10.4,9.2" fill="none" stroke="#e6e6e6" stroke-width="1.1"/></svg>
<div style="left:538px;top:488px;width:1px;height:85px;background:#5c5c5c;"></div>
<div style="left:537px;top:584px;width:2px;height:39px;background:#787878;"></div>
<div style="left:526px;top:489px;width:5px;height:1px;background:#4a4a4a;"></div>
<div style="left:526px;top:499px;width:5px;height:1px;background:#4a4a4a;"></div>
<div style="left:526px;top:512px;width:5px;height:1px;background:#4a4a4a;"></div>
<div style="left:526px;top:535px;width:10px;height:1px;background:#4a4a4a;"></div>
<div style="left:526px;top:558px;width:5px;height:1px;background:#4a4a4a;"></div>
<div style="left:526px;top:572px;width:5px;height:1px;background:#4a4a4a;"></div>
<div style="left:526px;top:581px;width:5px;height:1px;background:#4a4a4a;"></div>
<div style="left:526px;top:589px;width:5px;height:1px;background:#4a4a4a;"></div>
<div style="left:526px;top:609px;width:5px;height:1px;background:#4a4a4a;"></div>
<div style="left:526px;top:618px;width:5px;height:1px;background:#4a4a4a;"></div>
<div style="left:526px;top:622px;width:5px;height:1px;background:#4a4a4a;"></div>
<div style="left:531px;top:572px;width:13px;height:13px;background:#141414;"></div>
<div style="left:532px;top:573px;width:11px;height:11px;background:#f6f6f6;border:1px solid #ffffff;box-sizing:border-box;"></div>
<div style="left:535px;top:576px;width:5px;height:1px;background:#1a1a1a;border-radius:1px;"></div>
<div style="left:535px;top:580px;width:5px;height:1px;background:#1a1a1a;border-radius:1px;"></div>
<span style="left:513.5px;top:631.53px;width:50px;text-align:center;font-size:10px;line-height:10px;color:#ebe9e4;letter-spacing:-0.3px;">-10,0</span>
<svg style="left:568px;top:416px" width="20" height="20" viewBox="0 0 20 20"><path d="M13.02,15.20 L16.25,9.87 A3.8,3.8 0 0 0 11.10,4.61 L5.70,7.72 A5.4,5.4 0 1 0 13.02,15.20 Z" fill="none" stroke="#ececec" stroke-width="1.1"/><circle cx="8.4" cy="12.4" r="2.4" fill="none" stroke="#ececec" stroke-width="1.7"/><circle cx="13" cy="7.9" r="1.5" fill="none" stroke="#ececec" stroke-width="1"/></svg>
<span style="left:588px;top:421.69px;font-size:11px;line-height:11px;color:#ebe9e4;letter-spacing:-0.3px;">T<b class="e">...</b></span>
<svg style="left:621px;top:425px" width="8" height="4"><polygon points="0,0 8,0 4.0,4" fill="#eee"/></svg>
<svg style="left:600px;top:444px" width="11" height="6"><polygon points="0,0 11,0 5.5,6" fill="#eee"/></svg>
<div style="left:572px;top:451px;width:64px;height:1px;background:#5a5a5a;"></div>
<div style="left:635px;top:449px;width:1px;height:2px;background:#5a5a5a;"></div>
<span style="left:567px;top:463.17px;width:74px;text-align:center;font-size:9.6px;line-height:9.6px;color:#ebe9e4;letter-spacing:-0.15px;">Center</span>
<svg style="left:571px;top:486px" width="14" height="14" viewBox="0 0 14 14"><path d="M0.7,13 L0.7,1 L2.9,1 L7,7.9 L11.1,1 L13.3,1 L13.3,13 L11.3,13 L11.3,4.4 L7.8,10.4 L6.2,10.4 L2.7,4.4 L2.7,13 Z" fill="#f2f2f2"/></svg>
<svg style="left:573.3px;top:507.6px" width="9.3" height="13" viewBox="0 0 10 14"><path d="M8.3,2.6 C7.4,1.6 6.3,1.1 5,1.1 C3,1.1 1.8,2.2 1.8,3.8 C1.8,7.3 8.4,6.3 8.4,9.9 C8.4,11.7 7,12.8 4.9,12.8 C3.4,12.8 2,12.2 1.1,11.1" fill="none" stroke="#f2f2f2" stroke-width="1.9"/></svg>
<span style="left:571px;top:527.14px;font-size:12px;line-height:12px;color:#e8e8e8;letter-spacing:-0.6px;">fx</span>
<div style="left:577px;top:534px;width:8.2px;height:8.2px;border-radius:50%;background:#5b86f7;"></div>
<svg style="left:570.5px;top:549.2px" width="16" height="14" viewBox="0 0 16 14"><path d="M1,1 H4 C7.5,1 7.5,12.5 11,12.5 H14.5 M1,12.5 H4 C7.5,12.5 7.5,1 11,1 H14.5" fill="none" stroke="#e0e0e0" stroke-width="1.3"/></svg>
<div style="left:572px;top:571px;width:12.2px;height:12.2px;border-radius:50%;background:#f5785a;"></div>
<svg style="left:572px;top:592.5px" width="14" height="11" viewBox="0 0 14 11"><path d="M0,3.6 H2.6 L6.4,0.3 V10.4 L2.6,7.2 H0 Z" fill="#eeeeee"/><path d="M8.2,3 Q9.6,5.35 8.2,7.7 M10.4,1.5 Q12.6,5.35 10.4,9.2" fill="none" stroke="#e6e6e6" stroke-width="1.1"/></svg>
<div style="left:614px;top:488px;width:1px;height:91px;background:#5c5c5c;"></div>
<div style="left:613px;top:590px;width:2px;height:33px;background:#787878;"></div>
<div style="left:602px;top:489px;width:5px;height:1px;background:#4a4a4a;"></div>
<div style="left:602px;top:499px;width:5px;height:1px;background:#4a4a4a;"></div>
<div style="left:602px;top:512px;width:5px;height:1px;background:#4a4a4a;"></div>
<div style="left:602px;top:535px;width:10px;height:1px;background:#4a4a4a;"></div>
<div style="left:602px;top:558px;width:5px;height:1px;background:#4a4a4a;"></div>
<div style="left:602px;top:572px;width:5px;height:1px;background:#4a4a4a;"></div>
<div style="left:602px;top:581px;width:5px;height:1px;background:#4a4a4a;"></div>
<div style="left:602px;top:589px;width:5px;height:1px;background:#4a4a4a;"></div>
<div style="left:602px;top:609px;width:5px;height:1px;background:#4a4a4a;"></div>
<div style="left:602px;top:618px;width:5px;height:1px;background:#4a4a4a;"></div>
<div style="left:602px;top:622px;width:5px;height:1px;background:#4a4a4a;"></div>
<div style="left:607px;top:578px;width:13px;height:13px;background:#141414;"></div>
<div style="left:608px;top:579px;width:11px;height:11px;background:#f6f6f6;border:1px solid #ffffff;box-sizing:border-box;"></div>
<div style="left:611px;top:582px;width:5px;height:1px;background:#1a1a1a;border-radius:1px;"></div>
<div style="left:611px;top:586px;width:5px;height:1px;background:#1a1a1a;border-radius:1px;"></div>
<span style="left:589.5px;top:631.53px;width:50px;text-align:center;font-size:10px;line-height:10px;color:#ebe9e4;letter-spacing:-0.3px;">-15,7</span>
<svg style="left:644px;top:416px" width="20" height="20" viewBox="0 0 20 20"><path d="M13.02,15.20 L16.25,9.87 A3.8,3.8 0 0 0 11.10,4.61 L5.70,7.72 A5.4,5.4 0 1 0 13.02,15.20 Z" fill="none" stroke="#ececec" stroke-width="1.1"/><circle cx="8.4" cy="12.4" r="2.4" fill="none" stroke="#ececec" stroke-width="1.7"/><circle cx="13" cy="7.9" r="1.5" fill="none" stroke="#ececec" stroke-width="1"/></svg>
<span style="left:664px;top:421.69px;font-size:11px;line-height:11px;color:#ebe9e4;letter-spacing:-0.3px;">T<b class="e">...</b></span>
<svg style="left:697px;top:425px" width="8" height="4"><polygon points="0,0 8,0 4.0,4" fill="#eee"/></svg>
<svg style="left:676px;top:444px" width="11" height="6"><polygon points="0,0 11,0 5.5,6" fill="#eee"/></svg>
<div style="left:648px;top:451px;width:64px;height:1px;background:#5a5a5a;"></div>
<div style="left:711px;top:449px;width:1px;height:2px;background:#5a5a5a;"></div>
<span style="left:643px;top:463.17px;width:74px;text-align:center;font-size:9.6px;line-height:9.6px;color:#ebe9e4;letter-spacing:-0.15px;">Center</span>
<svg style="left:647px;top:486px" width="14" height="14" viewBox="0 0 14 14"><path d="M0.7,13 L0.7,1 L2.9,1 L7,7.9 L11.1,1 L13.3,1 L13.3,13 L11.3,13 L11.3,4.4 L7.8,10.4 L6.2,10.4 L2.7,4.4 L2.7,13 Z" fill="#f2f2f2"/></svg>
<svg style="left:649.3px;top:507.6px" width="9.3" height="13" viewBox="0 0 10 14"><path d="M8.3,2.6 C7.4,1.6 6.3,1.1 5,1.1 C3,1.1 1.8,2.2 1.8,3.8 C1.8,7.3 8.4,6.3 8.4,9.9 C8.4,11.7 7,12.8 4.9,12.8 C3.4,12.8 2,12.2 1.1,11.1" fill="none" stroke="#f2f2f2" stroke-width="1.9"/></svg>
<span style="left:647px;top:527.14px;font-size:12px;line-height:12px;color:#e8e8e8;letter-spacing:-0.6px;">fx</span>
<div style="left:653px;top:534px;width:8.2px;height:8.2px;border-radius:50%;background:#5b86f7;"></div>
<div style="left:690px;top:488px;width:1px;height:42px;background:#5c5c5c;"></div>
<div style="left:689px;top:541px;width:2px;height:82px;background:#787878;"></div>
<div style="left:678px;top:489px;width:5px;height:1px;background:#4a4a4a;"></div>
<div style="left:678px;top:499px;width:5px;height:1px;background:#4a4a4a;"></div>
<div style="left:678px;top:512px;width:5px;height:1px;background:#4a4a4a;"></div>
<div style="left:678px;top:535px;width:10px;height:1px;background:#4a4a4a;"></div>
<div style="left:678px;top:558px;width:5px;height:1px;background:#4a4a4a;"></div>
<div style="left:678px;top:572px;width:5px;height:1px;background:#4a4a4a;"></div>
<div style="left:678px;top:581px;width:5px;height:1px;background:#4a4a4a;"></div>
<div style="left:678px;top:589px;width:5px;height:1px;background:#4a4a4a;"></div>
<div style="left:678px;top:609px;width:5px;height:1px;background:#4a4a4a;"></div>
<div style="left:678px;top:618px;width:5px;height:1px;background:#4a4a4a;"></div>
<div style="left:678px;top:622px;width:5px;height:1px;background:#4a4a4a;"></div>
<div style="left:683px;top:529px;width:13px;height:13px;background:#141414;"></div>
<div style="left:684px;top:530px;width:11px;height:11px;background:#f6f6f6;border:1px solid #ffffff;box-sizing:border-box;"></div>
<div style="left:687px;top:533px;width:5px;height:1px;background:#1a1a1a;border-radius:1px;"></div>
<div style="left:687px;top:537px;width:5px;height:1px;background:#1a1a1a;border-radius:1px;"></div>
<span style="left:670px;top:631.53px;width:40px;text-align:center;font-size:10px;line-height:10px;color:#ebe9e4;letter-spacing:-0.3px;">0,0</span>
<svg style="left:720px;top:416px" width="20" height="20" viewBox="0 0 20 20"><path d="M13.02,15.20 L16.25,9.87 A3.8,3.8 0 0 0 11.10,4.61 L5.70,7.72 A5.4,5.4 0 1 0 13.02,15.20 Z" fill="none" stroke="#ececec" stroke-width="1.1"/><circle cx="8.4" cy="12.4" r="2.4" fill="none" stroke="#ececec" stroke-width="1.7"/><circle cx="13" cy="7.9" r="1.5" fill="none" stroke="#ececec" stroke-width="1"/></svg>
<span style="left:740px;top:421.69px;font-size:11px;line-height:11px;color:#ebe9e4;letter-spacing:-0.3px;">T<b class="e">...</b></span>
<svg style="left:773px;top:425px" width="8" height="4"><polygon points="0,0 8,0 4.0,4" fill="#eee"/></svg>
<svg style="left:723px;top:486px" width="14" height="14" viewBox="0 0 14 14"><path d="M0.7,13 L0.7,1 L2.9,1 L7,7.9 L11.1,1 L13.3,1 L13.3,13 L11.3,13 L11.3,4.4 L7.8,10.4 L6.2,10.4 L2.7,4.4 L2.7,13 Z" fill="#f2f2f2"/></svg>
<svg style="left:725.3px;top:507.6px" width="9.3" height="13" viewBox="0 0 10 14"><path d="M8.3,2.6 C7.4,1.6 6.3,1.1 5,1.1 C3,1.1 1.8,2.2 1.8,3.8 C1.8,7.3 8.4,6.3 8.4,9.9 C8.4,11.7 7,12.8 4.9,12.8 C3.4,12.8 2,12.2 1.1,11.1" fill="none" stroke="#f2f2f2" stroke-width="1.9"/></svg>
<span style="left:723px;top:527.14px;font-size:12px;line-height:12px;color:#e8e8e8;letter-spacing:-0.6px;">fx</span>
<div style="left:729px;top:534px;width:8.2px;height:8.2px;border-radius:50%;background:#5b86f7;"></div>
<svg style="left:721px;top:548px" width="8" height="16" viewBox="0 0 8 16"><path d="M3.5,1 V15" stroke="#f0f0f0" stroke-width="1.1"/><circle cx="3.5" cy="7.5" r="1.5" fill="#222" stroke="#f0f0f0" stroke-width="1"/></svg>
<span style="left:728.5px;top:549.84px;font-size:12px;line-height:12px;color:#e8e8e8;letter-spacing:-0.4px;">fx</span>
<svg style="left:725px;top:606px" width="11" height="16" viewBox="0 0 11 16"><path d="M2.3,8 V4.6 A3.2,3.2 0 0 1 8.7,4.6 V8" stroke="#f0f0f0" stroke-width="1.6" fill="none"/><rect x="0" y="8" width="11" height="7.5" fill="#f0f0f0"/></svg>
<div style="left:764px;top:488px;width:1px;height:42px;background:#5c5c5c;"></div>
<div style="left:763px;top:541px;width:2px;height:82px;background:#787878;"></div>
<div style="left:752px;top:489px;width:5px;height:1px;background:#4a4a4a;"></div>
<div style="left:772px;top:489px;width:5px;height:1px;background:#4a4a4a;"></div>
<div style="left:752px;top:499px;width:5px;height:1px;background:#4a4a4a;"></div>
<div style="left:772px;top:499px;width:5px;height:1px;background:#4a4a4a;"></div>
<div style="left:752px;top:512px;width:5px;height:1px;background:#4a4a4a;"></div>
<div style="left:772px;top:512px;width:5px;height:1px;background:#4a4a4a;"></div>
<div style="left:752px;top:535px;width:5px;height:1px;background:#4a4a4a;"></div>
<div style="left:772px;top:535px;width:5px;height:1px;background:#4a4a4a;"></div>
<div style="left:752px;top:558px;width:5px;height:1px;background:#4a4a4a;"></div>
<div style="left:772px;top:558px;width:5px;height:1px;background:#4a4a4a;"></div>
<div style="left:752px;top:572px;width:5px;height:1px;background:#4a4a4a;"></div>
<div style="left:772px;top:572px;width:5px;height:1px;background:#4a4a4a;"></div>
<div style="left:752px;top:581px;width:5px;height:1px;background:#4a4a4a;"></div>
<div style="left:772px;top:581px;width:5px;height:1px;background:#4a4a4a;"></div>
<div style="left:752px;top:589px;width:5px;height:1px;background:#4a4a4a;"></div>
<div style="left:772px;top:589px;width:5px;height:1px;background:#4a4a4a;"></div>
<div style="left:752px;top:609px;width:5px;height:1px;background:#4a4a4a;"></div>
<div style="left:772px;top:609px;width:5px;height:1px;background:#4a4a4a;"></div>
<div style="left:752px;top:618px;width:5px;height:1px;background:#4a4a4a;"></div>
<div style="left:772px;top:618px;width:5px;height:1px;background:#4a4a4a;"></div>
<div style="left:752px;top:622px;width:5px;height:1px;background:#4a4a4a;"></div>
<div style="left:772px;top:622px;width:5px;height:1px;background:#4a4a4a;"></div>
<div style="left:751px;top:529px;width:13px;height:13px;background:#141414;"></div>
<div style="left:752px;top:530px;width:11px;height:11px;background:#f6f6f6;border:1px solid #ffffff;box-sizing:border-box;"></div>
<div style="left:755px;top:533px;width:5px;height:1px;background:#1a1a1a;border-radius:1px;"></div>
<div style="left:755px;top:537px;width:5px;height:1px;background:#1a1a1a;border-radius:1px;"></div>
<div style="left:763px;top:529px;width:13px;height:13px;background:#141414;"></div>
<div style="left:764px;top:530px;width:11px;height:11px;background:#f6f6f6;border:1px solid #ffffff;box-sizing:border-box;"></div>
<div style="left:767px;top:533px;width:5px;height:1px;background:#1a1a1a;border-radius:1px;"></div>
<div style="left:767px;top:537px;width:5px;height:1px;background:#1a1a1a;border-radius:1px;"></div>
<span style="left:722.75px;top:631.53px;width:40px;text-align:center;font-size:10px;line-height:10px;color:#ebe9e4;letter-spacing:-0.3px;">0,0</span>
<span style="left:749.5px;top:631.53px;width:40px;text-align:center;font-size:10px;line-height:10px;color:#ebe9e4;letter-spacing:-0.3px;">0,0</span>
<span style="left:4px;top:650.69px;font-size:11px;line-height:11px;color:#ebe9e4;letter-spacing:-0.3px;">Preview</span>
<div style="left:78px;top:646px;width:106px;height:19px;background:#222;border-top:1px solid #0a0a0a;border-left:1px solid #0a0a0a;border-bottom:1px solid #383838;border-right:1px solid #383838;box-sizing:border-box;"></div>
<span style="left:80px;top:650.69px;font-size:11px;line-height:11px;color:#ebe9e4;letter-spacing:-0.3px;">Drums</span>
<div style="left:188px;top:646px;width:72px;height:19px;background:#222;border-top:1px solid #0a0a0a;border-left:1px solid #0a0a0a;border-bottom:1px solid #383838;border-right:1px solid #383838;box-sizing:border-box;"></div>
<span style="left:190px;top:650.69px;font-size:11px;line-height:11px;color:#ebe9e4;letter-spacing:-0.3px;">Bass</span>
<div style="left:264px;top:646px;width:72px;height:19px;background:#222;border-top:1px solid #0a0a0a;border-left:1px solid #0a0a0a;border-bottom:1px solid #383838;border-right:1px solid #383838;box-sizing:border-box;"></div>
<span style="left:266px;top:650.69px;font-size:11px;line-height:11px;color:#ebe9e4;letter-spacing:-0.3px;">Guitars</span>
<div style="left:340px;top:646px;width:72px;height:19px;background:#222;border-top:1px solid #0a0a0a;border-left:1px solid #0a0a0a;border-bottom:1px solid #383838;border-right:1px solid #383838;box-sizing:border-box;"></div>
<span style="left:342px;top:650.69px;font-size:11px;line-height:11px;color:#ebe9e4;letter-spacing:-0.3px;">Keyboards</span>
<div style="left:416px;top:646px;width:72px;height:19px;background:#222;border-top:1px solid #0a0a0a;border-left:1px solid #0a0a0a;border-bottom:1px solid #383838;border-right:1px solid #383838;box-sizing:border-box;"></div>
<span style="left:418px;top:650.69px;font-size:11px;line-height:11px;color:#ebe9e4;letter-spacing:-0.3px;">Piano Sting</span>
<div style="left:492px;top:646px;width:72px;height:19px;background:#222;border-top:1px solid #0a0a0a;border-left:1px solid #0a0a0a;border-bottom:1px solid #383838;border-right:1px solid #383838;box-sizing:border-box;"></div>
<span style="left:494px;top:650.69px;font-size:11px;line-height:11px;color:#ebe9e4;letter-spacing:-0.3px;">Orchestra</span>
<div style="left:568px;top:646px;width:72px;height:19px;background:#222;border-top:1px solid #0a0a0a;border-left:1px solid #0a0a0a;border-bottom:1px solid #383838;border-right:1px solid #383838;box-sizing:border-box;"></div>
<span style="left:570px;top:650.69px;font-size:11px;line-height:11px;color:#ebe9e4;letter-spacing:-0.3px;">Effects</span>
<div style="left:644px;top:646px;width:72px;height:19px;background:#222;border-top:1px solid #0a0a0a;border-left:1px solid #0a0a0a;border-bottom:1px solid #383838;border-right:1px solid #383838;box-sizing:border-box;"></div>
<span style="left:646px;top:650.69px;font-size:11px;line-height:11px;color:#ebe9e4;letter-spacing:-0.3px;">ExpressFX <b class="e">...</b></span>
<div style="left:720px;top:646px;width:72px;height:19px;background:#222;border-top:1px solid #0a0a0a;border-left:1px solid #0a0a0a;border-bottom:1px solid #383838;border-right:1px solid #383838;box-sizing:border-box;"></div>
<span style="left:722px;top:650.69px;font-size:11px;line-height:11px;color:#ebe9e4;letter-spacing:-0.3px;">Master</span>
<div style="left:793px;top:41px;width:45px;height:2px;background:#3a5ef0;"></div>
<div style="left:836.8px;top:30.90px;width:21px;height:21px;border-radius:50%;background:radial-gradient(circle at 50% 25%,#6a8cfa 0%,#4a70f2 55%,#3a5ee8 100%);"></div>
<span style="left:836.8px;top:34.46px;width:21px;text-align:center;font-size:16px;line-height:16px;color:#fff;letter-spacing:0px;-webkit-text-stroke:0.35px #fff;">1</span>
<div style="left:793px;top:101px;width:45px;height:2px;background:#3a5ef0;"></div>
<div style="left:836.8px;top:90.90px;width:21px;height:21px;border-radius:50%;background:radial-gradient(circle at 50% 25%,#6a8cfa 0%,#4a70f2 55%,#3a5ee8 100%);"></div>
<span style="left:836.8px;top:94.46px;width:21px;text-align:center;font-size:16px;line-height:16px;color:#fff;letter-spacing:0px;-webkit-text-stroke:0.35px #fff;">2</span>
<div style="left:793px;top:154px;width:45px;height:2px;background:#3a5ef0;"></div>
<div style="left:836.8px;top:143.90px;width:21px;height:21px;border-radius:50%;background:radial-gradient(circle at 50% 25%,#6a8cfa 0%,#4a70f2 55%,#3a5ee8 100%);"></div>
<span style="left:836.8px;top:147.46px;width:21px;text-align:center;font-size:16px;line-height:16px;color:#fff;letter-spacing:0px;-webkit-text-stroke:0.35px #fff;">3</span>
<div style="left:793px;top:230px;width:45px;height:2px;background:#3a5ef0;"></div>
<div style="left:836.8px;top:219.90px;width:21px;height:21px;border-radius:50%;background:radial-gradient(circle at 50% 25%,#6a8cfa 0%,#4a70f2 55%,#3a5ee8 100%);"></div>
<span style="left:836.8px;top:223.46px;width:21px;text-align:center;font-size:16px;line-height:16px;color:#fff;letter-spacing:0px;-webkit-text-stroke:0.35px #fff;">4</span>
<div style="left:793px;top:356px;width:45px;height:2px;background:#3a5ef0;"></div>
<div style="left:836.8px;top:346.40px;width:21px;height:21px;border-radius:50%;background:radial-gradient(circle at 50% 25%,#6a8cfa 0%,#4a70f2 55%,#3a5ee8 100%);"></div>
<span style="left:836.8px;top:349.96px;width:21px;text-align:center;font-size:16px;line-height:16px;color:#fff;letter-spacing:0px;-webkit-text-stroke:0.35px #fff;">5</span>
<div style="left:793px;top:558px;width:45px;height:2px;background:#3a5ef0;"></div>
<div style="left:836.8px;top:547.70px;width:21px;height:21px;border-radius:50%;background:radial-gradient(circle at 50% 25%,#6a8cfa 0%,#4a70f2 55%,#3a5ee8 100%);"></div>
<span style="left:836.8px;top:551.26px;width:21px;text-align:center;font-size:16px;line-height:16px;color:#fff;letter-spacing:0px;-webkit-text-stroke:0.35px #fff;">6</span>
<div style="left:793px;top:656px;width:45px;height:2px;background:#3a5ef0;"></div>
<div style="left:836.8px;top:645.20px;width:21px;height:21px;border-radius:50%;background:radial-gradient(circle at 50% 25%,#6a8cfa 0%,#4a70f2 55%,#3a5ee8 100%);"></div>
<span style="left:836.8px;top:648.76px;width:21px;text-align:center;font-size:16px;line-height:16px;color:#fff;letter-spacing:0px;-webkit-text-stroke:0.35px #fff;">7</span>
</body></html>
